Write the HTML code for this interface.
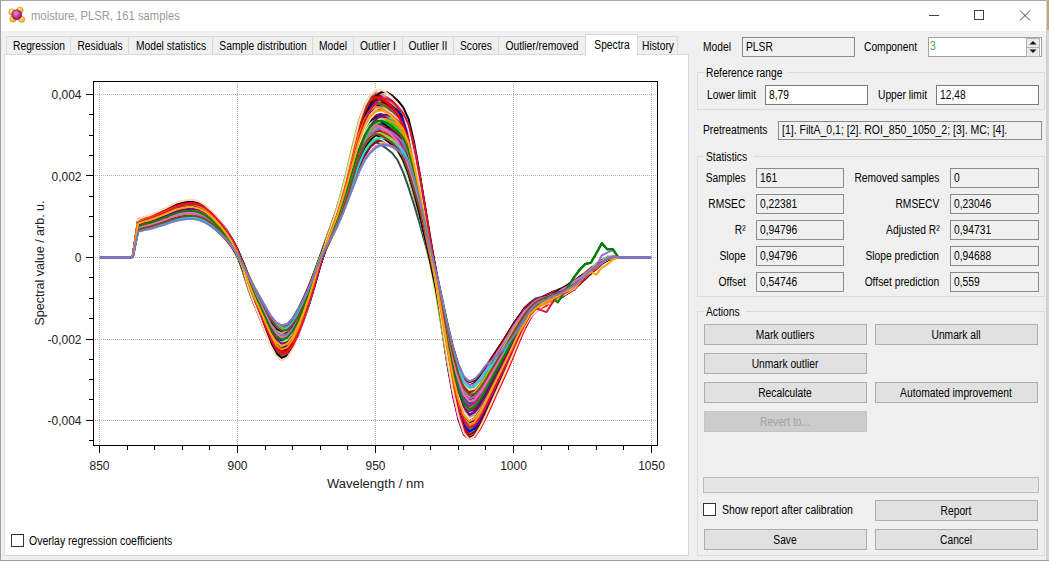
<!DOCTYPE html><html><head><meta charset="utf-8"><style>
html,body{margin:0;padding:0;}
body{width:1049px;height:561px;overflow:hidden;position:relative;background:#f0f0f0;font-family:"Liberation Sans",sans-serif;font-size:12px;}
.b{position:absolute;box-sizing:border-box;}
.t{position:absolute;white-space:nowrap;line-height:14px;}
svg{position:absolute;left:0;top:0;}
</style></head><body>
<div class="b" style="left:0px;top:1px;width:1046px;height:30px;background:#ffffff;"></div>
<div class="b" style="left:0px;top:0px;width:1049px;height:1px;background:#a8a8a8;"></div>
<div class="b" style="left:0px;top:0px;width:1px;height:561px;background:#a0a0a0;"></div>
<div class="b" style="left:1046px;top:0px;width:1px;height:561px;background:#cfcfcf;"></div>
<div class="b" style="left:1047px;top:0px;width:2px;height:561px;background:#d4d4d4;"></div>
<div class="b" style="left:1047px;top:0px;width:2px;height:30px;background:#c8a878;"></div>
<div class="b" style="left:0px;top:560px;width:1049px;height:1px;background:#9c9c9c;"></div>
<svg width="40" height="32" style="left:0;top:0">
<defs><radialGradient id="gy" cx="40%" cy="35%" r="65%"><stop offset="0" stop-color="#ffe88a"/><stop offset="1" stop-color="#e2a420"/></radialGradient>
<radialGradient id="gm" cx="40%" cy="35%" r="65%"><stop offset="0" stop-color="#e890d0"/><stop offset="1" stop-color="#b00070"/></radialGradient></defs>
<circle cx="12" cy="12" r="3.3" fill="url(#gy)" stroke="#c89020" stroke-width="0.4"/><circle cx="20" cy="10.2" r="3.3" fill="url(#gy)" stroke="#c89020" stroke-width="0.4"/>
<circle cx="13" cy="19" r="3.3" fill="url(#gy)" stroke="#c89020" stroke-width="0.4"/><circle cx="21.5" cy="19.3" r="3.3" fill="url(#gy)" stroke="#c89020" stroke-width="0.4"/>
<circle cx="16.7" cy="14.8" r="4.9" fill="url(#gm)" stroke="#7a1030" stroke-width="0.7"/>
</svg>
<div class="t" style="left:30.5px;top:8.5px;color:#999999;font-size:12.5px;transform:scaleX(0.9);transform-origin:0 0;">moisture, PLSR, 161 samples</div>
<svg width="140" height="31" style="left:909px;top:0">
<line x1="20" y1="15.5" x2="30" y2="15.5" stroke="#404040" stroke-width="1"/>
<rect x="65.5" y="10.5" width="9" height="9" fill="none" stroke="#404040" stroke-width="1"/>
<line x1="111" y1="10.5" x2="121" y2="20.5" stroke="#404040" stroke-width="1"/>
<line x1="121" y1="10.5" x2="111" y2="20.5" stroke="#404040" stroke-width="1"/>
</svg>
<div class="b" style="left:4px;top:54px;width:685px;height:502px;background:#ffffff;border:1px solid #d9d9d9;"></div>
<div class="b" style="left:6px;top:36px;width:65px;height:19px;background:#f0f0f0;border:1px solid #d9d9d9;"></div>
<div class="t" style="left:-111.5px;width:300px;text-align:center;top:39.0px;color:#000;font-size:12px;transform:scaleX(0.855);transform-origin:50% 0;">Regression</div>
<div class="b" style="left:70px;top:36px;width:59px;height:19px;background:#f0f0f0;border:1px solid #d9d9d9;"></div>
<div class="t" style="left:-50.5px;width:300px;text-align:center;top:39.0px;color:#000;font-size:12px;transform:scaleX(0.855);transform-origin:50% 0;">Residuals</div>
<div class="b" style="left:128px;top:36px;width:85px;height:19px;background:#f0f0f0;border:1px solid #d9d9d9;"></div>
<div class="t" style="left:20.5px;width:300px;text-align:center;top:39.0px;color:#000;font-size:12px;transform:scaleX(0.855);transform-origin:50% 0;">Model statistics</div>
<div class="b" style="left:212px;top:36px;width:101px;height:19px;background:#f0f0f0;border:1px solid #d9d9d9;"></div>
<div class="t" style="left:112.5px;width:300px;text-align:center;top:39.0px;color:#000;font-size:12px;transform:scaleX(0.855);transform-origin:50% 0;">Sample distribution</div>
<div class="b" style="left:312px;top:36px;width:42px;height:19px;background:#f0f0f0;border:1px solid #d9d9d9;"></div>
<div class="t" style="left:183.0px;width:300px;text-align:center;top:39.0px;color:#000;font-size:12px;transform:scaleX(0.855);transform-origin:50% 0;">Model</div>
<div class="b" style="left:353px;top:36px;width:50px;height:19px;background:#f0f0f0;border:1px solid #d9d9d9;"></div>
<div class="t" style="left:228.0px;width:300px;text-align:center;top:39.0px;color:#000;font-size:12px;transform:scaleX(0.855);transform-origin:50% 0;">Outlier I</div>
<div class="b" style="left:402px;top:36px;width:52px;height:19px;background:#f0f0f0;border:1px solid #d9d9d9;"></div>
<div class="t" style="left:278.0px;width:300px;text-align:center;top:39.0px;color:#000;font-size:12px;transform:scaleX(0.855);transform-origin:50% 0;">Outlier II</div>
<div class="b" style="left:453px;top:36px;width:46px;height:19px;background:#f0f0f0;border:1px solid #d9d9d9;"></div>
<div class="t" style="left:326.0px;width:300px;text-align:center;top:39.0px;color:#000;font-size:12px;transform:scaleX(0.855);transform-origin:50% 0;">Scores</div>
<div class="b" style="left:498px;top:36px;width:88px;height:19px;background:#f0f0f0;border:1px solid #d9d9d9;"></div>
<div class="t" style="left:392.0px;width:300px;text-align:center;top:39.0px;color:#000;font-size:12px;transform:scaleX(0.855);transform-origin:50% 0;">Outlier/removed</div>
<div class="b" style="left:637px;top:36px;width:41px;height:19px;background:#f0f0f0;border:1px solid #d9d9d9;"></div>
<div class="t" style="left:507.5px;width:300px;text-align:center;top:39.0px;color:#000;font-size:12px;transform:scaleX(0.855);transform-origin:50% 0;">History</div>
<div class="b" style="left:585px;top:34px;width:53px;height:22px;background:#ffffff;border:1px solid #d9d9d9;border-bottom:none;"></div>
<div class="t" style="left:461.5px;width:300px;text-align:center;top:37.5px;color:#000;font-size:12px;transform:scaleX(0.855);transform-origin:50% 0;">Spectra</div>
<svg width="1049" height="561" viewBox="0 0 1049 561" style="left:0;top:0"><path d="M99.5 83V445 M237.5 83V445 M375.5 83V445 M513.5 83V445 M651.5 83V445 M95 94.5H657 M95 175.5H657 M95 257.5H657 M95 339.5H657 M95 420.5H657" stroke="#b0b0b0" stroke-width="1" stroke-dasharray="1 1" fill="none" shape-rendering="crispEdges"/><path d="M132.6 257.5 L138.1 230.0 L143.7 228.8 L149.2 227.5 L154.7 225.9 L160.2 224.2 L165.7 222.4 L171.3 220.4 L176.8 218.9 L182.3 217.9 L187.8 217.4 L193.3 217.7 L198.9 219.1 L204.4 221.6 L209.9 225.2 L215.4 229.5 L220.9 234.4 L226.5 240.4 L232.0 247.5 L237.5 256.3 L243.0 267.9 L248.5 280.5 L254.1 290.9 L259.6 300.4 L265.1 310.5 L270.6 319.5 L276.1 325.5 L281.7 327.5 L287.2 324.5 L292.7 318.1 L298.2 308.7 L303.7 297.4 L309.3 284.7 L314.8 270.5 L320.3 256.3 L325.8 244.5 L331.3 233.7 L336.9 221.7 L342.4 207.4 L347.9 191.3 L353.4 173.9 L358.9 158.4 L364.5 148.5 L370.0 143.0 L375.5 142.2 L381.0 144.7 L386.5 148.4 L392.1 153.0 L397.6 160.2 L403.1 172.2 L408.6 187.7 L414.1 205.0 L419.7 223.8 L425.2 243.7 L430.7 264.2 L436.2 285.7 L441.7 310.0 L447.3 334.6 L452.8 355.8 L458.3 372.4 L463.8 383.0 L469.3 386.2 L474.9 382.5 L480.4 375.7 L485.9 367.6 L491.4 358.9 L496.9 350.4 L502.5 341.8 L508.0 332.9 L513.5 323.8 L519.0 315.8 L524.5 308.1 L530.1 302.6 L535.6 298.5 L541.1 297.2 L546.6 295.1 L552.1 292.6 L557.7 289.7 L563.2 287.8 L568.7 285.9 L574.2 281.2 L579.7 277.9 L585.3 273.7 L590.8 267.7 L596.3 264.8 L601.8 260.7 L607.3 257.4 L612.9 256.9 L618.4 257.5" stroke="#2f4f4f" stroke-width="2" fill="none" stroke-linejoin="round"/><path d="M132.6 257.5 L138.1 229.2 L143.7 226.5 L149.2 225.4 L154.7 223.7 L160.2 221.9 L165.7 219.9 L171.3 217.8 L176.8 215.7 L182.3 214.3 L187.8 213.4 L193.3 213.2 L198.9 214.0 L204.4 216.0 L209.9 219.4 L215.4 223.7 L220.9 228.7 L226.5 234.7 L232.0 241.8 L237.5 250.4 L243.0 261.6 L248.5 275.7 L254.1 288.8 L259.6 299.7 L265.1 310.6 L270.6 321.7 L276.1 330.5 L281.7 335.4 L287.2 335.1 L292.7 329.9 L298.2 321.2 L303.7 309.4 L309.3 296.1 L314.8 281.0 L320.3 264.6 L325.8 249.8 L331.3 237.4 L336.9 225.0 L342.4 210.3 L347.9 193.4 L353.4 174.7 L358.9 155.7 L364.5 141.1 L370.0 132.4 L375.5 128.1 L381.0 128.5 L386.5 131.6 L392.1 135.8 L397.6 140.9 L403.1 149.1 L408.6 163.0 L414.1 181.3 L419.7 202.2 L425.2 225.1 L430.7 249.2 L436.2 273.4 L441.7 299.2 L447.3 327.7 L452.8 354.0 L458.3 375.5 L463.8 391.1 L469.3 399.3 L474.9 398.8 L480.4 392.6 L485.9 384.2 L491.4 374.7 L496.9 365.1 L502.5 355.6 L508.0 346.0 L513.5 336.0 L519.0 326.4 L524.5 317.2 L530.1 309.8 L535.6 303.9 L541.1 301.3 L546.6 299.2 L552.1 296.9 L557.7 294.4 L563.2 292.0 L568.7 287.7 L574.2 284.8 L579.7 281.0 L585.3 275.3 L590.8 272.0 L596.3 266.7 L601.8 262.6 L607.3 260.5 L612.9 258.3 L618.4 257.5" stroke="#00bfff" stroke-width="2" fill="none" stroke-linejoin="round"/><path d="M132.6 257.5 L138.1 222.3 L143.7 219.8 L149.2 218.5 L154.7 216.3 L160.2 214.1 L165.7 211.7 L171.3 209.0 L176.8 206.7 L182.3 205.0 L187.8 204.1 L193.3 203.9 L198.9 205.2 L204.4 207.9 L209.9 212.3 L215.4 217.7 L220.9 223.9 L226.5 231.3 L232.0 240.2 L237.5 251.0 L243.0 265.3 L248.5 282.4 L254.1 297.7 L259.6 310.7 L265.1 324.0 L270.6 337.2 L276.1 347.0 L281.7 352.0 L287.2 350.4 L292.7 343.3 L298.2 332.1 L303.7 317.4 L309.3 301.0 L314.8 282.5 L320.3 262.8 L325.8 245.7 L331.3 231.3 L336.9 216.5 L342.4 199.5 L347.9 180.7 L353.4 161.0 L358.9 141.3 L364.5 124.9 L370.0 113.7 L375.5 106.6 L381.0 102.6 L386.5 102.5 L392.1 105.4 L397.6 110.0 L403.1 116.3 L408.6 127.0 L414.1 148.0 L419.7 177.1 L425.2 209.8 L430.7 243.5 L436.2 276.1 L441.7 309.7 L447.3 345.4 L452.8 376.9 L458.3 401.9 L463.8 419.4 L469.3 427.4 L474.9 425.2 L480.4 417.2 L485.9 406.8 L491.4 393.1 L496.9 379.7 L502.5 366.8 L508.0 354.1 L513.5 341.3 L519.0 329.2 L524.5 318.9 L530.1 312.8 L535.6 306.8 L541.1 302.2 L546.6 299.6 L552.1 296.5 L557.7 294.5 L563.2 293.0 L568.7 289.3 L574.2 286.0 L579.7 279.7 L585.3 277.2 L590.8 270.7 L596.3 267.0 L601.8 262.5 L607.3 259.7 L612.9 256.1 L618.4 257.5" stroke="#7b7bc4" stroke-width="2" fill="none" stroke-linejoin="round"/><path d="M132.6 257.5 L138.1 223.2 L143.7 221.1 L149.2 219.8 L154.7 217.7 L160.2 215.6 L165.7 213.3 L171.3 210.7 L176.8 208.5 L182.3 207.1 L187.8 206.2 L193.3 206.2 L198.9 207.5 L204.4 210.3 L209.9 214.7 L215.4 219.9 L220.9 226.0 L226.5 233.2 L232.0 242.0 L237.5 252.7 L243.0 266.8 L248.5 283.4 L254.1 297.8 L259.6 310.2 L265.1 323.2 L270.6 335.8 L276.1 344.9 L281.7 349.2 L287.2 347.0 L292.7 339.7 L298.2 328.4 L303.7 314.0 L309.3 297.9 L314.8 279.6 L320.3 260.5 L325.8 244.2 L331.3 230.0 L336.9 215.0 L342.4 197.3 L347.9 177.4 L353.4 156.1 L358.9 135.2 L364.5 119.6 L370.0 110.0 L375.5 104.9 L381.0 104.5 L386.5 107.5 L392.1 111.9 L397.6 117.6 L403.1 126.4 L408.6 142.6 L414.1 165.9 L419.7 193.2 L425.2 222.7 L430.7 253.0 L436.2 283.1 L441.7 315.5 L447.3 349.8 L452.8 379.7 L458.3 403.4 L463.8 419.6 L469.3 426.2 L474.9 423.1 L480.4 414.7 L485.9 404.2 L491.4 392.8 L496.9 381.4 L502.5 370.1 L508.0 358.5 L513.5 346.6 L519.0 334.4 L524.5 323.9 L530.1 315.6 L535.6 309.0 L541.1 304.8 L546.6 301.9 L552.1 299.3 L557.7 296.8 L563.2 293.6 L568.7 290.8 L574.2 287.1 L579.7 280.8 L585.3 276.3 L590.8 271.3 L596.3 267.8 L601.8 262.5 L607.3 258.4 L612.9 257.8 L618.4 257.5" stroke="#c71585" stroke-width="2" fill="none" stroke-linejoin="round"/><path d="M132.6 257.5 L138.1 231.0 L143.7 229.2 L149.2 228.3 L154.7 226.7 L160.2 225.1 L165.7 223.4 L171.3 221.5 L176.8 219.8 L182.3 218.6 L187.8 217.9 L193.3 217.9 L198.9 218.8 L204.4 220.8 L209.9 224.0 L215.4 228.0 L220.9 232.5 L226.5 238.0 L232.0 244.5 L237.5 252.4 L243.0 262.8 L248.5 275.5 L254.1 286.9 L259.6 296.5 L265.1 306.4 L270.6 316.3 L276.1 323.8 L281.7 327.8 L287.2 326.9 L292.7 321.8 L298.2 313.7 L303.7 302.9 L309.3 290.7 L314.8 276.9 L320.3 262.0 L325.8 249.0 L331.3 238.0 L336.9 226.8 L342.4 213.8 L347.9 199.5 L353.4 184.4 L358.9 169.2 L364.5 156.2 L370.0 147.0 L375.5 140.9 L381.0 137.1 L386.5 136.1 L392.1 137.7 L397.6 140.9 L403.1 145.4 L408.6 152.9 L414.1 168.6 L419.7 191.5 L425.2 217.6 L430.7 244.7 L436.2 271.0 L441.7 297.9 L447.3 326.7 L452.8 352.2 L458.3 372.6 L463.8 386.9 L469.3 393.8 L474.9 392.3 L480.4 386.0 L485.9 377.8 L491.4 368.6 L496.9 359.4 L502.5 350.3 L508.0 341.0 L513.5 331.3 L519.0 322.4 L524.5 313.6 L530.1 306.9 L535.6 302.9 L541.1 299.5 L546.6 297.1 L552.1 295.6 L557.7 293.4 L563.2 289.9 L568.7 287.4 L574.2 283.8 L579.7 280.3 L585.3 274.1 L590.8 270.1 L596.3 266.5 L601.8 261.4 L607.3 260.4 L612.9 258.0 L618.4 257.5" stroke="#000000" stroke-width="2" fill="none" stroke-linejoin="round"/><path d="M132.6 257.5 L138.1 229.0 L143.7 227.5 L149.2 226.3 L154.7 224.5 L160.2 222.7 L165.7 220.7 L171.3 218.6 L176.8 216.8 L182.3 215.7 L187.8 215.0 L193.3 215.1 L198.9 216.4 L204.4 218.9 L209.9 222.6 L215.4 227.0 L220.9 232.2 L226.5 238.3 L232.0 245.7 L237.5 254.9 L243.0 267.0 L248.5 280.6 L254.1 292.1 L259.6 302.2 L265.1 312.9 L270.6 322.8 L276.1 329.7 L281.7 332.4 L287.2 329.8 L292.7 323.3 L298.2 313.6 L303.7 301.6 L309.3 288.3 L314.8 273.3 L320.3 258.0 L325.8 245.2 L331.3 233.9 L336.9 221.8 L342.4 207.6 L347.9 191.8 L353.4 175.1 L358.9 159.2 L364.5 147.7 L370.0 140.7 L375.5 137.1 L381.0 137.2 L386.5 139.7 L392.1 143.4 L397.6 148.0 L403.1 155.1 L408.6 168.4 L414.1 187.2 L419.7 209.1 L425.2 232.6 L430.7 256.5 L436.2 280.2 L441.7 305.9 L447.3 332.3 L452.8 354.9 L458.3 372.6 L463.8 384.2 L469.3 388.3 L474.9 385.1 L480.4 378.3 L485.9 370.1 L491.4 361.3 L496.9 352.6 L502.5 343.9 L508.0 334.9 L513.5 325.7 L519.0 317.5 L524.5 310.1 L530.1 304.3 L535.6 300.4 L541.1 297.2 L546.6 295.8 L552.1 297.8 L557.7 302.3 L563.2 294.2 L568.7 285.6 L574.2 277.1 L579.7 269.7 L585.3 264.0 L590.8 262.8 L596.3 253.4 L601.8 243.2 L607.3 249.3 L612.9 249.3 L618.4 257.5" stroke="#008000" stroke-width="2" fill="none" stroke-linejoin="round"/><path d="M132.6 257.5 L138.1 221.5 L143.7 218.7 L149.2 217.4 L154.7 215.2 L160.2 212.9 L165.7 210.5 L171.3 207.8 L176.8 205.3 L182.3 203.6 L187.8 202.6 L193.3 202.4 L198.9 203.6 L204.4 206.2 L209.9 210.6 L215.4 216.1 L220.9 222.4 L226.5 229.9 L232.0 238.9 L237.5 249.8 L243.0 264.1 L248.5 281.6 L254.1 297.6 L259.6 310.9 L265.1 324.5 L270.6 338.2 L276.1 348.7 L281.7 354.3 L287.2 353.3 L292.7 346.4 L298.2 335.2 L303.7 320.4 L309.3 303.7 L314.8 284.9 L320.3 264.6 L325.8 246.7 L331.3 231.5 L336.9 216.2 L342.4 198.4 L347.9 178.3 L353.4 156.7 L358.9 134.8 L364.5 117.1 L370.0 105.7 L375.5 98.9 L381.0 96.6 L386.5 98.5 L392.1 102.5 L397.6 107.9 L403.1 115.3 L408.6 129.0 L414.1 151.9 L419.7 180.4 L425.2 211.9 L430.7 244.7 L436.2 276.9 L441.7 310.6 L447.3 347.0 L452.8 379.9 L458.3 406.3 L463.8 425.2 L469.3 434.5 L474.9 433.1 L480.4 425.0 L485.9 414.4 L491.4 402.6 L496.9 390.6 L502.5 378.8 L508.0 366.8 L513.5 354.3 L519.0 341.0 L524.5 329.6 L530.1 318.7 L535.6 311.1 L541.1 306.8 L546.6 305.6 L552.1 300.8 L557.7 298.4 L563.2 296.0 L568.7 292.9 L574.2 288.6 L579.7 284.8 L585.3 278.0 L590.8 272.6 L596.3 268.6 L601.8 263.7 L607.3 259.2 L612.9 258.2 L618.4 257.5" stroke="#ffa07a" stroke-width="2" fill="none" stroke-linejoin="round"/><path d="M132.6 257.5 L138.1 228.9 L143.7 226.6 L149.2 225.5 L154.7 223.9 L160.2 222.1 L165.7 220.2 L171.3 218.1 L176.8 216.2 L182.3 214.9 L187.8 214.1 L193.3 213.9 L198.9 214.9 L204.4 217.0 L209.9 220.4 L215.4 224.8 L220.9 229.7 L226.5 235.6 L232.0 242.6 L237.5 251.0 L243.0 262.0 L248.5 275.6 L254.1 288.1 L259.6 298.5 L265.1 309.0 L270.6 319.6 L276.1 327.7 L281.7 332.2 L287.2 331.6 L292.7 326.4 L298.2 317.9 L303.7 306.5 L309.3 293.7 L314.8 279.3 L320.3 263.6 L325.8 249.6 L331.3 237.9 L336.9 225.9 L342.4 211.7 L347.9 195.1 L353.4 176.8 L358.9 158.4 L364.5 144.9 L370.0 137.1 L375.5 133.9 L381.0 135.3 L386.5 138.7 L392.1 142.9 L397.6 148.6 L403.1 158.1 L408.6 172.4 L414.1 189.6 L419.7 209.0 L425.2 230.0 L430.7 252.2 L436.2 274.9 L441.7 299.7 L447.3 327.1 L452.8 352.4 L458.3 373.1 L463.8 388.2 L469.3 396.0 L474.9 395.5 L480.4 389.5 L485.9 381.4 L491.4 372.3 L496.9 363.0 L502.5 353.9 L508.0 344.5 L513.5 334.7 L519.0 325.4 L524.5 317.5 L530.1 309.0 L535.6 303.7 L541.1 301.0 L546.6 298.8 L552.1 296.5 L557.7 292.9 L563.2 290.2 L568.7 287.6 L574.2 284.3 L579.7 280.2 L585.3 276.0 L590.8 271.0 L596.3 267.7 L601.8 263.1 L607.3 259.9 L612.9 256.8 L618.4 257.5" stroke="#ffdab9" stroke-width="2" fill="none" stroke-linejoin="round"/><path d="M132.6 257.5 L138.1 227.1 L143.7 224.4 L149.2 223.2 L154.7 221.4 L160.2 219.4 L165.7 217.3 L171.3 215.0 L176.8 212.8 L182.3 211.3 L187.8 210.4 L193.3 210.1 L198.9 211.0 L204.4 213.1 L209.9 216.8 L215.4 221.5 L220.9 226.8 L226.5 233.2 L232.0 240.8 L237.5 250.0 L243.0 262.1 L248.5 277.1 L254.1 291.1 L259.6 302.7 L265.1 314.4 L270.6 326.3 L276.1 335.6 L281.7 340.9 L287.2 340.5 L292.7 334.9 L298.2 325.5 L303.7 312.9 L309.3 298.6 L314.8 282.5 L320.3 264.9 L325.8 249.2 L331.3 235.9 L336.9 222.6 L342.4 207.0 L347.9 188.9 L353.4 169.0 L358.9 148.8 L364.5 133.2 L370.0 123.9 L375.5 119.3 L381.0 119.6 L386.5 122.8 L392.1 127.2 L397.6 132.6 L403.1 141.2 L408.6 155.9 L414.1 175.5 L419.7 198.1 L425.2 222.7 L430.7 248.6 L436.2 274.6 L441.7 302.3 L447.3 332.8 L452.8 360.9 L458.3 383.8 L463.8 400.4 L469.3 409.0 L474.9 408.4 L480.4 401.7 L485.9 392.7 L491.4 382.6 L496.9 372.3 L502.5 362.2 L508.0 351.9 L513.5 341.2 L519.0 330.6 L524.5 321.2 L530.1 313.0 L535.6 307.7 L541.1 303.0 L546.6 301.0 L552.1 298.5 L557.7 295.0 L563.2 291.5 L568.7 289.1 L574.2 287.3 L579.7 281.9 L585.3 276.4 L590.8 271.7 L596.3 267.8 L601.8 262.0 L607.3 259.6 L612.9 257.0 L618.4 257.5" stroke="#ff0000" stroke-width="2" fill="none" stroke-linejoin="round"/><path d="M132.6 257.5 L138.1 226.2 L143.7 224.2 L149.2 223.0 L154.7 221.1 L160.2 219.2 L165.7 217.1 L171.3 214.8 L176.8 212.8 L182.3 211.5 L187.8 210.8 L193.3 210.8 L198.9 212.0 L204.4 214.5 L209.9 218.5 L215.4 223.3 L220.9 228.8 L226.5 235.3 L232.0 243.2 L237.5 252.8 L243.0 265.5 L248.5 280.3 L254.1 293.3 L259.6 304.4 L265.1 315.9 L270.6 327.1 L276.1 335.3 L281.7 339.1 L287.2 337.2 L292.7 330.8 L298.2 320.8 L303.7 308.0 L309.3 293.7 L314.8 277.6 L320.3 260.6 L325.8 246.1 L331.3 233.5 L336.9 220.1 L342.4 204.2 L347.9 186.0 L353.4 166.2 L358.9 147.0 L364.5 133.6 L370.0 125.9 L375.5 123.0 L381.0 124.8 L386.5 128.6 L392.1 133.4 L397.6 139.8 L403.1 150.8 L408.6 167.2 L414.1 186.9 L419.7 208.7 L425.2 232.3 L430.7 256.7 L436.2 281.6 L441.7 309.2 L447.3 338.7 L452.8 364.9 L458.3 386.0 L463.8 400.6 L469.3 406.9 L474.9 404.5 L480.4 397.3 L485.9 388.2 L491.4 378.3 L496.9 368.3 L502.5 358.4 L508.0 348.2 L513.5 337.6 L519.0 327.4 L524.5 317.5 L530.1 310.0 L535.6 305.7 L541.1 301.8 L546.6 299.6 L552.1 297.8 L557.7 302.3 L563.2 294.2 L568.7 285.6 L574.2 277.1 L579.7 269.7 L585.3 264.0 L590.8 262.8 L596.3 253.4 L601.8 243.2 L607.3 249.3 L612.9 249.3 L618.4 257.5" stroke="#008000" stroke-width="2" fill="none" stroke-linejoin="round"/><path d="M132.6 257.5 L138.1 222.0 L143.7 220.2 L149.2 218.7 L154.7 216.5 L160.2 214.3 L165.7 211.9 L171.3 209.4 L176.8 207.2 L182.3 205.8 L187.8 205.1 L193.3 205.3 L198.9 206.8 L204.4 210.0 L209.9 214.6 L215.4 220.1 L220.9 226.4 L226.5 234.0 L232.0 243.2 L237.5 254.4 L243.0 269.4 L248.5 286.1 L254.1 300.2 L259.6 312.7 L265.1 326.0 L270.6 338.2 L276.1 346.8 L281.7 350.1 L287.2 346.8 L292.7 338.8 L298.2 326.8 L303.7 312.0 L309.3 295.5 L314.8 276.8 L320.3 257.8 L325.8 241.9 L331.3 227.7 L336.9 212.0 L342.4 193.4 L347.9 172.3 L353.4 149.4 L358.9 128.4 L364.5 114.5 L370.0 106.9 L375.5 105.3 L381.0 108.4 L386.5 113.2 L392.1 119.2 L397.6 128.2 L403.1 143.2 L408.6 163.1 L414.1 185.5 L419.7 210.0 L425.2 236.1 L430.7 263.0 L436.2 290.9 L441.7 322.3 L447.3 354.8 L452.8 383.0 L458.3 405.3 L463.8 420.1 L469.3 425.2 L474.9 421.0 L480.4 412.4 L485.9 401.8 L491.4 390.5 L496.9 379.3 L502.5 368.2 L508.0 356.6 L513.5 344.8 L519.0 332.7 L524.5 321.7 L530.1 312.8 L535.6 306.7 L541.1 305.2 L546.6 301.2 L552.1 298.7 L557.7 296.3 L563.2 294.2 L568.7 290.3 L574.2 286.4 L579.7 280.9 L585.3 275.8 L590.8 270.2 L596.3 266.0 L601.8 262.7 L607.3 258.5 L612.9 256.7 L618.4 257.5" stroke="#7cfc00" stroke-width="2" fill="none" stroke-linejoin="round"/><path d="M132.6 257.5 L138.1 226.6 L143.7 225.2 L149.2 223.8 L154.7 222.0 L160.2 220.2 L165.7 218.1 L171.3 216.0 L176.8 214.3 L182.3 213.3 L187.8 212.8 L193.3 213.1 L198.9 214.7 L204.4 217.6 L209.9 221.7 L215.4 226.5 L220.9 232.1 L226.5 238.7 L232.0 246.7 L237.5 256.6 L243.0 269.7 L248.5 283.6 L254.1 295.2 L259.6 305.7 L265.1 316.9 L270.6 326.8 L276.1 333.4 L281.7 335.3 L287.2 331.9 L292.7 324.6 L298.2 314.0 L303.7 301.3 L309.3 287.2 L314.8 271.3 L320.3 255.7 L325.8 242.7 L331.3 231.0 L336.9 218.1 L342.4 203.3 L347.9 187.3 L353.4 170.9 L358.9 155.5 L364.5 143.7 L370.0 135.8 L375.5 130.7 L381.0 128.1 L386.5 128.4 L392.1 130.9 L397.6 134.7 L403.1 140.3 L408.6 150.7 L414.1 170.9 L419.7 197.1 L425.2 226.1 L430.7 255.2 L436.2 283.4 L441.7 313.5 L447.3 343.5 L452.8 368.4 L458.3 387.5 L463.8 399.5 L469.3 402.8 L474.9 398.4 L480.4 390.7 L485.9 381.5 L491.4 371.8 L496.9 362.1 L502.5 352.4 L508.0 342.4 L513.5 332.1 L519.0 322.4 L524.5 313.4 L530.1 307.1 L535.6 303.2 L541.1 298.8 L546.6 297.3 L552.1 296.5 L557.7 292.6 L563.2 290.5 L568.7 286.4 L574.2 283.8 L579.7 278.6 L585.3 273.8 L590.8 269.3 L596.3 265.2 L601.8 262.1 L607.3 257.8 L612.9 256.3 L618.4 257.5" stroke="#ff8c00" stroke-width="2" fill="none" stroke-linejoin="round"/><path d="M132.6 257.5 L138.1 222.1 L143.7 220.5 L149.2 219.0 L154.7 216.9 L160.2 214.7 L165.7 212.4 L171.3 209.9 L176.8 207.9 L182.3 206.6 L187.8 206.0 L193.3 206.3 L198.9 208.0 L204.4 211.2 L209.9 215.9 L215.4 221.3 L220.9 227.7 L226.5 235.3 L232.0 244.4 L237.5 255.7 L243.0 270.6 L248.5 286.9 L254.1 300.4 L259.6 312.7 L265.1 325.7 L270.6 337.5 L276.1 345.5 L281.7 348.2 L287.2 344.5 L292.7 336.4 L298.2 324.3 L303.7 309.6 L309.3 293.2 L314.8 274.8 L320.3 256.3 L325.8 240.9 L331.3 226.9 L336.9 211.4 L342.4 192.9 L347.9 172.4 L353.4 150.2 L358.9 130.0 L364.5 116.4 L370.0 108.6 L375.5 106.0 L381.0 108.3 L386.5 112.4 L392.1 117.7 L397.6 125.2 L403.1 138.4 L408.6 158.1 L414.1 181.6 L419.7 207.5 L425.2 235.2 L430.7 263.4 L436.2 292.4 L441.7 324.8 L447.3 357.8 L452.8 385.9 L458.3 408.0 L463.8 422.1 L469.3 426.4 L474.9 421.7 L480.4 412.7 L485.9 402.0 L491.4 390.7 L496.9 379.4 L502.5 368.1 L508.0 356.4 L513.5 344.5 L519.0 332.3 L524.5 321.2 L530.1 312.9 L535.6 306.7 L541.1 304.2 L546.6 301.4 L552.1 300.0 L557.7 295.7 L563.2 293.9 L568.7 290.6 L574.2 285.2 L579.7 282.4 L585.3 275.5 L590.8 270.4 L596.3 266.2 L601.8 260.7 L607.3 258.8 L612.9 256.7 L618.4 257.5" stroke="#4169e1" stroke-width="2" fill="none" stroke-linejoin="round"/><path d="M132.6 257.5 L138.1 222.6 L143.7 221.0 L149.2 219.4 L154.7 217.3 L160.2 215.2 L165.7 212.8 L171.3 210.4 L176.8 208.4 L182.3 207.2 L187.8 206.5 L193.3 206.9 L198.9 208.7 L204.4 211.9 L209.9 216.6 L215.4 222.0 L220.9 228.4 L226.5 236.0 L232.0 245.1 L237.5 256.5 L243.0 271.6 L248.5 287.6 L254.1 300.9 L259.6 313.2 L265.1 326.1 L270.6 337.6 L276.1 345.3 L281.7 347.5 L287.2 343.6 L292.7 335.2 L298.2 323.0 L303.7 308.3 L309.3 291.9 L314.8 273.4 L320.3 255.3 L325.8 240.3 L331.3 226.6 L336.9 211.6 L342.4 194.3 L347.9 175.6 L353.4 156.2 L358.9 138.0 L364.5 124.4 L370.0 115.6 L375.5 110.1 L381.0 107.9 L386.5 109.1 L392.1 112.5 L397.6 117.3 L403.1 124.2 L408.6 137.6 L414.1 161.5 L419.7 191.3 L425.2 223.7 L430.7 256.4 L436.2 288.1 L441.7 322.2 L447.3 356.0 L452.8 384.2 L458.3 405.7 L463.8 419.1 L469.3 422.6 L474.9 417.6 L480.4 408.6 L485.9 398.0 L491.4 385.5 L496.9 373.3 L502.5 361.3 L508.0 349.2 L513.5 337.1 L519.0 325.7 L524.5 317.4 L530.1 309.7 L535.6 305.6 L541.1 301.5 L546.6 299.7 L552.1 296.7 L557.7 294.2 L563.2 291.5 L568.7 287.3 L574.2 283.3 L579.7 279.1 L585.3 274.8 L590.8 270.2 L596.3 264.9 L601.8 259.6 L607.3 258.3 L612.9 257.4 L618.4 257.5" stroke="#40e0d0" stroke-width="2" fill="none" stroke-linejoin="round"/><path d="M132.6 257.5 L138.1 222.2 L143.7 220.5 L149.2 218.9 L154.7 216.8 L160.2 214.6 L165.7 212.2 L171.3 209.7 L176.8 207.6 L182.3 206.3 L187.8 205.5 L193.3 205.8 L198.9 207.4 L204.4 210.6 L209.9 215.2 L215.4 220.7 L220.9 227.0 L226.5 234.6 L232.0 243.8 L237.5 255.2 L243.0 270.3 L248.5 286.8 L254.1 300.8 L259.6 313.4 L265.1 326.7 L270.6 338.8 L276.1 347.2 L281.7 350.2 L287.2 346.8 L292.7 338.6 L298.2 326.4 L303.7 311.4 L309.3 294.8 L314.8 275.9 L320.3 256.9 L325.8 241.1 L331.3 226.8 L336.9 211.3 L342.4 193.0 L347.9 172.8 L353.4 151.4 L358.9 131.3 L364.5 116.7 L370.0 107.8 L375.5 103.0 L381.0 102.8 L386.5 105.8 L392.1 110.2 L397.6 116.0 L403.1 125.1 L408.6 142.3 L414.1 167.0 L419.7 195.7 L425.2 226.6 L430.7 257.9 L436.2 289.0 L441.7 322.8 L447.3 357.2 L452.8 386.5 L458.3 409.2 L463.8 423.8 L469.3 428.4 L474.9 423.7 L480.4 414.6 L485.9 403.8 L491.4 392.2 L496.9 380.7 L502.5 369.3 L508.0 357.4 L513.5 345.3 L519.0 333.0 L524.5 324.1 L530.1 312.2 L535.6 308.8 L541.1 305.2 L546.6 301.7 L552.1 300.9 L557.7 295.5 L563.2 293.3 L568.7 290.1 L574.2 286.3 L579.7 281.0 L585.3 275.5 L590.8 270.5 L596.3 265.4 L601.8 261.3 L607.3 258.1 L612.9 256.3 L618.4 257.5" stroke="#adff2f" stroke-width="2" fill="none" stroke-linejoin="round"/><path d="M132.6 257.5 L138.1 228.9 L143.7 227.2 L149.2 226.1 L154.7 224.3 L160.2 222.5 L165.7 220.6 L171.3 218.5 L176.8 216.7 L182.3 215.4 L187.8 214.7 L193.3 214.7 L198.9 215.8 L204.4 218.2 L209.9 221.8 L215.4 226.2 L220.9 231.2 L226.5 237.3 L232.0 244.6 L237.5 253.5 L243.0 265.3 L248.5 279.1 L254.1 291.0 L259.6 301.4 L265.1 312.1 L270.6 322.5 L276.1 330.1 L281.7 333.5 L287.2 331.6 L292.7 325.6 L298.2 316.2 L303.7 304.2 L309.3 290.8 L314.8 275.7 L320.3 260.0 L325.8 246.5 L331.3 234.8 L336.9 222.5 L342.4 208.2 L347.9 192.1 L353.4 175.0 L358.9 158.3 L364.5 145.5 L370.0 137.4 L375.5 132.8 L381.0 131.8 L386.5 133.8 L392.1 137.1 L397.6 141.5 L403.1 147.9 L408.6 160.1 L414.1 179.2 L419.7 202.0 L425.2 226.9 L430.7 252.5 L436.2 277.6 L441.7 304.5 L447.3 332.7 L452.8 357.3 L458.3 376.8 L463.8 390.0 L469.3 395.5 L474.9 392.9 L480.4 386.0 L485.9 377.5 L491.4 368.2 L496.9 358.9 L502.5 349.7 L508.0 340.3 L513.5 330.5 L519.0 321.5 L524.5 313.6 L530.1 305.7 L535.6 302.2 L541.1 299.3 L546.6 297.2 L552.1 295.6 L557.7 292.9 L563.2 288.3 L568.7 286.4 L574.2 283.0 L579.7 278.5 L585.3 274.1 L590.8 269.4 L596.3 266.0 L601.8 262.0 L607.3 258.1 L612.9 257.3 L618.4 257.5" stroke="#d2691e" stroke-width="2" fill="none" stroke-linejoin="round"/><path d="M132.6 257.5 L138.1 222.7 L143.7 220.7 L149.2 219.3 L154.7 217.2 L160.2 215.0 L165.7 212.6 L171.3 210.0 L176.8 207.9 L182.3 206.4 L187.8 205.6 L193.3 205.7 L198.9 207.1 L204.4 210.0 L209.9 214.5 L215.4 219.8 L220.9 226.0 L226.5 233.4 L232.0 242.4 L237.5 253.3 L243.0 267.9 L248.5 284.5 L254.1 298.9 L259.6 311.4 L265.1 324.5 L270.6 337.0 L276.1 345.9 L281.7 349.9 L287.2 347.2 L292.7 339.6 L298.2 328.0 L303.7 313.4 L309.3 297.1 L314.8 278.6 L320.3 259.5 L325.8 243.3 L331.3 229.1 L336.9 213.9 L342.4 195.9 L347.9 175.8 L353.4 154.1 L358.9 133.3 L364.5 118.2 L370.0 109.1 L375.5 104.7 L381.0 105.3 L386.5 108.7 L392.1 113.5 L397.6 119.5 L403.1 129.4 L408.6 146.9 L414.1 170.3 L419.7 197.2 L425.2 226.1 L430.7 255.7 L436.2 285.3 L441.7 317.6 L447.3 351.4 L452.8 380.7 L458.3 403.9 L463.8 419.5 L469.3 425.6 L474.9 422.0 L480.4 413.5 L485.9 403.0 L491.4 391.7 L496.9 380.4 L502.5 369.2 L508.0 357.6 L513.5 345.8 L519.0 333.7 L524.5 322.9 L530.1 313.3 L535.6 308.8 L541.1 304.7 L546.6 301.9 L552.1 299.8 L557.7 296.0 L563.2 293.6 L568.7 290.0 L574.2 286.2 L579.7 281.5 L585.3 276.9 L590.8 270.5 L596.3 267.2 L601.8 260.5 L607.3 258.1 L612.9 256.7 L618.4 257.5" stroke="#cd5c5c" stroke-width="2" fill="none" stroke-linejoin="round"/><path d="M132.6 257.5 L138.1 229.6 L143.7 228.1 L149.2 227.0 L154.7 225.4 L160.2 223.7 L165.7 221.9 L171.3 219.9 L176.8 218.3 L182.3 217.2 L187.8 216.6 L193.3 216.8 L198.9 218.0 L204.4 220.3 L209.9 223.8 L215.4 228.1 L220.9 232.9 L226.5 238.8 L232.0 245.7 L237.5 254.2 L243.0 265.5 L248.5 278.5 L254.1 289.6 L259.6 299.3 L265.1 309.5 L270.6 319.2 L276.1 326.1 L281.7 329.2 L287.2 327.2 L292.7 321.3 L298.2 312.3 L303.7 301.0 L309.3 288.3 L314.8 274.0 L320.3 259.1 L325.8 246.4 L331.3 235.3 L336.9 223.4 L342.4 209.4 L347.9 193.8 L353.4 177.0 L358.9 160.6 L364.5 148.4 L370.0 140.8 L375.5 136.6 L381.0 136.1 L386.5 138.2 L392.1 141.5 L397.6 145.8 L403.1 152.6 L408.6 165.5 L414.1 184.2 L419.7 206.3 L425.2 230.2 L430.7 254.9 L436.2 279.3 L441.7 305.9 L447.3 333.7 L452.8 357.9 L458.3 377.1 L463.8 390.1 L469.3 395.2 L474.9 392.5 L480.4 385.7 L485.9 377.2 L491.4 368.0 L496.9 358.7 L502.5 349.6 L508.0 340.1 L513.5 330.4 L519.0 321.3 L524.5 313.1 L530.1 306.0 L535.6 302.2 L541.1 300.8 L546.6 297.2 L552.1 294.8 L557.7 292.9 L563.2 288.5 L568.7 286.8 L574.2 283.4 L579.7 279.0 L585.3 274.7 L590.8 270.2 L596.3 265.5 L601.8 261.5 L607.3 258.9 L612.9 257.1 L618.4 257.5" stroke="#556b2f" stroke-width="2" fill="none" stroke-linejoin="round"/><path d="M132.6 257.5 L138.1 231.4 L143.7 229.4 L149.2 228.4 L154.7 226.9 L160.2 225.2 L165.7 223.4 L171.3 221.5 L176.8 219.7 L182.3 218.4 L187.8 217.7 L193.3 217.5 L198.9 218.3 L204.4 220.2 L209.9 223.4 L215.4 227.4 L220.9 231.9 L226.5 237.4 L232.0 243.9 L237.5 251.8 L243.0 262.2 L248.5 274.9 L254.1 286.5 L259.6 296.3 L265.1 306.1 L270.6 316.1 L276.1 323.7 L281.7 327.9 L287.2 327.1 L292.7 322.2 L298.2 314.1 L303.7 303.3 L309.3 291.2 L314.8 277.5 L320.3 262.8 L325.8 249.7 L331.3 238.7 L336.9 227.6 L342.4 214.6 L347.9 199.8 L353.4 183.8 L358.9 167.6 L364.5 154.8 L370.0 146.7 L375.5 142.1 L381.0 141.1 L386.5 143.0 L392.1 146.1 L397.6 150.2 L403.1 156.0 L408.6 166.9 L414.1 183.6 L419.7 203.8 L425.2 226.0 L430.7 249.1 L436.2 271.9 L441.7 296.0 L447.3 322.0 L452.8 345.7 L458.3 364.7 L463.8 378.4 L469.3 385.1 L474.9 384.1 L480.4 378.3 L485.9 370.7 L491.4 362.2 L496.9 353.5 L502.5 345.0 L508.0 336.3 L513.5 327.3 L519.0 319.3 L524.5 311.7 L530.1 304.5 L535.6 301.9 L541.1 297.7 L546.6 298.0 L552.1 294.1 L557.7 290.5 L563.2 289.3 L568.7 286.3 L574.2 282.8 L579.7 278.3 L585.3 275.4 L590.8 270.8 L596.3 266.7 L601.8 262.6 L607.3 258.3 L612.9 258.0 L618.4 257.5" stroke="#9acd32" stroke-width="2" fill="none" stroke-linejoin="round"/><path d="M132.6 257.5 L138.1 226.3 L143.7 223.3 L149.2 222.1 L154.7 220.2 L160.2 218.2 L165.7 216.0 L171.3 213.6 L176.8 211.3 L182.3 209.7 L187.8 208.7 L193.3 208.4 L198.9 209.3 L204.4 211.5 L209.9 215.2 L215.4 220.0 L220.9 225.5 L226.5 232.1 L232.0 240.1 L237.5 249.6 L243.0 262.1 L248.5 277.7 L254.1 292.4 L259.6 304.6 L265.1 316.8 L270.6 329.3 L276.1 339.1 L281.7 344.8 L287.2 344.4 L292.7 338.7 L298.2 328.9 L303.7 315.8 L309.3 300.8 L314.8 283.9 L320.3 265.5 L325.8 248.9 L331.3 234.9 L336.9 220.9 L342.4 204.5 L347.9 185.4 L353.4 164.5 L358.9 143.1 L364.5 126.7 L370.0 116.8 L375.5 112.0 L381.0 112.4 L386.5 115.9 L392.1 120.5 L397.6 126.3 L403.1 135.5 L408.6 151.0 L414.1 171.6 L419.7 195.2 L425.2 221.0 L430.7 248.0 L436.2 275.2 L441.7 304.2 L447.3 336.1 L452.8 365.5 L458.3 389.4 L463.8 406.8 L469.3 415.7 L474.9 415.1 L480.4 408.1 L485.9 398.6 L491.4 388.0 L496.9 377.2 L502.5 366.6 L508.0 355.8 L513.5 344.6 L519.0 333.3 L524.5 323.0 L530.1 314.0 L535.6 306.1 L541.1 302.7 L546.6 301.6 L552.1 298.3 L557.7 295.9 L563.2 293.3 L568.7 289.6 L574.2 286.9 L579.7 282.4 L585.3 277.5 L590.8 272.5 L596.3 267.0 L601.8 262.9 L607.3 260.5 L612.9 257.6 L618.4 257.5" stroke="#000000" stroke-width="2" fill="none" stroke-linejoin="round"/><path d="M132.6 257.5 L138.1 228.4 L143.7 226.8 L149.2 225.6 L154.7 223.8 L160.2 221.9 L165.7 219.9 L171.3 217.8 L176.8 215.9 L182.3 214.7 L187.8 214.0 L193.3 214.1 L198.9 215.3 L204.4 217.7 L209.9 221.5 L215.4 226.0 L220.9 231.2 L226.5 237.4 L232.0 244.9 L237.5 254.2 L243.0 266.4 L248.5 280.4 L254.1 292.3 L259.6 302.8 L265.1 313.8 L270.6 324.2 L276.1 331.6 L281.7 334.8 L287.2 332.5 L292.7 326.1 L298.2 316.3 L303.7 304.0 L309.3 290.3 L314.8 274.9 L320.3 258.9 L325.8 245.4 L331.3 233.6 L336.9 220.8 L342.4 205.7 L347.9 188.6 L353.4 170.2 L358.9 152.7 L364.5 140.5 L370.0 133.5 L375.5 130.7 L381.0 132.2 L386.5 135.7 L392.1 140.1 L397.6 145.9 L403.1 155.7 L408.6 171.3 L414.1 190.5 L419.7 211.8 L425.2 234.6 L430.7 258.1 L436.2 281.8 L441.7 308.0 L447.3 335.4 L452.8 359.2 L458.3 378.0 L463.8 390.7 L469.3 395.5 L474.9 392.4 L480.4 385.4 L485.9 376.8 L491.4 367.5 L496.9 358.2 L502.5 349.0 L508.0 339.5 L513.5 329.8 L519.0 320.9 L524.5 313.2 L530.1 305.4 L535.6 301.8 L541.1 299.4 L546.6 296.0 L552.1 293.8 L557.7 292.9 L563.2 290.3 L568.7 286.5 L574.2 282.5 L579.7 278.8 L585.3 273.0 L590.8 270.4 L596.3 264.9 L601.8 261.1 L607.3 258.6 L612.9 258.0 L618.4 257.5" stroke="#000000" stroke-width="2" fill="none" stroke-linejoin="round"/><path d="M132.6 257.5 L138.1 224.7 L143.7 222.7 L149.2 221.5 L154.7 219.6 L160.2 217.6 L165.7 215.5 L171.3 213.1 L176.8 211.1 L182.3 209.8 L187.8 209.0 L193.3 209.0 L198.9 210.3 L204.4 213.0 L209.9 217.0 L215.4 222.0 L220.9 227.7 L226.5 234.5 L232.0 242.6 L237.5 252.6 L243.0 265.7 L248.5 281.1 L254.1 294.6 L259.6 306.2 L265.1 318.2 L270.6 329.9 L276.1 338.5 L281.7 342.7 L287.2 340.8 L292.7 334.2 L298.2 323.9 L303.7 310.5 L309.3 295.6 L314.8 278.7 L320.3 260.9 L325.8 245.6 L331.3 232.3 L336.9 218.3 L342.4 201.8 L347.9 183.1 L353.4 162.8 L358.9 142.9 L364.5 128.0 L370.0 118.8 L375.5 114.0 L381.0 113.8 L386.5 116.6 L392.1 120.8 L397.6 126.1 L403.1 134.6 L408.6 150.2 L414.1 171.9 L419.7 197.2 L425.2 224.6 L430.7 253.0 L436.2 281.4 L441.7 312.1 L447.3 344.9 L452.8 373.8 L458.3 397.0 L463.8 413.1 L469.3 420.1 L474.9 417.5 L480.4 409.7 L485.9 399.8 L491.4 389.0 L496.9 378.0 L502.5 367.2 L508.0 356.1 L513.5 344.6 L519.0 332.9 L524.5 322.5 L530.1 312.7 L535.6 307.2 L541.1 303.8 L546.6 301.2 L552.1 299.5 L557.7 296.4 L563.2 293.5 L568.7 290.6 L574.2 286.2 L579.7 281.7 L585.3 276.2 L590.8 270.6 L596.3 266.4 L601.8 262.2 L607.3 259.1 L612.9 258.0 L618.4 257.5" stroke="#ff4500" stroke-width="2" fill="none" stroke-linejoin="round"/><path d="M132.6 257.5 L138.1 220.3 L143.7 218.5 L149.2 216.9 L154.7 214.7 L160.2 212.3 L165.7 209.8 L171.3 207.1 L176.8 204.9 L182.3 203.4 L187.8 202.6 L193.3 202.8 L198.9 204.5 L204.4 207.8 L209.9 212.6 L215.4 218.4 L220.9 225.0 L226.5 233.1 L232.0 242.8 L237.5 254.7 L243.0 270.7 L248.5 288.3 L254.1 303.2 L259.6 316.5 L265.1 330.6 L270.6 343.6 L276.1 352.6 L281.7 356.1 L287.2 352.5 L292.7 344.0 L298.2 331.1 L303.7 315.2 L309.3 297.6 L314.8 277.5 L320.3 257.3 L325.8 240.3 L331.3 225.1 L336.9 208.4 L342.4 188.7 L347.9 166.8 L353.4 143.3 L358.9 121.3 L364.5 106.0 L370.0 96.8 L375.5 92.6 L381.0 93.7 L386.5 97.7 L392.1 102.9 L397.6 109.8 L403.1 121.5 L408.6 141.4 L414.1 167.3 L419.7 196.6 L425.2 227.9 L430.7 259.7 L436.2 291.7 L441.7 327.0 L447.3 363.0 L452.8 393.8 L458.3 417.8 L463.8 433.4 L469.3 438.4 L474.9 433.6 L480.4 423.9 L485.9 412.4 L491.4 400.1 L496.9 387.9 L502.5 375.8 L508.0 363.3 L513.5 350.5 L519.0 337.1 L524.5 325.4 L530.1 317.0 L535.6 309.6 L541.1 305.5 L546.6 304.6 L552.1 301.2 L557.7 296.5 L563.2 295.2 L568.7 292.2 L574.2 286.5 L579.7 281.9 L585.3 275.9 L590.8 272.4 L596.3 265.5 L601.8 261.5 L607.3 258.7 L612.9 257.3 L618.4 257.5" stroke="#8b0000" stroke-width="2" fill="none" stroke-linejoin="round"/><path d="M132.6 257.5 L138.1 231.1 L143.7 229.3 L149.2 228.3 L154.7 226.6 L160.2 224.9 L165.7 223.1 L171.3 221.1 L176.8 219.4 L182.3 218.2 L187.8 217.4 L193.3 217.4 L198.9 218.3 L204.4 220.4 L209.9 223.7 L215.4 227.8 L220.9 232.5 L226.5 238.1 L232.0 244.9 L237.5 253.2 L243.0 264.1 L248.5 277.1 L254.1 288.5 L259.6 298.3 L265.1 308.4 L270.6 318.3 L276.1 325.6 L281.7 329.2 L287.2 327.7 L292.7 322.2 L298.2 313.5 L303.7 302.3 L309.3 289.7 L314.8 275.6 L320.3 260.7 L325.8 247.8 L331.3 236.7 L336.9 225.2 L342.4 211.5 L347.9 196.2 L353.4 179.6 L358.9 163.3 L364.5 151.2 L370.0 143.8 L375.5 139.9 L381.0 139.9 L386.5 142.4 L392.1 146.0 L397.6 150.5 L403.1 157.5 L408.6 170.1 L414.1 187.7 L419.7 208.2 L425.2 230.4 L430.7 253.3 L436.2 275.9 L441.7 300.3 L447.3 326.3 L452.8 349.2 L458.3 367.4 L463.8 380.0 L469.3 385.4 L474.9 383.3 L480.4 377.1 L485.9 369.1 L491.4 360.5 L496.9 351.9 L502.5 343.3 L508.0 334.6 L513.5 325.5 L519.0 317.6 L524.5 309.7 L530.1 303.9 L535.6 299.4 L541.1 297.4 L546.6 296.1 L552.1 292.8 L557.7 291.5 L563.2 288.0 L568.7 284.8 L574.2 282.1 L579.7 278.7 L585.3 273.2 L590.8 269.6 L596.3 266.4 L601.8 262.1 L607.3 258.0 L612.9 257.3 L618.4 257.5" stroke="#8b4513" stroke-width="2" fill="none" stroke-linejoin="round"/><path d="M132.6 257.5 L138.1 226.6 L143.7 225.2 L149.2 223.7 L154.7 221.8 L160.2 219.9 L165.7 217.8 L171.3 215.5 L176.8 213.7 L182.3 212.6 L187.8 211.9 L193.3 212.2 L198.9 213.7 L204.4 216.6 L209.9 220.7 L215.4 225.6 L220.9 231.2 L226.5 238.0 L232.0 246.1 L237.5 256.2 L243.0 269.6 L248.5 283.9 L254.1 295.9 L259.6 306.7 L265.1 318.2 L270.6 328.4 L276.1 335.3 L281.7 337.5 L287.2 334.0 L292.7 326.6 L298.2 315.8 L303.7 302.8 L309.3 288.4 L314.8 272.1 L320.3 256.1 L325.8 242.8 L331.3 230.8 L336.9 217.6 L342.4 202.1 L347.9 185.3 L353.4 167.4 L358.9 150.9 L364.5 139.3 L370.0 132.3 L375.5 128.7 L381.0 128.9 L386.5 131.7 L392.1 135.6 L397.6 140.6 L403.1 148.5 L408.6 163.2 L414.1 183.9 L419.7 207.8 L425.2 233.4 L430.7 259.3 L436.2 284.9 L441.7 312.9 L447.3 341.1 L452.8 364.7 L458.3 383.0 L463.8 394.6 L469.3 397.9 L474.9 393.7 L480.4 386.2 L485.9 377.3 L491.4 367.8 L496.9 358.5 L502.5 349.2 L508.0 339.5 L513.5 329.6 L519.0 320.4 L524.5 312.2 L530.1 306.3 L535.6 301.1 L541.1 298.9 L546.6 296.9 L552.1 294.9 L557.7 292.5 L563.2 289.9 L568.7 286.6 L574.2 283.7 L579.7 278.3 L585.3 273.2 L590.8 269.1 L596.3 265.6 L601.8 261.0 L607.3 258.7 L612.9 257.8 L618.4 257.5" stroke="#dda0dd" stroke-width="2" fill="none" stroke-linejoin="round"/><path d="M132.6 257.5 L138.1 229.1 L143.7 227.3 L149.2 226.2 L154.7 224.5 L160.2 222.7 L165.7 220.8 L171.3 218.7 L176.8 216.9 L182.3 215.7 L187.8 214.9 L193.3 214.9 L198.9 215.9 L204.4 218.2 L209.9 221.7 L215.4 226.0 L220.9 231.0 L226.5 236.9 L232.0 244.1 L237.5 252.8 L243.0 264.3 L248.5 277.9 L254.1 290.0 L259.6 300.3 L265.1 311.0 L270.6 321.5 L276.1 329.3 L281.7 333.1 L287.2 331.7 L292.7 325.9 L298.2 316.9 L303.7 305.1 L309.3 291.9 L314.8 276.9 L320.3 261.1 L325.8 247.4 L331.3 235.7 L336.9 223.4 L342.4 209.1 L347.9 193.0 L353.4 175.7 L358.9 158.5 L364.5 145.1 L370.0 136.6 L375.5 131.7 L381.0 130.5 L386.5 132.3 L392.1 135.6 L397.6 140.0 L403.1 146.3 L408.6 158.3 L414.1 177.2 L419.7 200.0 L425.2 225.0 L430.7 250.8 L436.2 276.3 L441.7 303.3 L447.3 332.1 L452.8 357.6 L458.3 377.9 L463.8 392.0 L469.3 398.2 L474.9 396.1 L480.4 389.4 L485.9 380.7 L491.4 371.3 L496.9 361.8 L502.5 352.4 L508.0 342.8 L513.5 332.8 L519.0 323.5 L524.5 313.4 L530.1 308.0 L535.6 304.0 L541.1 299.5 L546.6 297.9 L552.1 294.9 L557.7 293.6 L563.2 289.6 L568.7 288.2 L574.2 283.2 L579.7 280.7 L585.3 274.1 L590.8 270.7 L596.3 267.1 L601.8 262.3 L607.3 258.7 L612.9 257.7 L618.4 257.5" stroke="#ff8c00" stroke-width="2" fill="none" stroke-linejoin="round"/><path d="M132.6 257.5 L138.1 224.5 L143.7 222.7 L149.2 221.3 L154.7 219.3 L160.2 217.2 L165.7 215.0 L171.3 212.6 L176.8 210.5 L182.3 209.2 L187.8 208.4 L193.3 208.5 L198.9 209.9 L204.4 212.7 L209.9 216.9 L215.4 222.0 L220.9 227.9 L226.5 234.9 L232.0 243.4 L237.5 253.9 L243.0 267.8 L248.5 283.5 L254.1 297.1 L259.6 308.9 L265.1 321.4 L270.6 333.2 L276.1 341.6 L281.7 345.2 L287.2 342.5 L292.7 335.2 L298.2 324.1 L303.7 310.2 L309.3 294.6 L314.8 277.0 L320.3 259.0 L325.8 243.7 L331.3 230.3 L336.9 216.0 L342.4 199.4 L347.9 181.1 L353.4 161.9 L358.9 143.2 L364.5 128.8 L370.0 119.5 L375.5 113.8 L381.0 111.7 L386.5 113.2 L392.1 116.7 L397.6 121.5 L403.1 128.2 L408.6 141.1 L414.1 163.3 L419.7 190.9 L425.2 221.1 L430.7 251.9 L436.2 281.9 L441.7 313.8 L447.3 346.8 L452.8 375.1 L458.3 397.2 L463.8 411.9 L469.3 417.4 L474.9 413.8 L480.4 405.6 L485.9 395.5 L491.4 384.7 L496.9 373.9 L502.5 363.3 L508.0 352.3 L513.5 341.0 L519.0 329.8 L524.5 319.0 L530.1 311.8 L535.6 306.2 L541.1 302.5 L546.6 300.8 L552.1 297.6 L557.7 294.9 L563.2 292.4 L568.7 289.3 L574.2 285.0 L579.7 281.2 L585.3 276.4 L590.8 270.6 L596.3 265.9 L601.8 262.7 L607.3 258.4 L612.9 256.8 L618.4 257.5" stroke="#ffdab9" stroke-width="2" fill="none" stroke-linejoin="round"/><path d="M132.6 257.5 L138.1 230.6 L143.7 228.9 L149.2 227.8 L154.7 226.1 L160.2 224.4 L165.7 222.6 L171.3 220.5 L176.8 218.7 L182.3 217.5 L187.8 216.8 L193.3 216.7 L198.9 217.6 L204.4 219.7 L209.9 223.1 L215.4 227.2 L220.9 232.0 L226.5 237.7 L232.0 244.7 L237.5 253.2 L243.0 264.5 L248.5 277.8 L254.1 289.6 L259.6 299.8 L265.1 310.4 L270.6 320.7 L276.1 328.4 L281.7 332.2 L287.2 330.7 L292.7 325.0 L298.2 316.0 L303.7 304.4 L309.3 291.2 L314.8 276.4 L320.3 260.6 L325.8 247.0 L331.3 235.2 L336.9 222.8 L342.4 208.0 L347.9 191.2 L353.4 172.8 L358.9 154.9 L364.5 142.0 L370.0 134.4 L375.5 131.0 L381.0 131.9 L386.5 135.1 L392.1 139.3 L397.6 144.7 L403.1 153.7 L408.6 168.6 L414.1 187.4 L419.7 208.7 L425.2 231.5 L430.7 255.1 L436.2 278.9 L441.7 304.8 L447.3 332.3 L452.8 356.7 L458.3 376.0 L463.8 389.3 L469.3 394.9 L474.9 392.4 L480.4 385.5 L485.9 376.8 L491.4 367.5 L496.9 358.1 L502.5 348.8 L508.0 339.4 L513.5 329.6 L519.0 320.8 L524.5 312.6 L530.1 305.9 L535.6 300.6 L541.1 299.2 L546.6 296.6 L552.1 293.9 L557.7 291.2 L563.2 288.7 L568.7 285.4 L574.2 283.2 L579.7 278.0 L585.3 273.9 L590.8 270.5 L596.3 265.8 L601.8 260.7 L607.3 258.3 L612.9 257.4 L618.4 257.5" stroke="#adff2f" stroke-width="2" fill="none" stroke-linejoin="round"/><path d="M132.6 257.5 L138.1 225.6 L143.7 223.1 L149.2 221.9 L154.7 220.0 L160.2 217.9 L165.7 215.8 L171.3 213.3 L176.8 211.1 L182.3 209.6 L187.8 208.6 L193.3 208.4 L198.9 209.4 L204.4 211.7 L209.9 215.6 L215.4 220.5 L220.9 226.1 L226.5 232.8 L232.0 240.8 L237.5 250.5 L243.0 263.2 L248.5 278.9 L254.1 293.2 L259.6 305.2 L265.1 317.4 L270.6 329.7 L276.1 339.1 L281.7 344.3 L287.2 343.4 L292.7 337.3 L298.2 327.3 L303.7 314.1 L309.3 299.1 L314.8 282.3 L320.3 264.0 L325.8 247.9 L331.3 234.3 L336.9 220.6 L342.4 204.6 L347.9 186.3 L353.4 166.7 L358.9 146.8 L364.5 131.0 L370.0 120.9 L375.5 115.2 L381.0 113.7 L386.5 115.9 L392.1 119.8 L397.6 124.8 L403.1 131.8 L408.6 144.9 L414.1 165.6 L419.7 190.6 L425.2 218.1 L430.7 246.7 L436.2 275.0 L441.7 304.7 L447.3 336.8 L452.8 366.0 L458.3 389.4 L463.8 406.1 L469.3 414.4 L474.9 413.1 L480.4 406.0 L485.9 396.5 L491.4 386.0 L496.9 375.4 L502.5 364.9 L508.0 354.2 L513.5 343.1 L519.0 332.0 L524.5 321.6 L530.1 313.0 L535.6 306.3 L541.1 303.8 L546.6 301.3 L552.1 297.8 L557.7 296.2 L563.2 293.0 L568.7 289.1 L574.2 286.4 L579.7 281.9 L585.3 276.8 L590.8 272.6 L596.3 267.3 L601.8 262.8 L607.3 260.4 L612.9 257.5 L618.4 257.5" stroke="#dda0dd" stroke-width="2" fill="none" stroke-linejoin="round"/><path d="M132.6 257.5 L138.1 224.4 L143.7 222.6 L149.2 221.2 L154.7 219.1 L160.2 217.0 L165.7 214.6 L171.3 212.1 L176.8 210.0 L182.3 208.6 L187.8 207.8 L193.3 207.9 L198.9 209.2 L204.4 212.1 L209.9 216.4 L215.4 221.5 L220.9 227.5 L226.5 234.8 L232.0 243.5 L237.5 254.2 L243.0 268.6 L248.5 284.8 L254.1 298.5 L259.6 310.8 L265.1 323.7 L270.6 335.7 L276.1 344.2 L281.7 347.7 L287.2 344.8 L292.7 337.2 L298.2 325.6 L303.7 311.2 L309.3 295.1 L314.8 276.9 L320.3 258.3 L325.8 242.6 L331.3 228.7 L336.9 213.7 L342.4 195.8 L347.9 175.8 L353.4 154.3 L358.9 134.0 L364.5 120.0 L370.0 111.9 L375.5 108.6 L381.0 110.3 L386.5 114.3 L392.1 119.4 L397.6 126.1 L403.1 137.5 L408.6 155.9 L414.1 178.7 L419.7 204.1 L425.2 231.3 L430.7 259.0 L436.2 287.0 L441.7 317.8 L447.3 349.6 L452.8 376.9 L458.3 398.4 L463.8 412.5 L469.3 417.3 L474.9 413.3 L480.4 404.8 L485.9 394.6 L491.4 383.7 L496.9 372.8 L502.5 362.1 L508.0 351.1 L513.5 339.8 L519.0 328.7 L524.5 318.9 L530.1 310.5 L535.6 306.4 L541.1 303.7 L546.6 301.4 L552.1 297.5 L557.7 294.0 L563.2 291.3 L568.7 287.9 L574.2 283.7 L579.7 280.2 L585.3 274.6 L590.8 271.4 L596.3 265.5 L601.8 261.5 L607.3 258.5 L612.9 257.2 L618.4 257.5" stroke="#32cd32" stroke-width="2" fill="none" stroke-linejoin="round"/><path d="M132.6 257.5 L138.1 221.8 L143.7 220.0 L149.2 218.4 L154.7 216.3 L160.2 214.0 L165.7 211.6 L171.3 209.0 L176.8 206.8 L182.3 205.4 L187.8 204.6 L193.3 204.8 L198.9 206.4 L204.4 209.6 L209.9 214.2 L215.4 219.8 L220.9 226.2 L226.5 233.9 L232.0 243.1 L237.5 254.6 L243.0 269.7 L248.5 286.6 L254.1 300.9 L259.6 313.6 L265.1 327.1 L270.6 339.5 L276.1 348.1 L281.7 351.4 L287.2 348.1 L292.7 339.9 L298.2 327.7 L303.7 312.7 L309.3 295.9 L314.8 277.0 L320.3 257.8 L325.8 241.7 L331.3 227.5 L336.9 212.3 L342.4 194.8 L347.9 175.8 L353.4 156.1 L358.9 137.1 L364.5 122.3 L370.0 112.4 L375.5 106.0 L381.0 102.7 L386.5 103.0 L392.1 106.0 L397.6 110.7 L403.1 117.3 L408.6 129.2 L414.1 152.3 L419.7 182.8 L425.2 216.6 L430.7 251.0 L436.2 284.0 L441.7 318.8 L447.3 354.3 L452.8 384.3 L458.3 407.5 L463.8 422.6 L469.3 427.6 L474.9 423.3 L480.4 414.4 L485.9 403.6 L491.4 392.1 L496.9 380.7 L502.5 369.4 L508.0 357.6 L513.5 345.6 L519.0 333.4 L524.5 323.5 L530.1 314.7 L535.6 308.8 L541.1 303.6 L546.6 303.1 L552.1 298.6 L557.7 295.6 L563.2 293.0 L568.7 290.1 L574.2 285.4 L579.7 281.5 L585.3 276.0 L590.8 270.7 L596.3 266.6 L601.8 261.9 L607.3 258.2 L612.9 257.2 L618.4 257.5" stroke="#00ced1" stroke-width="2" fill="none" stroke-linejoin="round"/><path d="M132.6 257.5 L138.1 229.3 L143.7 227.5 L149.2 226.4 L154.7 224.7 L160.2 223.0 L165.7 221.1 L171.3 219.1 L176.8 217.3 L182.3 216.1 L187.8 215.4 L193.3 215.4 L198.9 216.4 L204.4 218.7 L209.9 222.2 L215.4 226.5 L220.9 231.4 L226.5 237.3 L232.0 244.3 L237.5 252.9 L243.0 264.2 L248.5 277.6 L254.1 289.4 L259.6 299.5 L265.1 309.9 L270.6 320.1 L276.1 327.6 L281.7 331.4 L287.2 329.9 L292.7 324.2 L298.2 315.3 L303.7 303.8 L309.3 290.9 L314.8 276.3 L320.3 261.0 L325.8 247.7 L331.3 236.3 L336.9 224.5 L342.4 210.8 L347.9 195.5 L353.4 179.2 L358.9 163.0 L364.5 150.1 L370.0 141.6 L375.5 136.4 L381.0 134.3 L386.5 135.4 L392.1 138.2 L397.6 142.1 L403.1 147.5 L408.6 157.8 L414.1 175.7 L419.7 198.4 L425.2 223.6 L430.7 249.5 L436.2 274.9 L441.7 301.6 L447.3 329.9 L452.8 355.0 L458.3 374.9 L463.8 388.7 L469.3 394.9 L474.9 392.9 L480.4 386.4 L485.9 378.0 L491.4 368.9 L496.9 359.7 L502.5 350.6 L508.0 341.2 L513.5 331.5 L519.0 322.4 L524.5 313.3 L530.1 306.7 L535.6 302.2 L541.1 301.2 L546.6 296.9 L552.1 294.6 L557.7 293.3 L563.2 289.4 L568.7 287.1 L574.2 283.8 L579.7 279.9 L585.3 275.4 L590.8 270.6 L596.3 264.2 L601.8 262.0 L607.3 258.8 L612.9 257.5 L618.4 257.5" stroke="#7cfc00" stroke-width="2" fill="none" stroke-linejoin="round"/><path d="M132.6 257.5 L138.1 229.6 L143.7 227.2 L149.2 226.2 L154.7 224.5 L160.2 222.8 L165.7 220.9 L171.3 218.8 L176.8 216.8 L182.3 215.5 L187.8 214.7 L193.3 214.5 L198.9 215.3 L204.4 217.3 L209.9 220.7 L215.4 224.9 L220.9 229.8 L226.5 235.6 L232.0 242.5 L237.5 250.9 L243.0 261.9 L248.5 275.4 L254.1 288.0 L259.6 298.5 L265.1 309.0 L270.6 319.8 L276.1 328.1 L281.7 332.8 L287.2 332.3 L292.7 327.1 L298.2 318.6 L303.7 307.2 L309.3 294.3 L314.8 279.8 L320.3 263.9 L325.8 249.8 L331.3 237.9 L336.9 226.0 L342.4 212.1 L347.9 196.1 L353.4 178.7 L358.9 161.0 L364.5 146.9 L370.0 138.1 L375.5 133.3 L381.0 132.5 L386.5 134.7 L392.1 138.2 L397.6 142.7 L403.1 149.2 L408.6 161.2 L414.1 179.0 L419.7 200.2 L425.2 223.6 L430.7 248.0 L436.2 272.3 L441.7 297.9 L447.3 326.0 L452.8 351.7 L458.3 372.5 L463.8 387.6 L469.3 395.4 L474.9 394.7 L480.4 388.7 L485.9 380.5 L491.4 371.4 L496.9 362.0 L502.5 352.8 L508.0 343.5 L513.5 333.7 L519.0 324.6 L524.5 316.3 L530.1 308.7 L535.6 303.9 L541.1 299.8 L546.6 298.1 L552.1 296.0 L557.7 292.9 L563.2 289.7 L568.7 288.6 L574.2 283.2 L579.7 281.3 L585.3 276.2 L590.8 271.8 L596.3 266.0 L601.8 262.6 L607.3 259.3 L612.9 256.5 L618.4 257.5" stroke="#d2691e" stroke-width="2" fill="none" stroke-linejoin="round"/><path d="M132.6 257.5 L138.1 224.7 L143.7 223.2 L149.2 221.7 L154.7 219.7 L160.2 217.7 L165.7 215.4 L171.3 213.1 L176.8 211.2 L182.3 210.0 L187.8 209.4 L193.3 209.8 L198.9 211.4 L204.4 214.4 L209.9 218.8 L215.4 223.9 L220.9 229.8 L226.5 236.9 L232.0 245.5 L237.5 256.1 L243.0 270.1 L248.5 285.2 L254.1 297.8 L259.6 309.2 L265.1 321.2 L270.6 332.0 L276.1 339.3 L281.7 341.6 L287.2 338.0 L292.7 330.3 L298.2 319.0 L303.7 305.3 L309.3 290.1 L314.8 273.0 L320.3 256.0 L325.8 242.0 L331.3 229.2 L336.9 215.1 L342.4 198.6 L347.9 180.3 L353.4 160.8 L358.9 142.9 L364.5 130.6 L370.0 123.3 L375.5 120.0 L381.0 121.0 L386.5 124.4 L392.1 128.7 L397.6 134.5 L403.1 144.2 L408.6 161.1 L414.1 183.0 L419.7 207.8 L425.2 234.2 L430.7 261.0 L436.2 288.0 L441.7 317.8 L447.3 347.8 L452.8 373.2 L458.3 393.0 L463.8 405.6 L469.3 409.2 L474.9 404.8 L480.4 396.7 L485.9 387.1 L491.4 376.9 L496.9 366.8 L502.5 356.8 L508.0 346.3 L513.5 335.6 L519.0 325.2 L524.5 315.5 L530.1 308.7 L535.6 305.2 L541.1 301.0 L546.6 298.7 L552.1 296.4 L557.7 293.7 L563.2 291.3 L568.7 287.8 L574.2 283.4 L579.7 279.6 L585.3 275.3 L590.8 269.8 L596.3 265.1 L601.8 262.3 L607.3 258.5 L612.9 256.6 L618.4 257.5" stroke="#90ee90" stroke-width="2" fill="none" stroke-linejoin="round"/><path d="M132.6 257.5 L138.1 229.3 L143.7 228.0 L149.2 226.7 L154.7 225.1 L160.2 223.3 L165.7 221.4 L171.3 219.4 L176.8 217.8 L182.3 216.8 L187.8 216.3 L193.3 216.6 L198.9 217.9 L204.4 220.6 L209.9 224.3 L215.4 228.7 L220.9 233.8 L226.5 239.9 L232.0 247.3 L237.5 256.5 L243.0 268.7 L248.5 281.7 L254.1 292.6 L259.6 302.5 L265.1 313.1 L270.6 322.5 L276.1 328.8 L281.7 330.7 L287.2 327.6 L292.7 320.9 L298.2 311.0 L303.7 299.0 L309.3 285.7 L314.8 270.7 L320.3 255.9 L325.8 243.6 L331.3 232.3 L336.9 219.8 L342.4 205.1 L347.9 188.9 L353.4 171.5 L358.9 155.7 L364.5 144.8 L370.0 138.3 L375.5 135.5 L381.0 136.4 L386.5 139.3 L392.1 143.1 L397.6 148.2 L403.1 157.0 L408.6 172.2 L414.1 191.7 L419.7 213.8 L425.2 237.4 L430.7 261.2 L436.2 285.3 L441.7 311.8 L447.3 338.4 L452.8 360.9 L458.3 378.2 L463.8 389.2 L469.3 392.1 L474.9 388.0 L480.4 380.7 L485.9 372.1 L491.4 363.0 L496.9 353.9 L502.5 344.9 L508.0 335.6 L513.5 326.1 L519.0 317.5 L524.5 310.4 L530.1 305.8 L535.6 300.2 L541.1 298.9 L546.6 295.9 L552.1 293.5 L557.7 291.3 L563.2 288.0 L568.7 285.6 L574.2 282.0 L579.7 277.9 L585.3 272.4 L590.8 268.3 L596.3 265.6 L601.8 261.1 L607.3 258.3 L612.9 256.8 L618.4 257.5" stroke="#ff0000" stroke-width="2" fill="none" stroke-linejoin="round"/><path d="M132.6 257.5 L138.1 228.7 L143.7 226.8 L149.2 225.7 L154.7 223.9 L160.2 222.1 L165.7 220.2 L171.3 218.0 L176.8 216.1 L182.3 214.8 L187.8 214.0 L193.3 213.9 L198.9 214.9 L204.4 217.2 L209.9 220.7 L215.4 225.1 L220.9 230.2 L226.5 236.2 L232.0 243.5 L237.5 252.2 L243.0 263.9 L248.5 277.8 L254.1 290.2 L259.6 300.8 L265.1 311.6 L270.6 322.4 L276.1 330.4 L281.7 334.5 L287.2 333.2 L292.7 327.4 L298.2 318.3 L303.7 306.4 L309.3 293.0 L314.8 277.9 L320.3 261.8 L325.8 247.8 L331.3 235.8 L336.9 223.5 L342.4 209.1 L347.9 192.8 L353.4 175.4 L358.9 157.9 L364.5 144.3 L370.0 135.7 L375.5 130.8 L381.0 129.7 L386.5 131.8 L392.1 135.2 L397.6 139.7 L403.1 146.1 L408.6 158.3 L414.1 177.1 L419.7 199.8 L425.2 224.5 L430.7 250.2 L436.2 275.5 L441.7 302.3 L447.3 331.1 L452.8 356.7 L458.3 377.2 L463.8 391.5 L469.3 398.1 L474.9 396.3 L480.4 389.7 L485.9 381.1 L491.4 371.7 L496.9 362.2 L502.5 352.8 L508.0 343.2 L513.5 333.3 L519.0 324.0 L524.5 316.5 L530.1 307.5 L535.6 302.6 L541.1 299.5 L546.6 297.8 L552.1 295.7 L557.7 294.2 L563.2 290.0 L568.7 286.2 L574.2 284.4 L579.7 280.2 L585.3 274.8 L590.8 270.5 L596.3 267.2 L601.8 262.8 L607.3 259.7 L612.9 255.9 L618.4 257.5" stroke="#8b4513" stroke-width="2" fill="none" stroke-linejoin="round"/><path d="M132.6 257.5 L138.1 227.2 L143.7 224.8 L149.2 223.7 L154.7 221.8 L160.2 219.8 L165.7 217.8 L171.3 215.4 L176.8 213.3 L182.3 211.8 L187.8 210.9 L193.3 210.6 L198.9 211.5 L204.4 213.7 L209.9 217.4 L215.4 222.0 L220.9 227.3 L226.5 233.7 L232.0 241.3 L237.5 250.6 L243.0 262.7 L248.5 277.6 L254.1 291.4 L259.6 302.9 L265.1 314.5 L270.6 326.3 L276.1 335.4 L281.7 340.4 L287.2 339.7 L292.7 333.9 L298.2 324.5 L303.7 311.8 L309.3 297.6 L314.8 281.5 L320.3 264.1 L325.8 248.6 L331.3 235.5 L336.9 222.2 L342.4 206.6 L347.9 188.4 L353.4 168.5 L358.9 148.5 L364.5 133.6 L370.0 124.8 L375.5 120.9 L381.0 122.1 L386.5 125.7 L392.1 130.3 L397.6 136.2 L403.1 145.8 L408.6 161.2 L414.1 180.5 L419.7 202.4 L425.2 226.1 L430.7 250.9 L436.2 276.0 L441.7 303.1 L447.3 332.7 L452.8 359.8 L458.3 381.8 L463.8 397.7 L469.3 405.6 L474.9 404.6 L480.4 397.9 L485.9 388.9 L491.4 379.0 L496.9 369.0 L502.5 359.1 L508.0 349.0 L513.5 338.6 L519.0 328.4 L524.5 318.5 L530.1 311.0 L535.6 304.8 L541.1 302.4 L546.6 300.0 L552.1 297.3 L557.7 294.6 L563.2 290.5 L568.7 287.8 L574.2 285.5 L579.7 281.4 L585.3 276.6 L590.8 271.5 L596.3 267.7 L601.8 262.6 L607.3 259.7 L612.9 258.3 L618.4 257.5" stroke="#8b4513" stroke-width="2" fill="none" stroke-linejoin="round"/><path d="M132.6 257.5 L138.1 226.8 L143.7 225.3 L149.2 223.9 L154.7 222.0 L160.2 220.1 L165.7 217.9 L171.3 215.7 L176.8 213.8 L182.3 212.6 L187.8 212.0 L193.3 212.2 L198.9 213.6 L204.4 216.4 L209.9 220.5 L215.4 225.2 L220.9 230.8 L226.5 237.5 L232.0 245.5 L237.5 255.5 L243.0 268.7 L248.5 283.1 L254.1 295.2 L259.6 306.1 L265.1 317.6 L270.6 328.0 L276.1 335.1 L281.7 337.6 L287.2 334.5 L292.7 327.3 L298.2 316.7 L303.7 303.7 L309.3 289.3 L314.8 273.2 L320.3 256.9 L325.8 243.4 L331.3 231.3 L336.9 217.8 L342.4 201.9 L347.9 184.0 L353.4 164.7 L358.9 147.3 L364.5 135.9 L370.0 129.7 L375.5 128.3 L381.0 131.0 L386.5 135.2 L392.1 140.3 L397.6 147.6 L403.1 160.1 L408.6 177.1 L414.1 196.5 L419.7 217.6 L425.2 240.0 L430.7 262.9 L436.2 286.6 L441.7 313.2 L447.3 340.3 L452.8 363.7 L458.3 382.0 L463.8 393.9 L469.3 397.6 L474.9 393.8 L480.4 386.4 L485.9 377.5 L491.4 368.1 L496.9 358.8 L502.5 349.5 L508.0 339.8 L513.5 330.0 L519.0 320.8 L524.5 313.1 L530.1 305.9 L535.6 302.0 L541.1 298.0 L546.6 297.2 L552.1 295.1 L557.7 292.8 L563.2 290.2 L568.7 287.6 L574.2 283.6 L579.7 278.0 L585.3 273.8 L590.8 269.5 L596.3 264.9 L601.8 260.6 L607.3 257.9 L612.9 256.5 L618.4 257.5" stroke="#2f4f4f" stroke-width="2" fill="none" stroke-linejoin="round"/><path d="M132.6 257.5 L138.1 219.7 L143.7 217.9 L149.2 216.2 L154.7 214.0 L160.2 211.6 L165.7 209.0 L171.3 206.3 L176.8 204.1 L182.3 202.7 L187.8 202.0 L193.3 202.3 L198.9 204.1 L204.4 207.5 L209.9 212.5 L215.4 218.4 L220.9 225.2 L226.5 233.4 L232.0 243.2 L237.5 255.4 L243.0 271.6 L248.5 289.2 L254.1 304.0 L259.6 317.3 L265.1 331.4 L270.6 344.1 L276.1 352.8 L281.7 355.7 L287.2 351.8 L292.7 342.9 L298.2 329.8 L303.7 313.9 L309.3 296.2 L314.8 276.3 L320.3 256.3 L325.8 239.8 L331.3 224.8 L336.9 208.4 L342.4 189.2 L347.9 168.0 L353.4 145.6 L358.9 124.7 L364.5 109.8 L370.0 100.7 L375.5 96.1 L381.0 96.2 L386.5 99.5 L392.1 104.3 L397.6 110.5 L403.1 120.3 L408.6 138.8 L414.1 164.7 L419.7 194.5 L425.2 226.6 L430.7 259.1 L436.2 291.4 L441.7 326.7 L447.3 362.4 L452.8 392.6 L458.3 416.0 L463.8 430.9 L469.3 435.4 L474.9 430.4 L480.4 420.9 L485.9 409.6 L491.4 397.6 L496.9 385.7 L502.5 373.8 L508.0 361.5 L513.5 349.0 L519.0 335.9 L524.5 324.5 L530.1 315.0 L535.6 310.3 L541.1 305.1 L546.6 302.3 L552.1 300.2 L557.7 296.6 L563.2 293.3 L568.7 291.6 L574.2 287.1 L579.7 282.2 L585.3 275.7 L590.8 271.4 L596.3 267.1 L601.8 261.7 L607.3 259.0 L612.9 255.7 L618.4 257.5" stroke="#cd5c5c" stroke-width="2" fill="none" stroke-linejoin="round"/><path d="M132.6 257.5 L138.1 225.7 L143.7 223.3 L149.2 222.2 L154.7 220.3 L160.2 218.3 L165.7 216.3 L171.3 213.9 L176.8 211.8 L182.3 210.4 L187.8 209.5 L193.3 209.4 L198.9 210.4 L204.4 212.8 L209.9 216.7 L215.4 221.5 L220.9 227.0 L226.5 233.5 L232.0 241.3 L237.5 250.8 L243.0 263.2 L248.5 278.4 L254.1 292.2 L259.6 303.8 L265.1 315.6 L270.6 327.5 L276.1 336.6 L281.7 341.5 L287.2 340.7 L292.7 334.7 L298.2 325.1 L303.7 312.3 L309.3 297.7 L314.8 281.4 L320.3 263.7 L325.8 248.0 L331.3 234.8 L336.9 221.3 L342.4 205.5 L347.9 187.5 L353.4 168.0 L358.9 148.2 L364.5 132.5 L370.0 122.5 L375.5 116.9 L381.0 115.6 L386.5 117.8 L392.1 121.5 L397.6 126.4 L403.1 133.5 L408.6 146.9 L414.1 167.4 L419.7 192.1 L425.2 219.2 L430.7 247.6 L436.2 275.7 L441.7 305.5 L447.3 337.9 L452.8 367.3 L458.3 391.1 L463.8 408.2 L469.3 416.6 L474.9 415.5 L480.4 408.4 L485.9 398.9 L491.4 388.3 L496.9 377.6 L502.5 367.0 L508.0 356.1 L513.5 344.9 L519.0 333.4 L524.5 322.8 L530.1 315.3 L535.6 308.5 L541.1 304.8 L546.6 301.4 L552.1 300.0 L557.7 295.6 L563.2 293.5 L568.7 290.1 L574.2 286.8 L579.7 283.4 L585.3 277.2 L590.8 273.0 L596.3 267.5 L601.8 263.6 L607.3 259.6 L612.9 257.3 L618.4 257.5" stroke="#b22222" stroke-width="2" fill="none" stroke-linejoin="round"/><path d="M132.6 257.5 L138.1 229.6 L143.7 228.2 L149.2 226.9 L154.7 225.1 L160.2 223.3 L165.7 221.3 L171.3 219.2 L176.8 217.5 L182.3 216.3 L187.8 215.7 L193.3 215.8 L198.9 217.0 L204.4 219.5 L209.9 223.2 L215.4 227.6 L220.9 232.7 L226.5 238.8 L232.0 246.2 L237.5 255.4 L243.0 267.6 L248.5 281.0 L254.1 292.4 L259.6 302.6 L265.1 313.3 L270.6 323.1 L276.1 329.9 L281.7 332.4 L287.2 329.6 L292.7 323.0 L298.2 313.2 L303.7 301.1 L309.3 287.7 L314.8 272.6 L320.3 257.3 L325.8 244.6 L331.3 233.3 L336.9 221.0 L342.4 206.7 L347.9 190.8 L353.4 174.0 L358.9 158.3 L364.5 147.1 L370.0 140.3 L375.5 136.9 L381.0 137.2 L386.5 139.9 L392.1 143.6 L397.6 148.4 L403.1 155.9 L408.6 169.4 L414.1 188.5 L419.7 210.4 L425.2 233.9 L430.7 257.6 L436.2 281.1 L441.7 306.7 L447.3 332.7 L452.8 354.7 L458.3 371.9 L463.8 382.9 L469.3 386.4 L474.9 382.9 L480.4 376.0 L485.9 367.7 L491.4 359.0 L496.9 350.3 L502.5 341.7 L508.0 332.8 L513.5 323.8 L519.0 315.9 L524.5 308.7 L530.1 303.0 L535.6 299.7 L541.1 297.9 L546.6 295.0 L552.1 292.3 L557.7 290.8 L563.2 287.7 L568.7 284.0 L574.2 281.1 L579.7 276.6 L585.3 273.2 L590.8 268.4 L596.3 265.3 L601.8 261.0 L607.3 258.7 L612.9 257.0 L618.4 257.5" stroke="#000000" stroke-width="2" fill="none" stroke-linejoin="round"/><path d="M132.6 257.5 L138.1 227.3 L143.7 225.9 L149.2 224.5 L154.7 222.6 L160.2 220.7 L165.7 218.6 L171.3 216.5 L176.8 214.7 L182.3 213.6 L187.8 213.1 L193.3 213.4 L198.9 214.9 L204.4 217.8 L209.9 221.9 L215.4 226.6 L220.9 232.1 L226.5 238.8 L232.0 246.7 L237.5 256.6 L243.0 269.7 L248.5 283.5 L254.1 295.0 L259.6 305.5 L265.1 316.6 L270.6 326.4 L276.1 332.8 L281.7 334.7 L287.2 331.1 L292.7 323.9 L298.2 313.3 L303.7 300.7 L309.3 286.7 L314.8 271.0 L320.3 255.7 L325.8 243.0 L331.3 231.5 L336.9 219.0 L342.4 204.4 L347.9 188.7 L353.4 172.4 L358.9 157.3 L364.5 146.2 L370.0 139.2 L375.5 135.1 L381.0 134.0 L386.5 135.7 L392.1 138.8 L397.6 143.1 L403.1 149.3 L408.6 161.3 L414.1 181.1 L419.7 205.2 L425.2 231.3 L430.7 257.4 L436.2 283.0 L441.7 310.5 L447.3 338.0 L452.8 360.9 L458.3 378.4 L463.8 389.4 L469.3 392.3 L474.9 388.2 L480.4 381.0 L485.9 372.5 L491.4 363.4 L496.9 354.5 L502.5 345.6 L508.0 336.2 L513.5 326.8 L519.0 318.2 L524.5 311.2 L530.1 304.2 L535.6 300.4 L541.1 298.5 L546.6 296.3 L552.1 294.0 L557.7 291.1 L563.2 289.1 L568.7 285.8 L574.2 281.4 L579.7 278.5 L585.3 273.7 L590.8 268.5 L596.3 264.8 L601.8 261.0 L607.3 256.7 L612.9 256.7 L618.4 257.5" stroke="#a52a2a" stroke-width="2" fill="none" stroke-linejoin="round"/><path d="M132.6 257.5 L138.1 226.0 L143.7 224.3 L149.2 222.9 L154.7 221.0 L160.2 219.0 L165.7 216.8 L171.3 214.5 L176.8 212.6 L182.3 211.3 L187.8 210.6 L193.3 210.8 L198.9 212.2 L204.4 214.9 L209.9 219.1 L215.4 224.0 L220.9 229.7 L226.5 236.5 L232.0 244.7 L237.5 254.9 L243.0 268.4 L248.5 283.4 L254.1 296.1 L259.6 307.3 L265.1 319.3 L270.6 330.2 L276.1 337.9 L281.7 340.8 L287.2 337.8 L292.7 330.5 L298.2 319.7 L303.7 306.3 L309.3 291.4 L314.8 274.7 L320.3 257.7 L325.8 243.6 L331.3 231.1 L336.9 217.7 L342.4 202.2 L347.9 185.5 L353.4 168.2 L358.9 151.6 L364.5 138.6 L370.0 130.1 L375.5 124.7 L381.0 122.0 L386.5 122.5 L392.1 125.3 L397.6 129.6 L403.1 135.5 L408.6 146.1 L414.1 166.4 L419.7 193.0 L425.2 222.3 L430.7 252.1 L436.2 280.7 L441.7 310.9 L447.3 341.6 L452.8 367.6 L458.3 387.6 L463.8 400.7 L469.3 405.0 L474.9 401.3 L480.4 393.5 L485.9 384.2 L491.4 374.2 L496.9 364.3 L502.5 354.5 L508.0 344.3 L513.5 333.9 L519.0 324.1 L524.5 314.4 L530.1 308.3 L535.6 303.5 L541.1 300.2 L546.6 297.1 L552.1 296.5 L557.7 292.9 L563.2 289.5 L568.7 288.0 L574.2 283.3 L579.7 278.7 L585.3 273.4 L590.8 269.5 L596.3 265.5 L601.8 261.8 L607.3 258.7 L612.9 256.8 L618.4 257.5" stroke="#a0522d" stroke-width="2" fill="none" stroke-linejoin="round"/><path d="M132.6 257.5 L138.1 228.0 L143.7 226.4 L149.2 225.2 L154.7 223.5 L160.2 221.7 L165.7 219.7 L171.3 217.6 L176.8 215.9 L182.3 214.7 L187.8 214.1 L193.3 214.3 L198.9 215.6 L204.4 218.1 L209.9 221.9 L215.4 226.4 L220.9 231.6 L226.5 237.9 L232.0 245.3 L237.5 254.4 L243.0 266.4 L248.5 280.0 L254.1 291.6 L259.6 301.7 L265.1 312.3 L270.6 322.3 L276.1 329.3 L281.7 332.1 L287.2 329.7 L292.7 323.4 L298.2 313.8 L303.7 302.0 L309.3 288.8 L314.8 273.9 L320.3 258.6 L325.8 245.8 L331.3 234.5 L336.9 222.3 L342.4 208.0 L347.9 191.9 L353.4 174.5 L358.9 158.0 L364.5 146.3 L370.0 139.3 L375.5 136.2 L381.0 137.0 L386.5 139.9 L392.1 143.8 L397.6 148.8 L403.1 157.2 L408.6 171.6 L414.1 190.2 L419.7 211.3 L425.2 234.0 L430.7 257.4 L436.2 280.9 L441.7 306.7 L447.3 333.7 L452.8 357.2 L458.3 375.9 L463.8 388.5 L469.3 393.3 L474.9 390.5 L480.4 383.8 L485.9 375.5 L491.4 366.5 L496.9 357.5 L502.5 348.6 L508.0 339.3 L513.5 329.7 L519.0 320.9 L524.5 312.8 L530.1 305.3 L535.6 302.8 L541.1 299.5 L546.6 297.4 L552.1 295.3 L557.7 293.7 L563.2 290.0 L568.7 286.8 L574.2 283.2 L579.7 278.4 L585.3 274.4 L590.8 270.2 L596.3 265.4 L601.8 261.2 L607.3 259.1 L612.9 257.9 L618.4 257.5" stroke="#8b0000" stroke-width="2" fill="none" stroke-linejoin="round"/><path d="M132.6 257.5 L138.1 219.6 L143.7 217.8 L149.2 216.1 L154.7 213.8 L160.2 211.4 L165.7 208.9 L171.3 206.1 L176.8 204.0 L182.3 202.6 L187.8 201.8 L193.3 202.2 L198.9 204.0 L204.4 207.5 L209.9 212.5 L215.4 218.4 L220.9 225.3 L226.5 233.5 L232.0 243.4 L237.5 255.7 L243.0 272.0 L248.5 289.6 L254.1 304.2 L259.6 317.5 L265.1 331.6 L270.6 344.3 L276.1 352.8 L281.7 355.6 L287.2 351.5 L292.7 342.6 L298.2 329.4 L303.7 313.5 L309.3 295.8 L314.8 275.8 L320.3 256.0 L325.8 239.6 L331.3 224.8 L336.9 208.7 L342.4 190.1 L347.9 170.0 L353.4 149.2 L358.9 129.5 L364.5 114.6 L370.0 104.9 L375.5 98.9 L381.0 96.3 L386.5 97.5 L392.1 101.2 L397.6 106.4 L403.1 113.7 L408.6 127.6 L414.1 152.9 L419.7 184.7 L425.2 219.6 L430.7 254.7 L436.2 288.7 L441.7 325.1 L447.3 361.6 L452.8 392.1 L458.3 415.6 L463.8 430.4 L469.3 434.7 L474.9 429.6 L480.4 420.1 L485.9 408.9 L491.4 396.9 L496.9 385.1 L502.5 373.3 L508.0 361.0 L513.5 348.5 L519.0 335.5 L524.5 324.5 L530.1 315.8 L535.6 310.2 L541.1 304.4 L546.6 303.3 L552.1 300.8 L557.7 297.7 L563.2 294.6 L568.7 290.3 L574.2 286.7 L579.7 282.2 L585.3 276.2 L590.8 270.1 L596.3 265.8 L601.8 261.7 L607.3 257.8 L612.9 256.8 L618.4 257.5" stroke="#ff6347" stroke-width="2" fill="none" stroke-linejoin="round"/><path d="M132.6 257.5 L138.1 222.4 L143.7 219.3 L149.2 218.0 L154.7 215.9 L160.2 213.7 L165.7 211.3 L171.3 208.7 L176.8 206.2 L182.3 204.5 L187.8 203.5 L193.3 203.2 L198.9 204.2 L204.4 206.8 L209.9 211.0 L215.4 216.3 L220.9 222.5 L226.5 229.7 L232.0 238.5 L237.5 249.0 L243.0 262.7 L248.5 279.7 L254.1 295.6 L259.6 308.8 L265.1 322.0 L270.6 335.5 L276.1 346.0 L281.7 351.9 L287.2 351.4 L292.7 345.0 L298.2 334.4 L303.7 320.1 L309.3 303.9 L314.8 285.7 L320.3 265.9 L325.8 248.1 L331.3 233.2 L336.9 218.2 L342.4 200.6 L347.9 180.3 L353.4 158.1 L358.9 135.4 L364.5 117.8 L370.0 107.1 L375.5 101.6 L381.0 101.6 L386.5 105.0 L392.1 109.7 L397.6 115.7 L403.1 124.9 L408.6 141.0 L414.1 163.3 L419.7 189.0 L425.2 217.2 L430.7 246.8 L436.2 276.5 L441.7 308.2 L447.3 342.9 L452.8 375.0 L458.3 401.2 L463.8 420.3 L469.3 430.2 L474.9 429.6 L480.4 422.2 L485.9 412.0 L491.4 400.6 L496.9 388.9 L502.5 377.4 L508.0 365.7 L513.5 353.5 L519.0 340.5 L524.5 328.7 L530.1 318.7 L535.6 310.8 L541.1 306.4 L546.6 302.8 L552.1 301.2 L557.7 298.6 L563.2 296.7 L568.7 292.3 L574.2 289.8 L579.7 283.1 L585.3 279.1 L590.8 273.5 L596.3 269.3 L601.8 264.1 L607.3 260.4 L612.9 256.6 L618.4 257.5" stroke="#800080" stroke-width="2" fill="none" stroke-linejoin="round"/><path d="M132.6 257.5 L138.1 223.5 L143.7 221.5 L149.2 220.2 L154.7 218.2 L160.2 216.1 L165.7 213.8 L171.3 211.4 L176.8 209.2 L182.3 207.8 L187.8 207.0 L193.3 207.0 L198.9 208.3 L204.4 211.1 L209.9 215.3 L215.4 220.5 L220.9 226.5 L226.5 233.6 L232.0 242.2 L237.5 252.7 L243.0 266.6 L248.5 282.8 L254.1 297.0 L259.6 309.2 L265.1 322.0 L270.6 334.4 L276.1 343.4 L281.7 347.6 L287.2 345.5 L292.7 338.4 L298.2 327.3 L303.7 313.2 L309.3 297.3 L314.8 279.4 L320.3 260.6 L325.8 244.4 L331.3 230.5 L336.9 215.7 L342.4 198.3 L347.9 178.8 L353.4 157.9 L358.9 137.4 L364.5 121.8 L370.0 112.0 L375.5 106.5 L381.0 105.6 L386.5 108.1 L392.1 112.2 L397.6 117.5 L403.1 125.6 L408.6 140.9 L414.1 164.0 L419.7 191.4 L425.2 221.3 L430.7 252.0 L436.2 282.4 L441.7 315.0 L447.3 349.3 L452.8 379.4 L458.3 403.3 L463.8 419.6 L469.3 426.4 L474.9 423.3 L480.4 414.9 L485.9 404.5 L491.4 393.1 L496.9 381.7 L502.5 370.4 L508.0 358.8 L513.5 346.9 L519.0 334.6 L524.5 322.9 L530.1 315.5 L535.6 310.2 L541.1 304.9 L546.6 301.5 L552.1 298.5 L557.7 296.2 L563.2 293.0 L568.7 290.4 L574.2 285.9 L579.7 281.6 L585.3 277.6 L590.8 271.5 L596.3 267.3 L601.8 262.9 L607.3 258.9 L612.9 257.6 L618.4 257.5" stroke="#228b22" stroke-width="2" fill="none" stroke-linejoin="round"/><path d="M132.6 257.5 L138.1 224.8 L143.7 222.1 L149.2 220.8 L154.7 218.8 L160.2 216.7 L165.7 214.4 L171.3 211.9 L176.8 209.6 L182.3 208.0 L187.8 207.0 L193.3 206.8 L198.9 207.8 L204.4 210.2 L209.9 214.1 L215.4 219.2 L220.9 224.9 L226.5 231.8 L232.0 240.0 L237.5 249.9 L243.0 262.9 L248.5 278.8 L254.1 293.5 L259.6 305.8 L265.1 318.0 L270.6 330.4 L276.1 340.0 L281.7 345.3 L287.2 344.4 L292.7 338.2 L298.2 328.2 L303.7 314.8 L309.3 299.8 L314.8 282.9 L320.3 264.7 L325.8 248.5 L331.3 235.0 L336.9 221.6 L342.4 206.2 L347.9 188.9 L353.4 170.5 L358.9 151.9 L364.5 136.3 L370.0 125.9 L375.5 119.6 L381.0 116.6 L386.5 117.3 L392.1 120.5 L397.6 125.0 L403.1 130.9 L408.6 141.2 L414.1 160.3 L419.7 185.6 L425.2 213.8 L430.7 243.2 L436.2 271.9 L441.7 301.4 L447.3 333.3 L452.8 362.3 L458.3 385.6 L463.8 402.3 L469.3 410.9 L474.9 410.1 L480.4 403.4 L485.9 394.3 L491.4 384.2 L496.9 373.8 L502.5 363.7 L508.0 353.3 L513.5 342.5 L519.0 331.7 L524.5 321.9 L530.1 314.3 L535.6 307.8 L541.1 303.3 L546.6 300.5 L552.1 297.7 L557.7 295.8 L563.2 293.8 L568.7 289.9 L574.2 286.7 L579.7 281.1 L585.3 276.0 L590.8 271.8 L596.3 268.4 L601.8 263.6 L607.3 259.5 L612.9 257.7 L618.4 257.5" stroke="#800080" stroke-width="2" fill="none" stroke-linejoin="round"/><path d="M132.6 257.5 L138.1 222.3 L143.7 219.8 L149.2 218.4 L154.7 216.2 L160.2 213.9 L165.7 211.4 L171.3 208.7 L176.8 206.3 L182.3 204.6 L187.8 203.5 L193.3 203.3 L198.9 204.5 L204.4 207.2 L209.9 211.5 L215.4 217.0 L220.9 223.2 L226.5 230.8 L232.0 239.9 L237.5 250.9 L243.0 265.5 L248.5 283.2 L254.1 298.9 L259.6 312.3 L265.1 326.2 L270.6 339.9 L276.1 350.1 L281.7 355.4 L287.2 353.8 L292.7 346.5 L298.2 334.9 L303.7 319.8 L309.3 302.7 L314.8 283.4 L320.3 262.8 L325.8 244.9 L331.3 229.6 L336.9 213.5 L342.4 194.4 L347.9 172.4 L353.4 148.2 L358.9 124.6 L364.5 107.9 L370.0 98.5 L375.5 95.1 L381.0 97.6 L386.5 102.4 L392.1 108.4 L397.6 116.5 L403.1 130.0 L408.6 149.7 L414.1 172.9 L419.7 198.5 L425.2 226.0 L430.7 254.8 L436.2 283.9 L441.7 316.0 L447.3 350.6 L452.8 381.6 L458.3 406.5 L463.8 423.9 L469.3 431.8 L474.9 429.2 L480.4 420.7 L485.9 409.9 L491.4 398.1 L496.9 386.2 L502.5 374.5 L508.0 362.6 L513.5 350.3 L519.0 337.5 L524.5 326.1 L530.1 315.7 L535.6 310.5 L541.1 305.8 L546.6 303.1 L552.1 300.4 L557.7 297.3 L563.2 294.9 L568.7 291.4 L574.2 287.1 L579.7 283.1 L585.3 278.5 L590.8 272.3 L596.3 267.7 L601.8 263.5 L607.3 258.9 L612.9 256.7 L618.4 257.5" stroke="#b22222" stroke-width="2" fill="none" stroke-linejoin="round"/><path d="M132.6 257.5 L138.1 230.5 L143.7 228.7 L149.2 227.6 L154.7 225.9 L160.2 224.1 L165.7 222.2 L171.3 220.1 L176.8 218.2 L182.3 216.9 L187.8 216.2 L193.3 216.0 L198.9 217.0 L204.4 219.1 L209.9 222.5 L215.4 226.7 L220.9 231.6 L226.5 237.4 L232.0 244.4 L237.5 252.9 L243.0 264.1 L248.5 277.5 L254.1 289.3 L259.6 299.3 L265.1 309.7 L270.6 319.9 L276.1 327.3 L281.7 331.0 L287.2 329.4 L292.7 323.7 L298.2 314.8 L303.7 303.3 L309.3 290.5 L314.8 276.1 L320.3 261.0 L325.8 247.9 L331.3 236.9 L336.9 225.5 L342.4 212.3 L347.9 197.7 L353.4 182.4 L358.9 167.3 L364.5 155.1 L370.0 147.2 L375.5 142.5 L381.0 140.4 L386.5 141.4 L392.1 144.2 L397.6 148.2 L403.1 153.4 L408.6 162.7 L414.1 179.4 L419.7 201.0 L425.2 224.8 L430.7 249.3 L436.2 272.9 L441.7 297.6 L447.3 323.6 L452.8 346.4 L458.3 364.4 L463.8 376.8 L469.3 382.3 L474.9 380.3 L480.4 374.2 L485.9 366.5 L491.4 358.1 L496.9 349.7 L502.5 341.5 L508.0 333.0 L513.5 324.2 L519.0 316.6 L524.5 307.8 L530.1 303.3 L535.6 299.8 L541.1 298.3 L546.6 294.8 L552.1 292.5 L557.7 290.6 L563.2 288.0 L568.7 285.8 L574.2 282.8 L579.7 278.1 L585.3 274.2 L590.8 269.7 L596.3 263.7 L601.8 261.5 L607.3 258.8 L612.9 258.1 L618.4 257.5" stroke="#8b0000" stroke-width="2" fill="none" stroke-linejoin="round"/><path d="M132.6 257.5 L138.1 230.5 L143.7 229.0 L149.2 227.8 L154.7 226.2 L160.2 224.4 L165.7 222.6 L171.3 220.5 L176.8 218.8 L182.3 217.7 L187.8 217.0 L193.3 217.1 L198.9 218.2 L204.4 220.5 L209.9 224.0 L215.4 228.2 L220.9 233.1 L226.5 239.0 L232.0 246.1 L237.5 254.8 L243.0 266.5 L248.5 279.7 L254.1 290.9 L259.6 300.9 L265.1 311.4 L270.6 321.3 L276.1 328.2 L281.7 331.1 L287.2 328.8 L292.7 322.6 L298.2 313.1 L303.7 301.4 L309.3 288.2 L314.8 273.4 L320.3 258.2 L325.8 245.4 L331.3 234.1 L336.9 221.9 L342.4 207.6 L347.9 191.7 L353.4 174.9 L358.9 158.7 L364.5 146.9 L370.0 139.5 L375.5 135.5 L381.0 135.1 L386.5 137.3 L392.1 140.8 L397.6 145.3 L403.1 152.2 L408.6 165.1 L414.1 184.2 L419.7 206.7 L425.2 231.0 L430.7 255.7 L436.2 280.0 L441.7 306.2 L447.3 333.2 L452.8 356.3 L458.3 374.2 L463.8 386.0 L469.3 390.1 L474.9 386.7 L480.4 379.7 L485.9 371.2 L491.4 362.1 L496.9 353.1 L502.5 344.3 L508.0 335.1 L513.5 325.7 L519.0 317.4 L524.5 309.8 L530.1 303.3 L535.6 299.6 L541.1 297.9 L546.6 296.3 L552.1 291.7 L557.7 290.9 L563.2 288.4 L568.7 286.2 L574.2 281.4 L579.7 277.2 L585.3 273.1 L590.8 269.5 L596.3 266.2 L601.8 262.4 L607.3 259.1 L612.9 257.6 L618.4 257.5" stroke="#b22222" stroke-width="2" fill="none" stroke-linejoin="round"/><path d="M132.6 257.5 L138.1 219.3 L143.7 217.6 L149.2 215.9 L154.7 213.7 L160.2 211.4 L165.7 208.9 L171.3 206.2 L176.8 204.1 L182.3 202.8 L187.8 202.1 L193.3 202.5 L198.9 204.4 L204.4 208.0 L209.9 213.0 L215.4 218.9 L220.9 225.7 L226.5 233.9 L232.0 243.7 L237.5 255.9 L243.0 272.0 L248.5 289.3 L254.1 303.8 L259.6 316.9 L265.1 330.8 L270.6 343.3 L276.1 351.7 L281.7 354.4 L287.2 350.3 L292.7 341.5 L298.2 328.5 L303.7 312.7 L309.3 295.2 L314.8 275.4 L320.3 255.8 L325.8 239.5 L331.3 224.8 L336.9 208.6 L342.4 189.9 L347.9 169.4 L353.4 148.1 L358.9 127.9 L364.5 112.9 L370.0 103.3 L375.5 97.4 L381.0 95.4 L386.5 97.2 L392.1 101.0 L397.6 106.3 L403.1 114.0 L408.6 129.4 L414.1 155.3 L419.7 187.0 L425.2 221.6 L430.7 256.4 L436.2 290.5 L441.7 327.4 L447.3 364.4 L452.8 395.4 L458.3 419.4 L463.8 434.6 L469.3 439.0 L474.9 433.8 L480.4 424.2 L485.9 412.7 L491.4 400.5 L496.9 388.4 L502.5 376.3 L508.0 363.8 L513.5 350.9 L519.0 337.5 L524.5 325.5 L530.1 316.6 L535.6 310.2 L541.1 306.3 L546.6 303.1 L552.1 300.9 L557.7 297.8 L563.2 294.9 L568.7 290.8 L574.2 287.2 L579.7 281.1 L585.3 275.3 L590.8 271.1 L596.3 265.8 L601.8 261.9 L607.3 258.4 L612.9 256.7 L618.4 257.5" stroke="#800080" stroke-width="2" fill="none" stroke-linejoin="round"/><path d="M132.6 257.5 L138.1 226.2 L143.7 224.8 L149.2 223.4 L154.7 221.5 L160.2 219.6 L165.7 217.5 L171.3 215.3 L176.8 213.6 L182.3 212.5 L187.8 211.9 L193.3 212.3 L198.9 213.8 L204.4 216.8 L209.9 220.9 L215.4 225.8 L220.9 231.4 L226.5 238.2 L232.0 246.3 L237.5 256.4 L243.0 269.8 L248.5 284.0 L254.1 295.9 L259.6 306.7 L265.1 318.2 L270.6 328.5 L276.1 335.3 L281.7 337.5 L287.2 334.0 L292.7 326.7 L298.2 315.9 L303.7 302.8 L309.3 288.3 L314.8 272.0 L320.3 255.8 L325.8 242.3 L331.3 230.0 L336.9 216.4 L342.4 200.2 L347.9 182.2 L353.4 163.0 L358.9 145.6 L364.5 133.8 L370.0 127.0 L375.5 124.5 L381.0 126.1 L386.5 129.6 L392.1 134.1 L397.6 140.3 L403.1 151.3 L408.6 168.5 L414.1 189.5 L419.7 212.8 L425.2 237.7 L430.7 263.0 L436.2 288.8 L441.7 317.5 L447.3 346.5 L452.8 371.0 L458.3 390.1 L463.8 402.2 L469.3 405.6 L474.9 401.2 L480.4 393.3 L485.9 383.9 L491.4 373.9 L496.9 364.0 L502.5 354.1 L508.0 343.9 L513.5 333.4 L519.0 323.4 L524.5 314.2 L530.1 307.9 L535.6 303.6 L541.1 300.0 L546.6 297.3 L552.1 296.2 L557.7 293.3 L563.2 289.9 L568.7 286.5 L574.2 282.2 L579.7 279.4 L585.3 273.1 L590.8 269.6 L596.3 266.3 L601.8 260.5 L607.3 258.0 L612.9 257.1 L618.4 257.5" stroke="#6a5acd" stroke-width="2" fill="none" stroke-linejoin="round"/><path d="M132.6 257.5 L138.1 223.1 L143.7 220.7 L149.2 219.5 L154.7 217.5 L160.2 215.3 L165.7 213.1 L171.3 210.6 L176.8 208.4 L182.3 206.9 L187.8 206.1 L193.3 206.0 L198.9 207.3 L204.4 210.0 L209.9 214.2 L215.4 219.5 L220.9 225.4 L226.5 232.5 L232.0 241.1 L237.5 251.4 L243.0 264.9 L248.5 281.2 L254.1 295.6 L259.6 307.9 L265.1 320.4 L270.6 332.8 L276.1 342.1 L281.7 346.8 L287.2 345.2 L292.7 338.5 L298.2 327.9 L303.7 314.1 L309.3 298.5 L314.8 281.1 L320.3 262.5 L325.8 246.3 L331.3 232.6 L336.9 218.5 L342.4 202.2 L347.9 184.0 L353.4 164.8 L358.9 145.5 L364.5 129.7 L370.0 119.1 L375.5 112.4 L381.0 109.0 L386.5 109.5 L392.1 112.5 L397.6 117.0 L403.1 123.1 L408.6 134.2 L414.1 155.1 L419.7 182.6 L425.2 213.5 L430.7 245.4 L436.2 276.5 L441.7 309.0 L447.3 343.6 L452.8 374.4 L458.3 399.0 L463.8 416.3 L469.3 424.3 L474.9 422.4 L480.4 414.7 L485.9 404.7 L491.4 392.0 L496.9 379.5 L502.5 367.4 L508.0 355.2 L513.5 342.9 L519.0 330.8 L524.5 320.5 L530.1 312.7 L535.6 306.9 L541.1 303.5 L546.6 300.3 L552.1 297.8 L557.7 295.4 L563.2 292.9 L568.7 289.8 L574.2 286.3 L579.7 280.9 L585.3 276.8 L590.8 271.7 L596.3 267.1 L601.8 263.2 L607.3 259.3 L612.9 258.0 L618.4 257.5" stroke="#7b7bc4" stroke-width="2" fill="none" stroke-linejoin="round"/><path d="M132.6 257.5 L138.1 221.2 L143.7 219.2 L149.2 217.7 L154.7 215.4 L160.2 213.1 L165.7 210.6 L171.3 207.9 L176.8 205.6 L182.3 204.1 L187.8 203.2 L193.3 203.3 L198.9 204.8 L204.4 207.9 L209.9 212.6 L215.4 218.2 L220.9 224.7 L226.5 232.6 L232.0 242.0 L237.5 253.7 L243.0 269.3 L248.5 286.9 L254.1 302.0 L259.6 315.4 L265.1 329.4 L270.6 342.7 L276.1 352.1 L281.7 356.1 L287.2 353.1 L292.7 344.9 L298.2 332.3 L303.7 316.6 L309.3 299.1 L314.8 279.2 L320.3 258.7 L325.8 241.4 L331.3 226.1 L336.9 209.5 L342.4 189.9 L347.9 167.8 L353.4 144.0 L358.9 121.4 L364.5 105.6 L370.0 96.2 L375.5 92.2 L381.0 93.7 L386.5 97.9 L392.1 103.3 L397.6 110.5 L403.1 122.6 L408.6 142.7 L414.1 168.1 L419.7 196.6 L425.2 227.1 L430.7 258.3 L436.2 289.7 L441.7 324.3 L447.3 360.1 L452.8 391.1 L458.3 415.4 L463.8 431.4 L469.3 437.2 L474.9 432.8 L480.4 423.4 L485.9 411.9 L491.4 399.6 L496.9 387.5 L502.5 375.4 L508.0 363.0 L513.5 350.3 L519.0 337.1 L524.5 325.4 L530.1 316.9 L535.6 311.0 L541.1 305.1 L546.6 303.0 L552.1 299.9 L557.7 297.8 L563.2 294.1 L568.7 291.0 L574.2 286.9 L579.7 282.4 L585.3 277.1 L590.8 270.9 L596.3 268.1 L601.8 262.4 L607.3 257.7 L612.9 256.6 L618.4 257.5" stroke="#e9967a" stroke-width="2" fill="none" stroke-linejoin="round"/><path d="M132.6 257.5 L138.1 225.0 L143.7 222.4 L149.2 221.2 L154.7 219.2 L160.2 217.1 L165.7 214.9 L171.3 212.4 L176.8 210.1 L182.3 208.5 L187.8 207.5 L193.3 207.3 L198.9 208.2 L204.4 210.6 L209.9 214.5 L215.4 219.5 L220.9 225.2 L226.5 232.0 L232.0 240.2 L237.5 250.1 L243.0 263.1 L248.5 279.2 L254.1 294.0 L259.6 306.4 L265.1 319.0 L270.6 331.8 L276.1 341.7 L281.7 347.2 L287.2 346.5 L292.7 340.3 L298.2 330.2 L303.7 316.5 L309.3 301.1 L314.8 283.7 L320.3 264.8 L325.8 248.0 L331.3 233.9 L336.9 219.9 L342.4 203.9 L347.9 186.0 L353.4 167.4 L358.9 148.5 L364.5 132.2 L370.0 120.5 L375.5 112.8 L381.0 108.1 L386.5 106.8 L392.1 108.9 L397.6 112.9 L403.1 118.6 L408.6 127.7 L414.1 146.5 L419.7 174.3 L425.2 206.2 L430.7 239.4 L436.2 271.5 L441.7 304.0 L447.3 338.8 L452.8 370.2 L458.3 395.2 L463.8 413.0 L469.3 421.8 L474.9 420.6 L480.4 413.1 L485.9 403.1 L491.4 392.1 L496.9 380.9 L502.5 369.8 L508.0 358.6 L513.5 347.0 L519.0 335.1 L524.5 324.3 L530.1 314.7 L535.6 309.1 L541.1 304.7 L546.6 302.0 L552.1 299.8 L557.7 296.3 L563.2 293.2 L568.7 290.5 L574.2 287.3 L579.7 281.8 L585.3 277.4 L590.8 272.1 L596.3 268.3 L601.8 262.9 L607.3 259.1 L612.9 256.4 L618.4 257.5" stroke="#ff8c00" stroke-width="2" fill="none" stroke-linejoin="round"/><path d="M132.6 257.5 L138.1 223.4 L143.7 220.6 L149.2 219.4 L154.7 217.3 L160.2 215.1 L165.7 212.9 L171.3 210.3 L176.8 207.9 L182.3 206.2 L187.8 205.2 L193.3 204.9 L198.9 205.9 L204.4 208.3 L209.9 212.4 L215.4 217.5 L220.9 223.5 L226.5 230.6 L232.0 239.1 L237.5 249.4 L243.0 262.9 L248.5 279.7 L254.1 295.3 L259.6 308.4 L265.1 321.5 L270.6 334.9 L276.1 345.4 L281.7 351.3 L287.2 350.8 L292.7 344.5 L298.2 333.9 L303.7 319.7 L309.3 303.6 L314.8 285.4 L320.3 265.5 L325.8 247.7 L331.3 232.8 L336.9 217.6 L342.4 199.9 L347.9 179.6 L353.4 157.4 L358.9 134.8 L364.5 116.9 L370.0 105.8 L375.5 99.8 L381.0 99.0 L386.5 101.9 L392.1 106.4 L397.6 112.2 L403.1 120.7 L408.6 136.3 L414.1 159.1 L419.7 185.9 L425.2 215.3 L430.7 246.0 L436.2 276.7 L441.7 309.1 L447.3 344.5 L452.8 376.9 L458.3 403.1 L463.8 422.0 L469.3 431.7 L474.9 430.6 L480.4 422.8 L485.9 412.3 L491.4 400.7 L496.9 388.8 L502.5 377.1 L508.0 365.2 L513.5 352.8 L519.0 339.9 L524.5 328.1 L530.1 317.8 L535.6 311.9 L541.1 306.9 L546.6 304.4 L552.1 301.2 L557.7 297.5 L563.2 295.1 L568.7 292.2 L574.2 288.0 L579.7 283.7 L585.3 278.1 L590.8 273.9 L596.3 268.2 L601.8 264.1 L607.3 259.6 L612.9 257.2 L618.4 257.5" stroke="#1e90ff" stroke-width="2" fill="none" stroke-linejoin="round"/><path d="M132.6 257.5 L138.1 221.9 L143.7 219.7 L149.2 218.3 L154.7 216.1 L160.2 213.9 L165.7 211.5 L171.3 208.9 L176.8 206.7 L182.3 205.1 L187.8 204.3 L193.3 204.2 L198.9 205.6 L204.4 208.5 L209.9 212.9 L215.4 218.4 L220.9 224.6 L226.5 232.1 L232.0 241.1 L237.5 252.1 L243.0 266.6 L248.5 283.6 L254.1 298.5 L259.6 311.3 L265.1 324.6 L270.6 337.6 L276.1 347.0 L281.7 351.6 L287.2 349.5 L292.7 342.1 L298.2 330.6 L303.7 315.9 L309.3 299.4 L314.8 280.8 L320.3 261.3 L325.8 244.4 L331.3 229.9 L336.9 214.8 L342.4 197.0 L347.9 177.1 L353.4 155.9 L358.9 134.9 L364.5 118.7 L370.0 108.4 L375.5 102.4 L381.0 100.9 L386.5 103.2 L392.1 107.2 L397.6 112.6 L403.1 120.3 L408.6 135.1 L414.1 158.6 L419.7 187.0 L425.2 218.1 L430.7 250.1 L436.2 281.6 L441.7 315.1 L447.3 350.6 L452.8 381.8 L458.3 406.6 L463.8 423.6 L469.3 431.0 L474.9 428.2 L480.4 419.7 L485.9 409.1 L491.4 397.5 L496.9 385.8 L502.5 374.3 L508.0 362.4 L513.5 350.1 L519.0 337.3 L524.5 325.5 L530.1 316.6 L535.6 309.2 L541.1 305.6 L546.6 302.5 L552.1 301.6 L557.7 298.7 L563.2 295.3 L568.7 290.8 L574.2 286.5 L579.7 282.9 L585.3 277.8 L590.8 272.7 L596.3 267.8 L601.8 262.4 L607.3 259.2 L612.9 255.9 L618.4 257.5" stroke="#000000" stroke-width="2" fill="none" stroke-linejoin="round"/><path d="M132.6 257.5 L138.1 223.4 L143.7 221.6 L149.2 220.3 L154.7 218.3 L160.2 216.2 L165.7 214.0 L171.3 211.6 L176.8 209.6 L182.3 208.3 L187.8 207.6 L193.3 207.8 L198.9 209.2 L204.4 212.1 L209.9 216.5 L215.4 221.7 L220.9 227.6 L226.5 234.8 L232.0 243.3 L237.5 253.8 L243.0 267.7 L248.5 283.5 L254.1 297.0 L259.6 308.8 L265.1 321.2 L270.6 332.9 L276.1 341.2 L281.7 344.7 L287.2 342.0 L292.7 334.8 L298.2 323.7 L303.7 309.9 L309.3 294.5 L314.8 277.0 L320.3 259.0 L325.8 243.9 L331.3 230.6 L336.9 216.5 L342.4 200.2 L347.9 182.4 L353.4 163.8 L358.9 145.6 L364.5 131.1 L370.0 121.3 L375.5 115.0 L381.0 111.6 L386.5 111.7 L392.1 114.4 L397.6 118.6 L403.1 124.6 L408.6 135.6 L414.1 156.9 L419.7 185.4 L425.2 217.1 L430.7 249.5 L436.2 280.9 L441.7 314.0 L447.3 348.2 L452.8 377.7 L458.3 400.7 L463.8 416.1 L469.3 422.1 L474.9 418.6 L480.4 410.4 L485.9 400.3 L491.4 389.3 L496.9 378.3 L502.5 367.4 L508.0 356.1 L513.5 344.4 L519.0 332.6 L524.5 321.5 L530.1 313.5 L535.6 308.4 L541.1 304.2 L546.6 302.6 L552.1 297.7 L557.7 296.0 L563.2 293.0 L568.7 289.9 L574.2 285.1 L579.7 281.2 L585.3 276.0 L590.8 271.7 L596.3 266.6 L601.8 262.0 L607.3 257.9 L612.9 257.4 L618.4 257.5" stroke="#000000" stroke-width="2" fill="none" stroke-linejoin="round"/><path d="M132.6 257.5 L138.1 224.0 L143.7 222.5 L149.2 220.9 L154.7 218.9 L160.2 216.8 L165.7 214.6 L171.3 212.2 L176.8 210.3 L182.3 209.0 L187.8 208.4 L193.3 208.7 L198.9 210.3 L204.4 213.4 L209.9 217.8 L215.4 223.0 L220.9 229.1 L226.5 236.4 L232.0 245.1 L237.5 256.0 L243.0 270.5 L248.5 286.1 L254.1 299.1 L259.6 310.9 L265.1 323.5 L270.6 334.8 L276.1 342.5 L281.7 345.0 L287.2 341.4 L292.7 333.4 L298.2 321.7 L303.7 307.5 L309.3 291.7 L314.8 273.8 L320.3 256.0 L325.8 241.3 L331.3 228.0 L336.9 213.4 L342.4 196.5 L347.9 178.1 L353.4 159.0 L358.9 141.0 L364.5 127.5 L370.0 118.8 L375.5 113.4 L381.0 111.4 L386.5 112.7 L392.1 116.2 L397.6 120.9 L403.1 127.7 L408.6 141.1 L414.1 164.3 L419.7 193.0 L425.2 224.3 L430.7 255.8 L436.2 286.5 L441.7 319.5 L447.3 352.5 L452.8 380.1 L458.3 401.2 L463.8 414.6 L469.3 418.4 L474.9 413.6 L480.4 404.9 L485.9 394.6 L491.4 383.7 L496.9 372.9 L502.5 362.1 L508.0 351.0 L513.5 339.6 L519.0 328.4 L524.5 319.0 L530.1 310.4 L535.6 306.0 L541.1 303.3 L546.6 299.0 L552.1 297.9 L557.7 293.9 L563.2 292.2 L568.7 289.5 L574.2 283.5 L579.7 280.0 L585.3 274.3 L590.8 269.2 L596.3 266.2 L601.8 261.2 L607.3 258.5 L612.9 256.6 L618.4 257.5" stroke="#ffdab9" stroke-width="2" fill="none" stroke-linejoin="round"/><path d="M132.6 257.5 L138.1 229.7 L143.7 228.3 L149.2 227.1 L154.7 225.5 L160.2 223.8 L165.7 221.9 L171.3 219.9 L176.8 218.3 L182.3 217.2 L187.8 216.6 L193.3 216.8 L198.9 218.0 L204.4 220.5 L209.9 224.1 L215.4 228.3 L220.9 233.3 L226.5 239.2 L232.0 246.4 L237.5 255.2 L243.0 266.9 L248.5 280.0 L254.1 291.1 L259.6 300.9 L265.1 311.4 L270.6 321.1 L276.1 327.9 L281.7 330.5 L287.2 328.0 L292.7 321.8 L298.2 312.4 L303.7 300.6 L309.3 287.6 L314.8 272.8 L320.3 257.7 L325.8 245.0 L331.3 233.6 L336.9 221.2 L342.4 206.5 L347.9 189.9 L353.4 172.0 L358.9 155.2 L364.5 143.6 L370.0 136.8 L375.5 134.2 L381.0 135.5 L386.5 138.7 L392.1 142.8 L397.6 148.3 L403.1 158.1 L408.6 173.6 L414.1 192.6 L419.7 213.8 L425.2 236.6 L430.7 259.8 L436.2 283.5 L441.7 309.7 L447.3 336.8 L452.8 360.1 L458.3 378.4 L463.8 390.4 L469.3 394.5 L474.9 391.0 L480.4 383.9 L485.9 375.2 L491.4 365.9 L496.9 356.7 L502.5 347.5 L508.0 338.1 L513.5 328.4 L519.0 319.5 L524.5 311.5 L530.1 304.8 L535.6 300.9 L541.1 298.0 L546.6 296.2 L552.1 293.9 L557.7 291.3 L563.2 288.8 L568.7 286.1 L574.2 282.7 L579.7 279.1 L585.3 273.2 L590.8 269.6 L596.3 265.0 L601.8 260.5 L607.3 259.2 L612.9 256.6 L618.4 257.5" stroke="#ff00ff" stroke-width="2" fill="none" stroke-linejoin="round"/><path d="M132.6 257.5 L138.1 223.0 L143.7 221.1 L149.2 219.7 L154.7 217.6 L160.2 215.4 L165.7 213.1 L171.3 210.5 L176.8 208.4 L182.3 207.0 L187.8 206.2 L193.3 206.2 L198.9 207.7 L204.4 210.6 L209.9 215.0 L215.4 220.3 L220.9 226.5 L226.5 233.9 L232.0 242.7 L237.5 253.6 L243.0 268.0 L248.5 284.5 L254.1 298.6 L259.6 311.0 L265.1 324.0 L270.6 336.3 L276.1 345.0 L281.7 348.8 L287.2 346.1 L292.7 338.5 L298.2 326.9 L303.7 312.4 L309.3 296.3 L314.8 278.0 L320.3 259.1 L325.8 243.2 L331.3 229.2 L336.9 214.2 L342.4 196.4 L347.9 176.6 L353.4 155.3 L358.9 134.9 L364.5 120.1 L370.0 111.2 L375.5 106.8 L381.0 107.2 L386.5 110.6 L392.1 115.2 L397.6 121.1 L403.1 130.7 L408.6 147.8 L414.1 171.1 L419.7 197.8 L425.2 226.5 L430.7 256.0 L436.2 285.3 L441.7 317.3 L447.3 350.6 L452.8 379.4 L458.3 402.2 L463.8 417.4 L469.3 423.2 L474.9 419.6 L480.4 411.1 L485.9 400.8 L491.4 389.6 L496.9 378.4 L502.5 367.4 L508.0 356.0 L513.5 344.3 L519.0 332.5 L524.5 321.6 L530.1 313.6 L535.6 308.3 L541.1 304.2 L546.6 301.9 L552.1 299.4 L557.7 295.2 L563.2 292.6 L568.7 291.0 L574.2 286.6 L579.7 281.4 L585.3 276.3 L590.8 272.0 L596.3 265.9 L601.8 263.1 L607.3 258.2 L612.9 256.5 L618.4 257.5" stroke="#4169e1" stroke-width="2" fill="none" stroke-linejoin="round"/><path d="M132.6 257.5 L138.1 223.1 L143.7 221.2 L149.2 219.8 L154.7 217.7 L160.2 215.5 L165.7 213.3 L171.3 210.7 L176.8 208.6 L182.3 207.2 L187.8 206.4 L193.3 206.5 L198.9 207.9 L204.4 210.7 L209.9 215.1 L215.4 220.4 L220.9 226.5 L226.5 233.7 L232.0 242.5 L237.5 253.1 L243.0 267.3 L248.5 283.5 L254.1 297.6 L259.6 309.8 L265.1 322.5 L270.6 334.7 L276.1 343.4 L281.7 347.3 L287.2 344.8 L292.7 337.5 L298.2 326.2 L303.7 312.0 L309.3 296.2 L314.8 278.4 L320.3 259.8 L325.8 244.0 L331.3 230.2 L336.9 215.5 L342.4 197.9 L347.9 178.1 L353.4 156.5 L358.9 135.9 L364.5 121.5 L370.0 113.1 L375.5 109.8 L381.0 111.4 L386.5 115.4 L392.1 120.5 L397.6 127.2 L403.1 138.6 L408.6 156.7 L414.1 178.8 L419.7 203.5 L425.2 230.0 L430.7 257.4 L436.2 285.2 L441.7 315.9 L447.3 348.2 L452.8 376.6 L458.3 399.2 L463.8 414.6 L469.3 420.8 L474.9 417.6 L480.4 409.5 L485.9 399.5 L491.4 388.5 L496.9 377.6 L502.5 366.8 L508.0 355.6 L513.5 344.1 L519.0 332.4 L524.5 320.9 L530.1 313.4 L535.6 306.3 L541.1 304.6 L546.6 300.8 L552.1 298.2 L557.7 296.9 L563.2 292.9 L568.7 291.2 L574.2 285.3 L579.7 281.2 L585.3 276.3 L590.8 271.4 L596.3 266.9 L601.8 261.8 L607.3 258.6 L612.9 257.2 L618.4 257.5" stroke="#3cb371" stroke-width="2" fill="none" stroke-linejoin="round"/><path d="M132.6 257.5 L138.1 221.8 L143.7 220.1 L149.2 218.4 L154.7 216.2 L160.2 213.9 L165.7 211.4 L171.3 208.7 L176.8 206.5 L182.3 205.1 L187.8 204.3 L193.3 204.6 L198.9 206.3 L204.4 209.5 L209.9 214.3 L215.4 219.9 L220.9 226.4 L226.5 234.4 L232.0 243.9 L237.5 255.8 L243.0 271.7 L248.5 288.8 L254.1 303.2 L259.6 316.2 L265.1 330.1 L270.6 342.6 L276.1 351.0 L281.7 353.9 L287.2 349.9 L292.7 341.2 L298.2 328.3 L303.7 312.6 L309.3 295.1 L314.8 275.4 L320.3 255.8 L325.8 239.5 L331.3 224.6 L336.9 208.0 L342.4 188.2 L347.9 166.0 L353.4 142.0 L358.9 120.8 L364.5 107.2 L370.0 99.9 L375.5 98.9 L381.0 102.5 L386.5 107.8 L392.1 114.4 L397.6 124.4 L403.1 141.0 L408.6 162.3 L414.1 186.0 L419.7 211.7 L425.2 238.8 L430.7 266.5 L436.2 295.3 L441.7 327.8 L447.3 360.6 L452.8 388.6 L458.3 410.3 L463.8 424.1 L469.3 427.8 L474.9 422.5 L480.4 413.1 L485.9 402.1 L491.4 390.4 L496.9 378.9 L502.5 367.5 L508.0 355.6 L513.5 343.6 L519.0 331.5 L524.5 322.8 L530.1 313.6 L535.6 307.7 L541.1 304.3 L546.6 300.9 L552.1 298.3 L557.7 297.0 L563.2 293.0 L568.7 289.0 L574.2 286.1 L579.7 281.1 L585.3 274.6 L590.8 270.4 L596.3 265.9 L601.8 262.1 L607.3 258.1 L612.9 257.2 L618.4 257.5" stroke="#adff2f" stroke-width="2" fill="none" stroke-linejoin="round"/><path d="M132.6 257.5 L138.1 225.8 L143.7 224.2 L149.2 222.8 L154.7 220.9 L160.2 218.9 L165.7 216.8 L171.3 214.5 L176.8 212.6 L182.3 211.3 L187.8 210.6 L193.3 210.7 L198.9 212.1 L204.4 214.8 L209.9 218.9 L215.4 223.7 L220.9 229.4 L226.5 236.2 L232.0 244.4 L237.5 254.4 L243.0 267.9 L248.5 283.1 L254.1 296.0 L259.6 307.4 L265.1 319.6 L270.6 330.9 L276.1 338.9 L281.7 342.2 L287.2 339.6 L292.7 332.5 L298.2 321.6 L303.7 308.1 L309.3 293.0 L314.8 275.9 L320.3 258.3 L325.8 243.6 L331.3 230.5 L336.9 216.6 L342.4 200.5 L347.9 183.0 L353.4 164.7 L358.9 147.0 L364.5 133.0 L370.0 123.6 L375.5 117.5 L381.0 114.2 L386.5 114.4 L392.1 117.2 L397.6 121.4 L403.1 127.4 L408.6 138.3 L414.1 159.5 L419.7 187.7 L425.2 218.9 L430.7 250.6 L436.2 281.2 L441.7 313.4 L447.3 346.4 L452.8 374.5 L458.3 396.2 L463.8 410.4 L469.3 415.5 L474.9 411.6 L480.4 403.3 L485.9 393.2 L491.4 382.5 L496.9 371.8 L502.5 361.2 L508.0 350.3 L513.5 339.1 L519.0 328.2 L524.5 318.3 L530.1 310.0 L535.6 305.1 L541.1 301.8 L546.6 298.8 L552.1 297.0 L557.7 293.9 L563.2 291.0 L568.7 288.6 L574.2 284.2 L579.7 280.5 L585.3 274.9 L590.8 270.3 L596.3 265.6 L601.8 260.5 L607.3 258.0 L612.9 257.1 L618.4 257.5" stroke="#191970" stroke-width="2" fill="none" stroke-linejoin="round"/><path d="M132.6 257.5 L138.1 225.1 L143.7 223.5 L149.2 222.0 L154.7 220.0 L160.2 217.9 L165.7 215.6 L171.3 213.2 L176.8 211.2 L182.3 209.9 L187.8 209.2 L193.3 209.3 L198.9 210.8 L204.4 213.6 L209.9 217.9 L215.4 223.0 L220.9 228.8 L226.5 235.9 L232.0 244.4 L237.5 254.9 L243.0 268.9 L248.5 284.4 L254.1 297.4 L259.6 309.1 L265.1 321.4 L270.6 332.7 L276.1 340.5 L281.7 343.4 L287.2 340.3 L292.7 332.7 L298.2 321.5 L303.7 307.6 L309.3 292.3 L314.8 275.0 L320.3 257.6 L325.8 243.0 L331.3 230.2 L336.9 216.5 L342.4 200.7 L347.9 183.7 L353.4 166.1 L358.9 149.3 L364.5 136.2 L370.0 127.5 L375.5 121.9 L381.0 118.9 L386.5 119.1 L392.1 121.9 L397.6 126.2 L403.1 132.1 L408.6 142.6 L414.1 163.1 L419.7 190.5 L425.2 220.8 L430.7 251.5 L436.2 280.9 L441.7 311.9 L447.3 343.3 L452.8 369.7 L458.3 390.0 L463.8 403.1 L469.3 407.4 L474.9 403.4 L480.4 395.5 L485.9 386.0 L491.4 375.9 L496.9 365.8 L502.5 355.8 L508.0 345.5 L513.5 335.0 L519.0 324.9 L524.5 315.5 L530.1 308.4 L535.6 302.9 L541.1 301.7 L546.6 298.6 L552.1 296.0 L557.7 294.2 L563.2 290.2 L568.7 287.6 L574.2 284.5 L579.7 280.1 L585.3 274.8 L590.8 268.5 L596.3 264.2 L601.8 263.0 L607.3 259.4 L612.9 256.5 L618.4 257.5" stroke="#ff8c00" stroke-width="2" fill="none" stroke-linejoin="round"/><path d="M132.6 257.5 L138.1 229.7 L143.7 227.7 L149.2 226.7 L154.7 225.0 L160.2 223.2 L165.7 221.4 L171.3 219.3 L176.8 217.4 L182.3 216.2 L187.8 215.4 L193.3 215.3 L198.9 216.2 L204.4 218.4 L209.9 221.8 L215.4 226.0 L220.9 230.9 L226.5 236.7 L232.0 243.6 L237.5 252.0 L243.0 263.0 L248.5 276.4 L254.1 288.4 L259.6 298.5 L265.1 308.9 L270.6 319.1 L276.1 326.9 L281.7 330.9 L287.2 329.9 L292.7 324.4 L298.2 315.8 L303.7 304.5 L309.3 291.8 L314.8 277.5 L320.3 262.2 L325.8 248.7 L331.3 237.3 L336.9 225.5 L342.4 211.4 L347.9 195.2 L353.4 177.3 L358.9 159.7 L364.5 147.1 L370.0 139.9 L375.5 137.3 L381.0 139.0 L386.5 142.5 L392.1 146.9 L397.6 152.7 L403.1 162.5 L408.6 176.8 L414.1 193.8 L419.7 212.7 L425.2 233.1 L430.7 254.5 L436.2 276.3 L441.7 300.3 L447.3 326.5 L452.8 350.2 L458.3 369.4 L463.8 383.2 L469.3 389.8 L474.9 388.5 L480.4 382.5 L485.9 374.6 L491.4 365.8 L496.9 356.9 L502.5 348.2 L508.0 339.2 L513.5 329.8 L519.0 321.3 L524.5 313.0 L530.1 306.3 L535.6 301.5 L541.1 298.9 L546.6 296.8 L552.1 295.1 L557.7 292.3 L563.2 289.8 L568.7 286.6 L574.2 282.2 L579.7 278.8 L585.3 275.0 L590.8 270.2 L596.3 267.4 L601.8 262.5 L607.3 259.8 L612.9 256.8 L618.4 257.5" stroke="#ffe4b5" stroke-width="2" fill="none" stroke-linejoin="round"/><path d="M132.6 257.5 L138.1 220.5 L143.7 218.6 L149.2 216.9 L154.7 214.6 L160.2 212.3 L165.7 209.7 L171.3 207.0 L176.8 204.7 L182.3 203.2 L187.8 202.3 L193.3 202.5 L198.9 204.1 L204.4 207.4 L209.9 212.2 L215.4 218.0 L220.9 224.7 L226.5 232.8 L232.0 242.4 L237.5 254.4 L243.0 270.2 L248.5 287.9 L254.1 302.9 L259.6 316.1 L265.1 330.2 L270.6 343.1 L276.1 352.1 L281.7 355.5 L287.2 352.1 L292.7 343.5 L298.2 330.8 L303.7 315.0 L309.3 297.5 L314.8 277.7 L320.3 257.7 L325.8 240.9 L331.3 225.9 L336.9 209.5 L342.4 190.0 L347.9 168.1 L353.4 144.4 L358.9 122.6 L364.5 108.1 L370.0 100.0 L375.5 97.9 L381.0 100.8 L386.5 105.8 L392.1 111.9 L397.6 120.4 L403.1 135.1 L408.6 155.8 L414.1 179.7 L419.7 205.9 L425.2 233.8 L430.7 262.3 L436.2 291.6 L441.7 324.4 L447.3 358.2 L452.8 387.3 L458.3 410.3 L463.8 425.3 L469.3 430.4 L474.9 426.0 L480.4 416.9 L485.9 405.9 L491.4 394.3 L496.9 382.7 L502.5 371.2 L508.0 359.3 L513.5 347.1 L519.0 334.6 L524.5 324.4 L530.1 314.2 L535.6 309.2 L541.1 305.2 L546.6 302.9 L552.1 299.7 L557.7 297.1 L563.2 294.5 L568.7 290.9 L574.2 287.0 L579.7 281.1 L585.3 276.8 L590.8 272.1 L596.3 266.9 L601.8 261.3 L607.3 258.8 L612.9 256.5 L618.4 257.5" stroke="#228b22" stroke-width="2" fill="none" stroke-linejoin="round"/><path d="M132.6 257.5 L138.1 225.9 L143.7 224.5 L149.2 223.1 L154.7 221.3 L160.2 219.4 L165.7 217.3 L171.3 215.1 L176.8 213.4 L182.3 212.3 L187.8 211.7 L193.3 212.1 L198.9 213.6 L204.4 216.5 L209.9 220.6 L215.4 225.5 L220.9 231.1 L226.5 237.8 L232.0 245.8 L237.5 255.7 L243.0 268.8 L248.5 283.0 L254.1 294.9 L259.6 305.6 L265.1 317.0 L270.6 327.2 L276.1 334.1 L281.7 336.5 L287.2 333.3 L292.7 326.2 L298.2 315.7 L303.7 302.9 L309.3 288.7 L314.8 272.7 L320.3 256.7 L325.8 243.3 L331.3 231.1 L336.9 217.7 L342.4 201.7 L347.9 183.7 L353.4 164.2 L358.9 146.5 L364.5 134.8 L370.0 128.3 L375.5 126.6 L381.0 128.9 L386.5 132.7 L392.1 137.6 L397.6 144.7 L403.1 157.2 L408.6 174.5 L414.1 194.4 L419.7 216.2 L425.2 239.5 L430.7 263.4 L436.2 288.2 L441.7 316.2 L447.3 344.8 L452.8 369.5 L458.3 388.9 L463.8 401.6 L469.3 405.6 L474.9 401.7 L480.4 394.1 L485.9 384.8 L491.4 375.0 L496.9 365.2 L502.5 355.3 L508.0 345.1 L513.5 334.6 L519.0 324.6 L524.5 316.0 L530.1 307.8 L535.6 303.8 L541.1 300.1 L546.6 299.5 L552.1 296.5 L557.7 293.5 L563.2 290.6 L568.7 287.4 L574.2 283.4 L579.7 279.3 L585.3 274.3 L590.8 270.4 L596.3 265.3 L601.8 261.6 L607.3 257.5 L612.9 256.5 L618.4 257.5" stroke="#ffdab9" stroke-width="2" fill="none" stroke-linejoin="round"/><path d="M132.6 257.5 L138.1 227.8 L143.7 226.4 L149.2 225.1 L154.7 223.4 L160.2 221.6 L165.7 219.6 L171.3 217.6 L176.8 215.9 L182.3 214.9 L187.8 214.4 L193.3 214.7 L198.9 216.1 L204.4 218.8 L209.9 222.7 L215.4 227.2 L220.9 232.5 L226.5 238.8 L232.0 246.4 L237.5 255.7 L243.0 268.0 L248.5 281.4 L254.1 292.6 L259.6 302.7 L265.1 313.4 L270.6 323.1 L276.1 329.7 L281.7 332.0 L287.2 329.1 L292.7 322.4 L298.2 312.6 L303.7 300.5 L309.3 287.2 L314.8 272.1 L320.3 257.0 L325.8 244.4 L331.3 233.1 L336.9 220.9 L342.4 206.7 L347.9 191.1 L353.4 174.7 L358.9 159.2 L364.5 147.5 L370.0 140.0 L375.5 135.4 L381.0 133.8 L386.5 135.2 L392.1 138.1 L397.6 142.1 L403.1 147.9 L408.6 159.5 L414.1 179.0 L419.7 202.9 L425.2 229.0 L430.7 255.6 L436.2 281.5 L441.7 309.5 L447.3 338.0 L452.8 362.1 L458.3 380.9 L463.8 393.1 L469.3 397.1 L474.9 393.5 L480.4 386.3 L485.9 377.6 L491.4 368.4 L496.9 359.1 L502.5 349.9 L508.0 340.2 L513.5 330.4 L519.0 321.2 L524.5 312.9 L530.1 305.1 L535.6 301.2 L541.1 301.0 L546.6 296.6 L552.1 294.8 L557.7 291.8 L563.2 289.9 L568.7 287.1 L574.2 283.2 L579.7 277.6 L585.3 273.3 L590.8 269.6 L596.3 264.9 L601.8 260.7 L607.3 257.9 L612.9 257.0 L618.4 257.5" stroke="#000000" stroke-width="2" fill="none" stroke-linejoin="round"/><path d="M132.6 257.5 L138.1 228.1 L143.7 225.7 L149.2 224.6 L154.7 222.9 L160.2 221.0 L165.7 219.1 L171.3 216.9 L176.8 214.8 L182.3 213.4 L187.8 212.6 L193.3 212.4 L198.9 213.3 L204.4 215.4 L209.9 218.9 L215.4 223.4 L220.9 228.5 L226.5 234.6 L232.0 241.9 L237.5 250.7 L243.0 262.2 L248.5 276.5 L254.1 289.7 L259.6 300.7 L265.1 311.8 L270.6 323.0 L276.1 331.8 L281.7 336.6 L287.2 336.1 L292.7 330.6 L298.2 321.7 L303.7 309.7 L309.3 296.1 L314.8 280.8 L320.3 264.1 L325.8 249.3 L331.3 236.8 L336.9 224.4 L342.4 210.0 L347.9 193.7 L353.4 176.3 L358.9 158.5 L364.5 143.7 L370.0 133.9 L375.5 127.9 L381.0 125.2 L386.5 126.1 L392.1 129.1 L397.6 133.2 L403.1 138.8 L408.6 149.0 L414.1 167.2 L419.7 190.8 L425.2 217.2 L430.7 244.6 L436.2 271.6 L441.7 299.5 L447.3 329.7 L452.8 357.3 L458.3 379.5 L463.8 395.5 L469.3 403.6 L474.9 402.8 L480.4 396.4 L485.9 387.7 L491.4 378.0 L496.9 368.1 L502.5 358.3 L508.0 348.4 L513.5 338.0 L519.0 328.0 L524.5 318.3 L530.1 309.9 L535.6 304.4 L541.1 302.5 L546.6 299.6 L552.1 297.3 L557.7 294.6 L563.2 291.8 L568.7 288.3 L574.2 286.2 L579.7 281.9 L585.3 276.0 L590.8 272.2 L596.3 266.9 L601.8 262.9 L607.3 258.7 L612.9 257.9 L618.4 257.5" stroke="#8b008b" stroke-width="2" fill="none" stroke-linejoin="round"/><path d="M132.6 257.5 L138.1 220.1 L143.7 218.1 L149.2 216.5 L154.7 214.3 L160.2 211.9 L165.7 209.4 L171.3 206.6 L176.8 204.4 L182.3 202.9 L187.8 202.1 L193.3 202.2 L198.9 203.9 L204.4 207.1 L209.9 212.0 L215.4 217.8 L220.9 224.5 L226.5 232.5 L232.0 242.1 L237.5 253.8 L243.0 269.4 L248.5 286.9 L254.1 301.8 L259.6 314.8 L265.1 328.6 L270.6 341.3 L276.1 350.2 L281.7 353.8 L287.2 350.5 L292.7 342.2 L298.2 329.8 L303.7 314.4 L309.3 297.3 L314.8 278.1 L320.3 258.5 L325.8 242.1 L331.3 227.6 L336.9 212.1 L342.4 193.8 L347.9 173.6 L353.4 152.0 L358.9 131.4 L364.5 116.6 L370.0 107.6 L375.5 103.2 L381.0 103.5 L386.5 106.9 L392.1 111.6 L397.6 117.6 L403.1 127.1 L408.6 144.4 L414.1 168.4 L419.7 196.1 L425.2 225.9 L430.7 256.3 L436.2 286.6 L441.7 319.5 L447.3 353.7 L452.8 383.1 L458.3 406.3 L463.8 421.7 L469.3 427.4 L474.9 423.6 L480.4 415.0 L485.9 404.5 L491.4 393.2 L496.9 381.9 L502.5 370.7 L508.0 359.0 L513.5 347.1 L519.0 334.7 L524.5 323.9 L530.1 315.7 L535.6 309.7 L541.1 305.0 L546.6 302.8 L552.1 301.9 L557.7 296.9 L563.2 294.4 L568.7 291.5 L574.2 287.0 L579.7 283.7 L585.3 277.6 L590.8 270.8 L596.3 265.3 L601.8 260.8 L607.3 259.0 L612.9 256.9 L618.4 257.5" stroke="#2f4f4f" stroke-width="2" fill="none" stroke-linejoin="round"/><path d="M132.6 257.5 L138.1 229.2 L143.7 227.4 L149.2 226.3 L154.7 224.6 L160.2 222.8 L165.7 220.9 L171.3 218.8 L176.8 216.9 L182.3 215.6 L187.8 214.8 L193.3 214.7 L198.9 215.7 L204.4 217.9 L209.9 221.4 L215.4 225.7 L220.9 230.7 L226.5 236.7 L232.0 243.9 L237.5 252.7 L243.0 264.4 L248.5 278.3 L254.1 290.7 L259.6 301.2 L265.1 312.2 L270.6 323.0 L276.1 331.1 L281.7 335.1 L287.2 333.7 L292.7 327.9 L298.2 318.6 L303.7 306.5 L309.3 293.0 L314.8 277.6 L320.3 261.3 L325.8 247.1 L331.3 235.1 L336.9 222.6 L342.4 208.3 L347.9 192.4 L353.4 175.9 L358.9 159.4 L364.5 145.6 L370.0 136.2 L375.5 130.0 L381.0 126.4 L386.5 125.9 L392.1 128.1 L397.6 131.8 L403.1 137.0 L408.6 145.9 L414.1 163.8 L419.7 188.8 L425.2 217.0 L430.7 246.1 L436.2 274.1 L441.7 302.9 L447.3 333.3 L452.8 359.9 L458.3 380.8 L463.8 395.2 L469.3 401.4 L474.9 399.1 L480.4 392.0 L485.9 383.0 L491.4 373.2 L496.9 363.4 L502.5 353.7 L508.0 343.8 L513.5 333.7 L519.0 324.1 L524.5 314.6 L530.1 309.0 L535.6 305.2 L541.1 300.3 L546.6 296.5 L552.1 294.8 L557.7 292.9 L563.2 290.7 L568.7 287.1 L574.2 284.5 L579.7 280.7 L585.3 275.2 L590.8 270.2 L596.3 265.7 L601.8 262.3 L607.3 259.1 L612.9 258.1 L618.4 257.5" stroke="#228b22" stroke-width="2" fill="none" stroke-linejoin="round"/><path d="M132.6 257.5 L138.1 223.4 L143.7 220.6 L149.2 219.4 L154.7 217.3 L160.2 215.1 L165.7 212.8 L171.3 210.2 L176.8 207.8 L182.3 206.1 L187.8 205.1 L193.3 204.9 L198.9 205.9 L204.4 208.4 L209.9 212.5 L215.4 217.7 L220.9 223.6 L226.5 230.8 L232.0 239.3 L237.5 249.7 L243.0 263.2 L248.5 279.9 L254.1 295.4 L259.6 308.3 L265.1 321.3 L270.6 334.5 L276.1 344.8 L281.7 350.5 L287.2 349.7 L292.7 343.3 L298.2 332.8 L303.7 318.6 L309.3 302.6 L314.8 284.6 L320.3 265.1 L325.8 247.8 L331.3 233.2 L336.9 218.7 L342.4 202.1 L347.9 183.3 L353.4 163.6 L358.9 143.5 L364.5 126.4 L370.0 114.7 L375.5 107.3 L381.0 103.3 L386.5 103.3 L392.1 106.2 L397.6 110.8 L403.1 117.0 L408.6 127.5 L414.1 147.9 L419.7 176.0 L425.2 207.7 L430.7 240.8 L436.2 272.9 L441.7 305.8 L447.3 341.2 L452.8 373.2 L458.3 398.9 L463.8 417.3 L469.3 426.5 L474.9 425.5 L480.4 417.9 L485.9 407.7 L491.4 396.4 L496.9 384.9 L502.5 373.7 L508.0 362.1 L513.5 350.2 L519.0 337.8 L524.5 326.5 L530.1 316.1 L535.6 310.9 L541.1 307.0 L546.6 303.3 L552.1 300.2 L557.7 297.9 L563.2 294.9 L568.7 291.4 L574.2 287.3 L579.7 283.0 L585.3 277.2 L590.8 273.7 L596.3 267.8 L601.8 263.2 L607.3 260.5 L612.9 256.5 L618.4 257.5" stroke="#000000" stroke-width="2" fill="none" stroke-linejoin="round"/><path d="M132.6 257.5 L138.1 228.3 L143.7 226.8 L149.2 225.5 L154.7 223.7 L160.2 221.9 L165.7 219.8 L171.3 217.7 L176.8 215.9 L182.3 214.8 L187.8 214.1 L193.3 214.3 L198.9 215.6 L204.4 218.2 L209.9 222.0 L215.4 226.5 L220.9 231.8 L226.5 238.2 L232.0 245.8 L237.5 255.3 L243.0 267.8 L248.5 281.7 L254.1 293.5 L259.6 304.0 L265.1 315.1 L270.6 325.3 L276.1 332.3 L281.7 335.0 L287.2 332.1 L292.7 325.4 L298.2 315.2 L303.7 302.8 L309.3 288.9 L314.8 273.2 L320.3 257.3 L325.8 244.1 L331.3 232.2 L336.9 219.0 L342.4 203.4 L347.9 185.9 L353.4 166.8 L358.9 149.4 L364.5 138.0 L370.0 131.6 L375.5 130.1 L381.0 132.6 L386.5 136.6 L392.1 141.5 L397.6 148.7 L403.1 160.9 L408.6 177.5 L414.1 196.6 L419.7 217.4 L425.2 239.5 L430.7 262.2 L436.2 285.6 L441.7 311.9 L447.3 338.9 L452.8 362.1 L458.3 380.3 L463.8 392.2 L469.3 396.1 L474.9 392.4 L480.4 385.1 L485.9 376.3 L491.4 366.9 L496.9 357.5 L502.5 348.3 L508.0 338.7 L513.5 329.0 L519.0 320.0 L524.5 311.4 L530.1 305.7 L535.6 302.4 L541.1 299.9 L546.6 296.7 L552.1 294.7 L557.7 292.2 L563.2 289.8 L568.7 285.8 L574.2 282.6 L579.7 278.6 L585.3 272.9 L590.8 269.4 L596.3 264.3 L601.8 261.4 L607.3 258.7 L612.9 256.3 L618.4 257.5" stroke="#90ee90" stroke-width="2" fill="none" stroke-linejoin="round"/><path d="M132.6 257.5 L138.1 227.1 L143.7 225.6 L149.2 224.3 L154.7 222.4 L160.2 220.5 L165.7 218.5 L171.3 216.3 L176.8 214.5 L182.3 213.4 L187.8 212.7 L193.3 213.0 L198.9 214.4 L204.4 217.2 L209.9 221.2 L215.4 225.9 L220.9 231.4 L226.5 238.0 L232.0 245.9 L237.5 255.8 L243.0 268.9 L248.5 283.1 L254.1 295.0 L259.6 305.8 L265.1 317.2 L270.6 327.6 L276.1 334.7 L281.7 337.1 L287.2 334.0 L292.7 326.9 L298.2 316.3 L303.7 303.4 L309.3 289.0 L314.8 272.8 L320.3 256.6 L325.8 243.0 L331.3 230.8 L336.9 217.1 L342.4 201.0 L347.9 182.8 L353.4 163.2 L358.9 145.5 L364.5 133.8 L370.0 127.2 L375.5 125.5 L381.0 127.9 L386.5 131.9 L392.1 136.9 L397.6 144.0 L403.1 156.5 L408.6 173.9 L414.1 194.0 L419.7 216.0 L425.2 239.3 L430.7 263.2 L436.2 287.9 L441.7 315.6 L447.3 343.7 L452.8 367.8 L458.3 386.7 L463.8 398.8 L469.3 402.4 L474.9 398.3 L480.4 390.6 L485.9 381.3 L491.4 371.5 L496.9 361.8 L502.5 352.1 L508.0 342.1 L513.5 331.8 L519.0 322.2 L524.5 312.9 L530.1 306.3 L535.6 303.1 L541.1 300.2 L546.6 297.3 L552.1 294.3 L557.7 292.7 L563.2 290.0 L568.7 287.5 L574.2 283.4 L579.7 278.0 L585.3 273.3 L590.8 268.7 L596.3 266.1 L601.8 260.7 L607.3 258.8 L612.9 256.6 L618.4 257.5" stroke="#a52a2a" stroke-width="2" fill="none" stroke-linejoin="round"/><path d="M132.6 257.5 L138.1 228.0 L143.7 225.7 L149.2 224.6 L154.7 222.8 L160.2 220.9 L165.7 218.9 L171.3 216.7 L176.8 214.6 L182.3 213.2 L187.8 212.3 L193.3 212.1 L198.9 213.0 L204.4 215.1 L209.9 218.7 L215.4 223.2 L220.9 228.3 L226.5 234.5 L232.0 241.9 L237.5 250.9 L243.0 262.6 L248.5 277.0 L254.1 290.3 L259.6 301.5 L265.1 312.7 L270.6 324.1 L276.1 332.9 L281.7 337.7 L287.2 337.0 L292.7 331.5 L298.2 322.3 L303.7 310.1 L309.3 296.3 L314.8 280.7 L320.3 263.8 L325.8 248.8 L331.3 236.2 L336.9 223.4 L342.4 208.4 L347.9 191.3 L353.4 172.6 L358.9 153.7 L364.5 138.9 L370.0 129.8 L375.5 124.9 L381.0 124.4 L386.5 127.1 L392.1 130.9 L397.6 135.8 L403.1 143.2 L408.6 156.5 L414.1 175.7 L419.7 198.2 L425.2 222.9 L430.7 248.6 L436.2 274.3 L441.7 301.4 L447.3 331.0 L452.8 358.0 L458.3 379.8 L463.8 395.5 L469.3 403.3 L474.9 402.3 L480.4 395.7 L485.9 386.9 L491.4 377.2 L496.9 367.3 L502.5 357.6 L508.0 347.6 L513.5 337.3 L519.0 327.4 L524.5 318.1 L530.1 310.7 L535.6 305.4 L541.1 301.7 L546.6 298.6 L552.1 296.9 L557.7 293.5 L563.2 292.2 L568.7 290.0 L574.2 284.8 L579.7 281.7 L585.3 275.5 L590.8 272.0 L596.3 267.5 L601.8 262.3 L607.3 259.2 L612.9 257.4 L618.4 257.5" stroke="#2f4f4f" stroke-width="2" fill="none" stroke-linejoin="round"/><path d="M132.6 257.5 L138.1 223.8 L143.7 221.0 L149.2 219.8 L154.7 217.8 L160.2 215.7 L165.7 213.5 L171.3 211.0 L176.8 208.8 L182.3 207.2 L187.8 206.3 L193.3 206.1 L198.9 207.2 L204.4 209.6 L209.9 213.7 L215.4 218.8 L220.9 224.6 L226.5 231.5 L232.0 239.8 L237.5 249.7 L243.0 262.6 L248.5 278.6 L254.1 293.4 L259.6 305.7 L265.1 318.0 L270.6 330.5 L276.1 340.2 L281.7 345.7 L287.2 345.0 L292.7 338.9 L298.2 328.9 L303.7 315.6 L309.3 300.4 L314.8 283.5 L320.3 265.1 L325.8 248.6 L331.3 234.8 L336.9 221.1 L342.4 205.4 L347.9 187.5 L353.4 168.4 L358.9 149.0 L364.5 132.6 L370.0 121.6 L375.5 114.7 L381.0 111.3 L386.5 111.8 L392.1 114.8 L397.6 119.2 L403.1 125.1 L408.6 135.7 L414.1 155.5 L419.7 181.8 L425.2 211.3 L430.7 242.2 L436.2 272.5 L441.7 303.8 L447.3 337.7 L452.8 368.8 L458.3 394.0 L463.8 412.2 L469.3 421.7 L474.9 421.2 L480.4 414.2 L485.9 404.6 L491.4 393.8 L496.9 382.8 L502.5 371.9 L508.0 360.8 L513.5 349.2 L519.0 337.1 L524.5 325.2 L530.1 316.7 L535.6 310.4 L541.1 305.9 L546.6 302.6 L552.1 299.9 L557.7 297.9 L563.2 295.2 L568.7 291.4 L574.2 287.4 L579.7 284.3 L585.3 278.7 L590.8 273.4 L596.3 267.1 L601.8 262.8 L607.3 259.2 L612.9 256.9 L618.4 257.5" stroke="#8b0000" stroke-width="2" fill="none" stroke-linejoin="round"/><path d="M132.6 257.5 L138.1 221.2 L143.7 219.6 L149.2 217.9 L154.7 215.8 L160.2 213.5 L165.7 211.0 L171.3 208.5 L176.8 206.4 L182.3 205.0 L187.8 204.3 L193.3 204.7 L198.9 206.4 L204.4 209.7 L209.9 214.5 L215.4 220.1 L220.9 226.7 L226.5 234.5 L232.0 244.0 L237.5 255.6 L243.0 271.1 L248.5 287.9 L254.1 301.9 L259.6 314.6 L265.1 328.0 L270.6 340.1 L276.1 348.3 L281.7 351.1 L287.2 347.2 L292.7 338.8 L298.2 326.3 L303.7 311.1 L309.3 294.2 L314.8 275.2 L320.3 256.3 L325.8 240.5 L331.3 226.4 L336.9 210.8 L342.4 192.8 L347.9 173.0 L353.4 152.3 L358.9 132.7 L364.5 118.5 L370.0 109.6 L375.5 104.5 L381.0 103.5 L386.5 105.9 L392.1 110.0 L397.6 115.5 L403.1 123.6 L408.6 139.5 L414.1 164.1 L419.7 193.5 L425.2 225.2 L430.7 257.3 L436.2 288.8 L441.7 323.0 L447.3 357.4 L452.8 386.4 L458.3 408.9 L463.8 423.2 L469.3 427.4 L474.9 422.6 L480.4 413.6 L485.9 402.8 L491.4 391.4 L496.9 380.0 L502.5 368.7 L508.0 356.9 L513.5 345.0 L519.0 332.7 L524.5 322.6 L530.1 312.7 L535.6 308.1 L541.1 304.6 L546.6 302.4 L552.1 299.8 L557.7 296.9 L563.2 293.0 L568.7 290.5 L574.2 285.1 L579.7 282.1 L585.3 276.6 L590.8 268.7 L596.3 266.1 L601.8 262.5 L607.3 257.5 L612.9 257.5 L618.4 257.5" stroke="#a0522d" stroke-width="2" fill="none" stroke-linejoin="round"/><path d="M132.6 257.5 L138.1 226.7 L143.7 225.1 L149.2 223.7 L154.7 221.8 L160.2 219.8 L165.7 217.7 L171.3 215.4 L176.8 213.6 L182.3 212.3 L187.8 211.7 L193.3 211.9 L198.9 213.3 L204.4 216.0 L209.9 220.1 L215.4 224.9 L220.9 230.5 L226.5 237.2 L232.0 245.3 L237.5 255.2 L243.0 268.4 L248.5 282.9 L254.1 295.0 L259.6 305.9 L265.1 317.3 L270.6 327.8 L276.1 334.9 L281.7 337.4 L287.2 334.4 L292.7 327.2 L298.2 316.7 L303.7 303.8 L309.3 289.5 L314.8 273.5 L320.3 257.3 L325.8 243.9 L331.3 232.0 L336.9 219.0 L342.4 203.9 L347.9 187.2 L353.4 169.4 L358.9 152.8 L364.5 141.1 L370.0 134.1 L375.5 130.7 L381.0 131.3 L386.5 134.2 L392.1 138.2 L397.6 143.3 L403.1 151.4 L408.6 166.0 L414.1 186.0 L419.7 208.8 L425.2 233.3 L430.7 258.1 L436.2 282.7 L441.7 309.7 L447.3 337.2 L452.8 360.6 L458.3 379.0 L463.8 390.9 L469.3 394.8 L474.9 391.3 L480.4 384.1 L485.9 375.5 L491.4 366.3 L496.9 357.2 L502.5 348.1 L508.0 338.7 L513.5 329.1 L519.0 320.2 L524.5 312.9 L530.1 306.7 L535.6 301.3 L541.1 298.9 L546.6 295.1 L552.1 294.5 L557.7 291.7 L563.2 289.3 L568.7 286.2 L574.2 283.0 L579.7 278.9 L585.3 273.5 L590.8 268.7 L596.3 265.9 L601.8 262.0 L607.3 258.3 L612.9 255.9 L618.4 257.5" stroke="#b22222" stroke-width="2" fill="none" stroke-linejoin="round"/><path d="M132.6 257.5 L138.1 227.3 L143.7 225.5 L149.2 224.2 L154.7 222.4 L160.2 220.4 L165.7 218.4 L171.3 216.1 L176.8 214.1 L182.3 212.7 L187.8 211.9 L193.3 211.9 L198.9 213.0 L204.4 215.4 L209.9 219.3 L215.4 223.9 L220.9 229.3 L226.5 235.8 L232.0 243.6 L237.5 253.1 L243.0 265.8 L248.5 280.7 L254.1 293.6 L259.6 304.8 L265.1 316.5 L270.6 327.8 L276.1 336.0 L281.7 339.9 L287.2 338.0 L292.7 331.4 L298.2 321.3 L303.7 308.3 L309.3 293.8 L314.8 277.4 L320.3 260.2 L325.8 245.5 L331.3 232.7 L336.9 219.0 L342.4 202.7 L347.9 184.2 L353.4 164.0 L358.9 144.6 L364.5 131.1 L370.0 123.4 L375.5 120.5 L381.0 122.4 L386.5 126.4 L392.1 131.3 L397.6 137.8 L403.1 149.1 L408.6 165.9 L414.1 186.1 L419.7 208.4 L425.2 232.4 L430.7 257.2 L436.2 282.3 L441.7 310.1 L447.3 339.5 L452.8 365.3 L458.3 385.9 L463.8 400.0 L469.3 405.7 L474.9 402.8 L480.4 395.3 L485.9 386.0 L491.4 375.9 L496.9 365.9 L502.5 356.0 L508.0 345.8 L513.5 335.3 L519.0 325.3 L524.5 316.2 L530.1 308.9 L535.6 303.1 L541.1 302.0 L546.6 298.3 L552.1 296.1 L557.7 293.9 L563.2 290.2 L568.7 288.1 L574.2 284.3 L579.7 279.6 L585.3 275.5 L590.8 270.8 L596.3 266.1 L601.8 262.3 L607.3 258.9 L612.9 256.4 L618.4 257.5" stroke="#4169e1" stroke-width="2" fill="none" stroke-linejoin="round"/><path d="M132.6 257.5 L138.1 227.9 L143.7 225.7 L149.2 224.6 L154.7 222.8 L160.2 220.9 L165.7 219.0 L171.3 216.8 L176.8 214.8 L182.3 213.4 L187.8 212.6 L193.3 212.5 L198.9 213.4 L204.4 215.7 L209.9 219.3 L215.4 223.8 L220.9 228.9 L226.5 235.1 L232.0 242.4 L237.5 251.3 L243.0 262.9 L248.5 277.1 L254.1 290.1 L259.6 300.9 L265.1 311.9 L270.6 323.0 L276.1 331.4 L281.7 335.9 L287.2 335.0 L292.7 329.4 L298.2 320.3 L303.7 308.3 L309.3 294.8 L314.8 279.5 L320.3 263.1 L325.8 248.6 L331.3 236.3 L336.9 223.8 L342.4 209.0 L347.9 192.0 L353.4 173.5 L358.9 154.9 L364.5 140.8 L370.0 132.2 L375.5 128.0 L381.0 128.3 L386.5 131.2 L392.1 135.2 L397.6 140.3 L403.1 148.3 L408.6 162.3 L414.1 181.1 L419.7 202.7 L425.2 226.2 L430.7 250.8 L436.2 275.5 L441.7 302.1 L447.3 331.0 L452.8 357.3 L458.3 378.6 L463.8 393.9 L469.3 401.5 L474.9 400.3 L480.4 393.9 L485.9 385.3 L491.4 375.8 L496.9 366.1 L502.5 356.5 L508.0 346.7 L513.5 336.5 L519.0 326.8 L524.5 317.1 L530.1 310.2 L535.6 304.6 L541.1 301.2 L546.6 298.2 L552.1 297.1 L557.7 294.3 L563.2 291.2 L568.7 288.8 L574.2 284.8 L579.7 281.0 L585.3 275.3 L590.8 271.5 L596.3 267.6 L601.8 262.3 L607.3 258.3 L612.9 258.4 L618.4 257.5" stroke="#bc8f8f" stroke-width="2" fill="none" stroke-linejoin="round"/><path d="M132.6 257.5 L138.1 225.5 L143.7 224.1 L149.2 222.7 L154.7 220.7 L160.2 218.8 L165.7 216.6 L171.3 214.3 L176.8 212.5 L182.3 211.3 L187.8 210.7 L193.3 211.0 L198.9 212.6 L204.4 215.5 L209.9 219.7 L215.4 224.7 L220.9 230.5 L226.5 237.4 L232.0 245.7 L237.5 256.1 L243.0 269.9 L248.5 284.7 L254.1 297.1 L259.6 308.3 L265.1 320.3 L270.6 331.0 L276.1 338.2 L281.7 340.6 L287.2 337.1 L292.7 329.6 L298.2 318.4 L303.7 304.9 L309.3 289.9 L314.8 272.9 L320.3 256.0 L325.8 241.9 L331.3 229.1 L336.9 214.8 L342.4 197.8 L347.9 178.9 L353.4 158.5 L358.9 140.1 L364.5 128.0 L370.0 121.1 L375.5 119.2 L381.0 121.6 L386.5 125.7 L392.1 130.7 L397.6 138.0 L403.1 150.9 L408.6 169.2 L414.1 190.5 L419.7 213.9 L425.2 238.7 L430.7 264.1 L436.2 290.2 L441.7 319.5 L447.3 349.1 L452.8 374.3 L458.3 394.0 L463.8 406.4 L469.3 410.0 L474.9 405.4 L480.4 397.2 L485.9 387.5 L491.4 377.1 L496.9 366.9 L502.5 356.7 L508.0 346.2 L513.5 335.4 L519.0 325.0 L524.5 315.4 L530.1 309.8 L535.6 304.3 L541.1 301.5 L546.6 298.9 L552.1 296.3 L557.7 293.3 L563.2 290.5 L568.7 286.8 L574.2 283.9 L579.7 278.9 L585.3 274.3 L590.8 269.8 L596.3 265.0 L601.8 261.2 L607.3 257.8 L612.9 256.5 L618.4 257.5" stroke="#000000" stroke-width="2" fill="none" stroke-linejoin="round"/><path d="M132.6 257.5 L138.1 228.1 L143.7 226.3 L149.2 225.1 L154.7 223.3 L160.2 221.5 L165.7 219.5 L171.3 217.3 L176.8 215.4 L182.3 214.1 L187.8 213.3 L193.3 213.3 L198.9 214.3 L204.4 216.7 L209.9 220.4 L215.4 224.9 L220.9 230.0 L226.5 236.2 L232.0 243.7 L237.5 252.8 L243.0 264.8 L248.5 279.0 L254.1 291.5 L259.6 302.2 L265.1 313.3 L270.6 324.1 L276.1 332.1 L281.7 336.0 L287.2 334.3 L292.7 328.2 L298.2 318.7 L303.7 306.5 L309.3 292.8 L314.8 277.3 L320.3 261.0 L325.8 247.0 L331.3 235.0 L336.9 222.6 L342.4 208.3 L347.9 192.5 L353.4 176.0 L358.9 159.6 L364.5 146.1 L370.0 137.0 L375.5 131.2 L381.0 128.0 L386.5 128.0 L392.1 130.5 L397.6 134.3 L403.1 139.6 L408.6 148.8 L414.1 166.9 L419.7 191.4 L425.2 218.9 L430.7 247.2 L436.2 274.6 L441.7 302.9 L447.3 332.8 L452.8 359.0 L458.3 379.6 L463.8 393.8 L469.3 400.0 L474.9 397.7 L480.4 390.8 L485.9 382.0 L491.4 372.5 L496.9 362.9 L502.5 353.4 L508.0 343.6 L513.5 333.6 L519.0 324.1 L524.5 315.5 L530.1 307.5 L535.6 303.7 L541.1 301.7 L546.6 297.9 L552.1 296.0 L557.7 292.8 L563.2 290.5 L568.7 288.1 L574.2 284.5 L579.7 279.3 L585.3 275.6 L590.8 270.4 L596.3 266.8 L601.8 261.9 L607.3 257.8 L612.9 256.7 L618.4 257.5" stroke="#8b0000" stroke-width="2" fill="none" stroke-linejoin="round"/><path d="M132.6 257.5 L138.1 223.0 L143.7 220.8 L149.2 219.4 L154.7 217.2 L160.2 215.0 L165.7 212.6 L171.3 209.9 L176.8 207.6 L182.3 206.1 L187.8 205.2 L193.3 205.1 L198.9 206.4 L204.4 209.2 L209.9 213.5 L215.4 218.9 L220.9 225.1 L226.5 232.5 L232.0 241.3 L237.5 252.1 L243.0 266.5 L248.5 283.3 L254.1 298.0 L259.6 310.6 L265.1 323.7 L270.6 336.3 L276.1 345.5 L281.7 349.9 L287.2 347.7 L292.7 340.3 L298.2 329.0 L303.7 314.5 L309.3 298.3 L314.8 280.2 L320.3 261.1 L325.8 244.8 L331.3 230.8 L336.9 216.3 L342.4 199.2 L347.9 180.2 L353.4 160.0 L358.9 140.1 L364.5 125.0 L370.0 115.5 L375.5 110.3 L381.0 109.3 L386.5 111.9 L392.1 116.1 L397.6 121.5 L403.1 129.2 L408.6 143.5 L414.1 165.7 L419.7 192.3 L425.2 221.2 L430.7 250.9 L436.2 280.0 L441.7 311.0 L447.3 343.7 L452.8 372.5 L458.3 395.2 L463.8 410.8 L469.3 417.5 L474.9 414.7 L480.4 406.9 L485.9 397.1 L491.4 386.4 L496.9 375.6 L502.5 365.0 L508.0 354.1 L513.5 342.9 L519.0 331.6 L524.5 321.5 L530.1 312.7 L535.6 306.8 L541.1 303.3 L546.6 301.3 L552.1 297.9 L557.7 295.8 L563.2 292.1 L568.7 290.1 L574.2 286.2 L579.7 282.9 L585.3 275.6 L590.8 270.7 L596.3 266.8 L601.8 262.0 L607.3 259.1 L612.9 257.5 L618.4 257.5" stroke="#bc8f8f" stroke-width="2" fill="none" stroke-linejoin="round"/><path d="M132.6 257.5 L138.1 224.8 L143.7 223.1 L149.2 221.7 L154.7 219.7 L160.2 217.6 L165.7 215.4 L171.3 213.0 L176.8 211.1 L182.3 209.8 L187.8 209.1 L193.3 209.3 L198.9 210.8 L204.4 213.7 L209.9 218.0 L215.4 223.1 L220.9 228.9 L226.5 236.0 L232.0 244.5 L237.5 255.0 L243.0 268.8 L248.5 284.2 L254.1 297.2 L259.6 308.7 L265.1 320.9 L270.6 332.0 L276.1 339.8 L281.7 342.6 L287.2 339.5 L292.7 332.0 L298.2 320.9 L303.7 307.2 L309.3 291.9 L314.8 274.8 L320.3 257.5 L325.8 243.0 L331.3 230.2 L336.9 216.2 L342.4 200.0 L347.9 182.1 L353.4 163.1 L358.9 145.2 L364.5 132.1 L370.0 123.9 L375.5 119.5 L381.0 118.9 L386.5 121.4 L392.1 125.3 L397.6 130.4 L403.1 138.0 L408.6 152.6 L414.1 174.5 L419.7 200.3 L425.2 228.1 L430.7 256.4 L436.2 284.2 L441.7 314.3 L447.3 345.2 L452.8 371.4 L458.3 391.8 L463.8 405.2 L469.3 409.6 L474.9 405.7 L480.4 397.8 L485.9 388.2 L491.4 378.0 L496.9 367.9 L502.5 357.8 L508.0 347.3 L513.5 336.6 L519.0 326.2 L524.5 317.1 L530.1 309.9 L535.6 304.1 L541.1 302.7 L546.6 299.3 L552.1 296.5 L557.7 294.1 L563.2 291.4 L568.7 287.8 L574.2 284.2 L579.7 280.3 L585.3 274.4 L590.8 270.6 L596.3 265.8 L601.8 260.7 L607.3 256.8 L612.9 256.0 L618.4 257.5" stroke="#90ee90" stroke-width="2" fill="none" stroke-linejoin="round"/><path d="M132.6 257.5 L138.1 226.0 L143.7 224.5 L149.2 223.2 L154.7 221.3 L160.2 219.4 L165.7 217.3 L171.3 215.1 L176.8 213.3 L182.3 212.2 L187.8 211.6 L193.3 211.8 L198.9 213.3 L204.4 216.1 L209.9 220.2 L215.4 225.1 L220.9 230.6 L226.5 237.3 L232.0 245.3 L237.5 255.1 L243.0 268.2 L248.5 282.6 L254.1 294.7 L259.6 305.5 L265.1 316.9 L270.6 327.4 L276.1 334.6 L281.7 337.3 L287.2 334.3 L292.7 327.3 L298.2 316.9 L303.7 304.1 L309.3 289.8 L314.8 273.7 L320.3 257.4 L325.8 243.8 L331.3 231.6 L336.9 218.2 L342.4 202.5 L347.9 184.8 L353.4 165.9 L358.9 148.2 L364.5 135.8 L370.0 128.4 L375.5 125.2 L381.0 126.2 L386.5 129.4 L392.1 133.6 L397.6 139.2 L403.1 148.8 L408.6 165.0 L414.1 185.7 L419.7 209.0 L425.2 234.0 L430.7 259.6 L436.2 285.4 L441.7 314.1 L447.3 343.5 L452.8 368.8 L458.3 388.8 L463.8 401.9 L469.3 406.4 L474.9 402.7 L480.4 395.1 L485.9 385.8 L491.4 375.9 L496.9 366.0 L502.5 356.1 L508.0 345.9 L513.5 335.3 L519.0 325.2 L524.5 315.5 L530.1 310.0 L535.6 304.4 L541.1 301.4 L546.6 298.8 L552.1 296.6 L557.7 294.3 L563.2 291.6 L568.7 287.2 L574.2 284.5 L579.7 278.0 L585.3 274.4 L590.8 269.9 L596.3 266.3 L601.8 260.5 L607.3 258.3 L612.9 257.8 L618.4 257.5" stroke="#c71585" stroke-width="2" fill="none" stroke-linejoin="round"/><path d="M132.6 257.5 L138.1 230.6 L143.7 228.5 L149.2 227.4 L154.7 225.7 L160.2 223.9 L165.7 222.0 L171.3 219.8 L176.8 217.9 L182.3 216.5 L187.8 215.6 L193.3 215.4 L198.9 216.2 L204.4 218.2 L209.9 221.5 L215.4 225.6 L220.9 230.5 L226.5 236.3 L232.0 243.3 L237.5 251.7 L243.0 262.9 L248.5 276.6 L254.1 289.0 L259.6 299.5 L265.1 310.1 L270.6 320.8 L276.1 328.9 L281.7 333.2 L287.2 332.3 L292.7 326.8 L298.2 318.0 L303.7 306.3 L309.3 293.2 L314.8 278.5 L320.3 262.6 L325.8 248.7 L331.3 236.9 L336.9 224.8 L342.4 210.4 L347.9 193.9 L353.4 175.8 L358.9 157.8 L364.5 145.0 L370.0 137.6 L375.5 134.9 L381.0 136.5 L386.5 140.2 L392.1 144.8 L397.6 150.6 L403.1 160.1 L408.6 174.5 L414.1 191.9 L419.7 211.2 L425.2 231.9 L430.7 253.6 L436.2 275.4 L441.7 299.2 L447.3 324.9 L452.8 348.2 L458.3 366.9 L463.8 380.2 L469.3 386.4 L474.9 384.9 L480.4 378.8 L485.9 370.8 L491.4 362.1 L496.9 353.3 L502.5 344.7 L508.0 335.9 L513.5 326.8 L519.0 318.9 L524.5 310.7 L530.1 304.8 L535.6 301.3 L541.1 298.0 L546.6 296.3 L552.1 294.2 L557.7 291.0 L563.2 288.4 L568.7 285.8 L574.2 283.0 L579.7 279.2 L585.3 273.7 L590.8 269.5 L596.3 266.6 L601.8 263.0 L607.3 258.9 L612.9 257.0 L618.4 257.5" stroke="#000000" stroke-width="2" fill="none" stroke-linejoin="round"/><path d="M132.6 257.5 L138.1 224.6 L143.7 222.6 L149.2 221.3 L154.7 219.3 L160.2 217.3 L165.7 215.1 L171.3 212.7 L176.8 210.6 L182.3 209.2 L187.8 208.4 L193.3 208.4 L198.9 209.6 L204.4 212.3 L209.9 216.4 L215.4 221.4 L220.9 227.1 L226.5 234.0 L232.0 242.3 L237.5 252.4 L243.0 265.7 L248.5 281.5 L254.1 295.3 L259.6 307.1 L265.1 319.4 L270.6 331.4 L276.1 340.2 L281.7 344.5 L287.2 342.6 L292.7 335.9 L298.2 325.3 L303.7 311.7 L309.3 296.5 L314.8 279.3 L320.3 261.1 L325.8 245.5 L331.3 232.0 L336.9 218.0 L342.4 201.5 L347.9 183.0 L353.4 163.2 L358.9 143.7 L364.5 128.5 L370.0 118.9 L375.5 113.3 L381.0 111.8 L386.5 113.9 L392.1 117.6 L397.6 122.6 L403.1 129.8 L408.6 143.6 L414.1 165.4 L419.7 191.8 L425.2 220.6 L430.7 250.4 L436.2 279.7 L441.7 310.9 L447.3 344.0 L452.8 373.1 L458.3 396.3 L463.8 412.2 L469.3 419.2 L474.9 416.6 L480.4 408.7 L485.9 398.8 L491.4 388.0 L496.9 377.1 L502.5 366.3 L508.0 355.2 L513.5 343.8 L519.0 332.3 L524.5 321.3 L530.1 313.5 L535.6 308.2 L541.1 303.4 L546.6 300.9 L552.1 298.8 L557.7 295.4 L563.2 293.6 L568.7 289.3 L574.2 286.0 L579.7 282.1 L585.3 275.7 L590.8 270.8 L596.3 267.1 L601.8 262.7 L607.3 259.5 L612.9 257.0 L618.4 257.5" stroke="#fff0f5" stroke-width="2" fill="none" stroke-linejoin="round"/><path d="M132.6 257.5 L138.1 222.2 L143.7 220.4 L149.2 218.9 L154.7 216.7 L160.2 214.5 L165.7 212.1 L171.3 209.6 L176.8 207.5 L182.3 206.1 L187.8 205.3 L193.3 205.5 L198.9 207.1 L204.4 210.2 L209.9 214.8 L215.4 220.2 L220.9 226.5 L226.5 234.1 L232.0 243.2 L237.5 254.3 L243.0 269.1 L248.5 285.6 L254.1 299.6 L259.6 312.0 L265.1 325.0 L270.6 337.1 L276.1 345.5 L281.7 348.8 L287.2 345.7 L292.7 337.8 L298.2 325.9 L303.7 311.3 L309.3 295.1 L314.8 276.7 L320.3 258.1 L325.8 242.5 L331.3 228.7 L336.9 213.8 L342.4 196.5 L347.9 177.3 L353.4 157.0 L358.9 137.6 L364.5 123.3 L370.0 114.3 L375.5 109.4 L381.0 108.7 L386.5 111.2 L392.1 115.4 L397.6 120.7 L403.1 128.7 L408.6 144.1 L414.1 167.4 L419.7 195.0 L425.2 224.8 L430.7 255.3 L436.2 285.2 L441.7 317.6 L447.3 350.9 L452.8 379.5 L458.3 401.8 L463.8 416.6 L469.3 421.8 L474.9 417.9 L480.4 409.5 L485.9 399.2 L491.4 388.2 L496.9 377.3 L502.5 366.4 L508.0 355.1 L513.5 343.5 L519.0 331.8 L524.5 321.5 L530.1 313.0 L535.6 307.1 L541.1 303.7 L546.6 300.9 L552.1 299.5 L557.7 296.5 L563.2 293.9 L568.7 289.5 L574.2 285.6 L579.7 281.5 L585.3 276.5 L590.8 271.3 L596.3 265.7 L601.8 262.0 L607.3 258.6 L612.9 257.3 L618.4 257.5" stroke="#000080" stroke-width="2" fill="none" stroke-linejoin="round"/><path d="M132.6 257.5 L138.1 227.8 L143.7 226.3 L149.2 225.0 L154.7 223.3 L160.2 221.4 L165.7 219.4 L171.3 217.3 L176.8 215.6 L182.3 214.5 L187.8 213.9 L193.3 214.2 L198.9 215.6 L204.4 218.2 L209.9 222.1 L215.4 226.7 L220.9 232.0 L226.5 238.4 L232.0 246.0 L237.5 255.5 L243.0 267.9 L248.5 281.6 L254.1 293.1 L259.6 303.4 L265.1 314.2 L270.6 324.1 L276.1 330.9 L281.7 333.4 L287.2 330.5 L292.7 323.7 L298.2 313.7 L303.7 301.5 L309.3 287.9 L314.8 272.6 L320.3 257.2 L325.8 244.4 L331.3 232.9 L336.9 220.4 L342.4 205.8 L347.9 189.8 L353.4 172.7 L358.9 156.7 L364.5 145.0 L370.0 137.8 L375.5 133.8 L381.0 133.4 L386.5 135.7 L392.1 139.1 L397.6 143.6 L403.1 150.6 L408.6 163.9 L414.1 183.6 L419.7 206.8 L425.2 231.8 L430.7 257.1 L436.2 282.2 L441.7 309.5 L447.3 337.4 L452.8 361.1 L458.3 379.6 L463.8 391.6 L469.3 395.6 L474.9 392.0 L480.4 384.9 L485.9 376.2 L491.4 367.0 L496.9 357.8 L502.5 348.7 L508.0 339.1 L513.5 329.4 L519.0 320.4 L524.5 312.2 L530.1 305.8 L535.6 301.6 L541.1 299.8 L546.6 297.1 L552.1 295.3 L557.7 292.7 L563.2 290.1 L568.7 285.3 L574.2 283.1 L579.7 279.1 L585.3 273.6 L590.8 269.2 L596.3 264.1 L601.8 260.8 L607.3 257.9 L612.9 256.9 L618.4 257.5" stroke="#9acd32" stroke-width="2" fill="none" stroke-linejoin="round"/><path d="M132.6 257.5 L138.1 222.2 L143.7 220.2 L149.2 218.8 L154.7 216.6 L160.2 214.4 L165.7 212.1 L171.3 209.5 L176.8 207.2 L182.3 205.7 L187.8 204.9 L193.3 204.9 L198.9 206.2 L204.4 209.1 L209.9 213.6 L215.4 219.0 L220.9 225.2 L226.5 232.6 L232.0 241.6 L237.5 252.6 L243.0 267.2 L248.5 284.1 L254.1 298.9 L259.6 311.7 L265.1 325.0 L270.6 337.9 L276.1 347.3 L281.7 351.7 L287.2 349.3 L292.7 341.9 L298.2 330.3 L303.7 315.5 L309.3 298.9 L314.8 280.1 L320.3 260.5 L325.8 243.7 L331.3 229.2 L336.9 213.8 L342.4 195.8 L347.9 175.6 L353.4 154.1 L358.9 132.9 L364.5 116.8 L370.0 106.7 L375.5 100.9 L381.0 99.6 L386.5 102.1 L392.1 106.3 L397.6 111.8 L403.1 119.9 L408.6 135.4 L414.1 159.4 L419.7 188.1 L425.2 219.4 L430.7 251.5 L436.2 283.1 L441.7 317.0 L447.3 352.5 L452.8 383.6 L458.3 408.1 L463.8 424.8 L469.3 431.6 L474.9 428.3 L480.4 419.6 L485.9 408.8 L491.4 397.0 L496.9 385.3 L502.5 373.7 L508.0 361.7 L513.5 349.4 L519.0 336.6 L524.5 325.1 L530.1 316.1 L535.6 309.4 L541.1 304.6 L546.6 303.1 L552.1 300.1 L557.7 297.6 L563.2 294.3 L568.7 291.5 L574.2 286.8 L579.7 281.4 L585.3 277.1 L590.8 272.0 L596.3 266.9 L601.8 263.3 L607.3 257.8 L612.9 257.8 L618.4 257.5" stroke="#0000ff" stroke-width="2" fill="none" stroke-linejoin="round"/><path d="M132.6 257.5 L138.1 225.9 L143.7 224.2 L149.2 222.9 L154.7 221.0 L160.2 219.0 L165.7 216.9 L171.3 214.7 L176.8 212.8 L182.3 211.5 L187.8 210.8 L193.3 211.0 L198.9 212.3 L204.4 215.0 L209.9 219.1 L215.4 223.9 L220.9 229.5 L226.5 236.2 L232.0 244.3 L237.5 254.1 L243.0 267.2 L248.5 282.0 L254.1 294.7 L259.6 305.8 L265.1 317.5 L270.6 328.5 L276.1 336.3 L281.7 339.6 L287.2 337.1 L292.7 330.2 L298.2 319.8 L303.7 306.7 L309.3 292.2 L314.8 275.7 L320.3 258.9 L325.8 244.6 L331.3 232.2 L336.9 219.0 L342.4 203.8 L347.9 187.1 L353.4 169.9 L358.9 153.0 L364.5 139.6 L370.0 130.5 L375.5 124.6 L381.0 121.3 L386.5 121.2 L392.1 123.7 L397.6 127.7 L403.1 133.3 L408.6 143.2 L414.1 163.0 L419.7 189.7 L425.2 219.4 L430.7 249.8 L436.2 279.1 L441.7 309.8 L447.3 341.6 L452.8 368.8 L458.3 390.0 L463.8 404.1 L469.3 409.4 L474.9 406.2 L480.4 398.5 L485.9 389.0 L491.4 378.9 L496.9 368.7 L502.5 358.6 L508.0 348.1 L513.5 337.4 L519.0 326.9 L524.5 317.5 L530.1 310.5 L535.6 304.4 L541.1 302.6 L546.6 299.3 L552.1 296.4 L557.7 293.5 L563.2 291.4 L568.7 288.4 L574.2 284.1 L579.7 280.0 L585.3 274.8 L590.8 270.9 L596.3 265.9 L601.8 261.9 L607.3 258.1 L612.9 258.2 L618.4 257.5" stroke="#32cd32" stroke-width="2" fill="none" stroke-linejoin="round"/><path d="M132.6 257.5 L138.1 231.1 L143.7 229.4 L149.2 228.5 L154.7 226.9 L160.2 225.3 L165.7 223.6 L171.3 221.7 L176.8 220.1 L182.3 219.0 L187.8 218.4 L193.3 218.5 L198.9 219.5 L204.4 221.6 L209.9 225.0 L215.4 229.0 L220.9 233.5 L226.5 239.0 L232.0 245.6 L237.5 253.5 L243.0 264.0 L248.5 276.4 L254.1 287.2 L259.6 296.4 L265.1 306.0 L270.6 315.3 L276.1 322.1 L281.7 325.4 L287.2 323.9 L292.7 318.5 L298.2 310.3 L303.7 299.6 L309.3 287.8 L314.8 274.4 L320.3 260.3 L325.8 248.2 L331.3 237.8 L336.9 227.0 L342.4 214.5 L347.9 200.6 L353.4 186.1 L358.9 171.7 L364.5 159.9 L370.0 151.9 L375.5 146.8 L381.0 144.0 L386.5 144.1 L392.1 146.2 L397.6 149.4 L403.1 154.0 L408.6 162.3 L414.1 178.3 L419.7 200.0 L425.2 224.2 L430.7 249.1 L436.2 273.3 L441.7 298.7 L447.3 325.4 L452.8 348.8 L458.3 367.4 L463.8 380.3 L469.3 385.9 L474.9 383.9 L480.4 377.9 L485.9 370.1 L491.4 361.6 L496.9 353.0 L502.5 344.5 L508.0 335.7 L513.5 326.6 L519.0 318.5 L524.5 310.9 L530.1 305.4 L535.6 301.2 L541.1 298.2 L546.6 296.6 L552.1 294.4 L557.7 292.4 L563.2 288.7 L568.7 286.5 L574.2 281.3 L579.7 278.1 L585.3 274.8 L590.8 269.0 L596.3 265.6 L601.8 261.2 L607.3 259.5 L612.9 256.4 L618.4 257.5" stroke="#da70d6" stroke-width="2" fill="none" stroke-linejoin="round"/><path d="M132.6 257.5 L138.1 224.2 L143.7 222.3 L149.2 221.0 L154.7 219.1 L160.2 217.0 L165.7 214.9 L171.3 212.5 L176.8 210.4 L182.3 209.1 L187.8 208.3 L193.3 208.4 L198.9 209.7 L204.4 212.4 L209.9 216.6 L215.4 221.6 L220.9 227.4 L226.5 234.4 L232.0 242.7 L237.5 252.9 L243.0 266.5 L248.5 282.2 L254.1 296.0 L259.6 307.9 L265.1 320.3 L270.6 332.3 L276.1 341.1 L281.7 345.2 L287.2 343.1 L292.7 336.2 L298.2 325.4 L303.7 311.7 L309.3 296.2 L314.8 278.7 L320.3 260.4 L325.8 244.6 L331.3 231.0 L336.9 216.5 L342.4 199.5 L347.9 180.5 L353.4 160.2 L358.9 140.2 L364.5 124.8 L370.0 115.0 L375.5 109.3 L381.0 107.8 L386.5 109.9 L392.1 113.7 L397.6 118.7 L403.1 126.1 L408.6 140.6 L414.1 163.3 L419.7 190.7 L425.2 220.7 L430.7 251.5 L436.2 281.9 L441.7 314.4 L447.3 348.7 L452.8 378.6 L458.3 402.3 L463.8 418.5 L469.3 425.1 L474.9 422.1 L480.4 413.8 L485.9 403.4 L491.4 392.1 L496.9 380.7 L502.5 369.6 L508.0 358.0 L513.5 346.1 L519.0 334.0 L524.5 323.2 L530.1 314.0 L535.6 308.1 L541.1 304.5 L546.6 300.9 L552.1 299.5 L557.7 295.2 L563.2 292.9 L568.7 289.6 L574.2 285.8 L579.7 280.2 L585.3 275.1 L590.8 271.9 L596.3 265.5 L601.8 261.5 L607.3 258.5 L612.9 256.9 L618.4 257.5" stroke="#ffb6c1" stroke-width="2" fill="none" stroke-linejoin="round"/><path d="M132.6 257.5 L138.1 228.3 L143.7 226.4 L149.2 225.2 L154.7 223.5 L160.2 221.6 L165.7 219.6 L171.3 217.4 L176.8 215.5 L182.3 214.2 L187.8 213.4 L193.3 213.3 L198.9 214.4 L204.4 216.7 L209.9 220.3 L215.4 224.8 L220.9 230.0 L226.5 236.1 L232.0 243.6 L237.5 252.6 L243.0 264.6 L248.5 278.8 L254.1 291.3 L259.6 302.0 L265.1 313.1 L270.6 324.0 L276.1 332.0 L281.7 335.9 L287.2 334.3 L292.7 328.3 L298.2 318.8 L303.7 306.6 L309.3 292.9 L314.8 277.5 L320.3 261.2 L325.8 247.1 L331.3 235.1 L336.9 222.6 L342.4 208.1 L347.9 192.0 L353.4 174.9 L358.9 157.9 L364.5 144.3 L370.0 135.6 L375.5 130.3 L381.0 128.2 L386.5 129.5 L392.1 132.6 L397.6 136.9 L403.1 142.7 L408.6 153.6 L414.1 172.4 L419.7 196.2 L425.2 222.3 L430.7 249.2 L436.2 275.5 L441.7 303.1 L447.3 332.3 L452.8 358.0 L458.3 378.4 L463.8 392.4 L469.3 398.6 L474.9 396.5 L480.4 389.6 L485.9 381.0 L491.4 371.5 L496.9 362.0 L502.5 352.6 L508.0 342.9 L513.5 333.0 L519.0 323.6 L524.5 314.8 L530.1 307.3 L535.6 304.0 L541.1 300.4 L546.6 297.7 L552.1 295.8 L557.7 293.0 L563.2 290.9 L568.7 287.6 L574.2 284.4 L579.7 279.7 L585.3 275.2 L590.8 271.1 L596.3 266.5 L601.8 255.5 L607.3 252.6 L612.9 250.2 L618.4 257.5" stroke="#9370db" stroke-width="2" fill="none" stroke-linejoin="round"/><path d="M132.6 257.5 L138.1 225.4 L143.7 223.2 L149.2 222.0 L154.7 220.0 L160.2 217.9 L165.7 215.8 L171.3 213.4 L176.8 211.2 L182.3 209.8 L187.8 208.9 L193.3 208.8 L198.9 209.9 L204.4 212.4 L209.9 216.4 L215.4 221.3 L220.9 226.9 L226.5 233.7 L232.0 241.8 L237.5 251.7 L243.0 264.7 L248.5 280.3 L254.1 294.3 L259.6 306.1 L265.1 318.2 L270.6 330.3 L276.1 339.2 L281.7 343.8 L287.2 342.3 L292.7 335.9 L298.2 325.6 L303.7 312.2 L309.3 297.2 L314.8 280.3 L320.3 262.3 L325.8 246.7 L331.3 233.4 L336.9 219.9 L342.4 204.4 L347.9 187.3 L353.4 169.5 L358.9 151.8 L364.5 136.8 L370.0 126.4 L375.5 119.6 L381.0 115.5 L386.5 114.6 L392.1 116.8 L397.6 120.8 L403.1 126.4 L408.6 135.5 L414.1 154.3 L419.7 181.3 L425.2 211.9 L430.7 243.6 L436.2 274.2 L441.7 305.4 L447.3 338.5 L452.8 367.7 L458.3 390.8 L463.8 406.9 L469.3 414.2 L474.9 412.1 L480.4 404.6 L485.9 395.1 L491.4 384.6 L496.9 374.0 L502.5 363.5 L508.0 352.8 L513.5 341.8 L519.0 330.8 L524.5 320.5 L530.1 312.7 L535.6 306.9 L541.1 303.2 L546.6 299.9 L552.1 298.4 L557.7 296.7 L563.2 291.1 L568.7 289.8 L574.2 284.8 L579.7 281.9 L585.3 276.2 L590.8 271.6 L596.3 267.8 L601.8 262.6 L607.3 259.5 L612.9 257.9 L618.4 257.5" stroke="#800080" stroke-width="2" fill="none" stroke-linejoin="round"/><path d="M132.6 257.5 L138.1 227.9 L143.7 225.8 L149.2 224.7 L154.7 222.8 L160.2 220.9 L165.7 218.9 L171.3 216.7 L176.8 214.7 L182.3 213.3 L187.8 212.4 L193.3 212.3 L198.9 213.3 L204.4 215.6 L209.9 219.3 L215.4 223.8 L220.9 229.1 L226.5 235.3 L232.0 242.9 L237.5 252.0 L243.0 264.1 L248.5 278.6 L254.1 291.6 L259.6 302.6 L265.1 313.9 L270.6 325.1 L276.1 333.5 L281.7 337.8 L287.2 336.4 L292.7 330.4 L298.2 320.9 L303.7 308.4 L309.3 294.5 L314.8 278.7 L320.3 261.9 L325.8 247.3 L331.3 234.8 L336.9 221.7 L342.4 206.2 L347.9 188.4 L353.4 168.9 L358.9 149.7 L364.5 136.0 L370.0 128.2 L375.5 125.2 L381.0 126.9 L386.5 130.6 L392.1 135.3 L397.6 141.5 L403.1 152.0 L408.6 167.8 L414.1 186.8 L419.7 208.0 L425.2 230.9 L430.7 254.7 L436.2 278.8 L441.7 305.3 L447.3 333.9 L452.8 359.5 L458.3 380.2 L463.8 394.7 L469.3 401.3 L474.9 399.4 L480.4 392.6 L485.9 383.7 L491.4 374.1 L496.9 364.3 L502.5 354.8 L508.0 344.9 L513.5 334.8 L519.0 325.2 L524.5 317.7 L530.1 309.1 L535.6 303.6 L541.1 300.7 L546.6 297.2 L552.1 297.0 L557.7 293.3 L563.2 290.8 L568.7 287.5 L574.2 285.3 L579.7 280.9 L585.3 275.5 L590.8 270.8 L596.3 267.6 L601.8 262.2 L607.3 259.1 L612.9 256.7 L618.4 257.5" stroke="#ff69b4" stroke-width="2" fill="none" stroke-linejoin="round"/><path d="M132.6 257.5 L138.1 221.1 L143.7 219.1 L149.2 217.6 L154.7 215.5 L160.2 213.3 L165.7 210.9 L171.3 208.3 L176.8 206.1 L182.3 204.6 L187.8 203.8 L193.3 203.9 L198.9 205.4 L204.4 208.4 L209.9 213.0 L215.4 218.5 L220.9 224.9 L226.5 232.5 L232.0 241.6 L237.5 252.8 L243.0 267.5 L248.5 284.6 L254.1 299.4 L259.6 312.2 L265.1 325.6 L270.6 338.5 L276.1 347.7 L281.7 351.9 L287.2 349.5 L292.7 341.9 L298.2 330.1 L303.7 315.2 L309.3 298.6 L314.8 279.8 L320.3 260.2 L325.8 243.4 L331.3 228.8 L336.9 213.2 L342.4 194.8 L347.9 174.0 L353.4 151.6 L358.9 129.7 L364.5 113.9 L370.0 104.2 L375.5 99.5 L381.0 99.9 L386.5 103.4 L392.1 108.2 L397.6 114.3 L403.1 124.5 L408.6 142.6 L414.1 166.7 L419.7 194.3 L425.2 224.2 L430.7 255.0 L436.2 285.8 L441.7 319.5 L447.3 355.1 L452.8 386.3 L458.3 411.1 L463.8 428.0 L469.3 435.0 L474.9 431.7 L480.4 422.9 L485.9 412.0 L491.4 400.1 L496.9 388.2 L502.5 376.5 L508.0 364.3 L513.5 351.7 L519.0 338.5 L524.5 328.2 L530.1 317.3 L535.6 310.7 L541.1 306.4 L546.6 304.2 L552.1 301.7 L557.7 298.5 L563.2 295.6 L568.7 291.0 L574.2 288.1 L579.7 282.5 L585.3 276.9 L590.8 272.3 L596.3 266.8 L601.8 262.2 L607.3 259.9 L612.9 256.8 L618.4 257.5" stroke="#8b0000" stroke-width="2" fill="none" stroke-linejoin="round"/><path d="M132.6 257.5 L138.1 231.1 L143.7 229.4 L149.2 228.4 L154.7 226.8 L160.2 225.1 L165.7 223.3 L171.3 221.3 L176.8 219.5 L182.3 218.3 L187.8 217.6 L193.3 217.5 L198.9 218.5 L204.4 220.5 L209.9 223.8 L215.4 227.9 L220.9 232.6 L226.5 238.2 L232.0 245.0 L237.5 253.2 L243.0 264.2 L248.5 277.1 L254.1 288.5 L259.6 298.4 L265.1 308.5 L270.6 318.5 L276.1 325.9 L281.7 329.5 L287.2 328.0 L292.7 322.5 L298.2 313.8 L303.7 302.5 L309.3 289.9 L314.8 275.7 L320.3 260.7 L325.8 247.7 L331.3 236.6 L336.9 225.0 L342.4 211.5 L347.9 196.4 L353.4 180.4 L358.9 164.6 L364.5 152.1 L370.0 144.0 L375.5 139.2 L381.0 137.5 L386.5 138.9 L392.1 141.9 L397.6 145.9 L403.1 151.4 L408.6 161.9 L414.1 179.6 L419.7 201.6 L425.2 225.7 L430.7 250.5 L436.2 274.7 L441.7 300.3 L447.3 327.2 L452.8 350.9 L458.3 369.5 L463.8 382.4 L469.3 387.9 L474.9 385.7 L480.4 379.3 L485.9 371.1 L491.4 365.5 L496.9 359.4 L502.5 352.8 L508.0 345.5 L513.5 337.3 L519.0 328.7 L524.5 318.9 L530.1 310.3 L535.6 305.7 L541.1 300.9 L546.6 299.4 L552.1 296.8 L557.7 294.8 L563.2 291.3 L568.7 289.0 L574.2 286.1 L579.7 280.4 L585.3 276.5 L590.8 270.1 L596.3 266.0 L601.8 262.3 L607.3 258.5 L612.9 258.7 L618.4 257.5" stroke="#00e5ee" stroke-width="2" fill="none" stroke-linejoin="round"/><path d="M132.6 257.5 L138.1 220.2 L143.7 217.9 L149.2 216.4 L154.7 214.1 L160.2 211.7 L165.7 209.2 L171.3 206.4 L176.8 204.0 L182.3 202.3 L187.8 201.4 L193.3 201.3 L198.9 202.7 L204.4 205.7 L209.9 210.4 L215.4 216.2 L220.9 222.8 L226.5 230.7 L232.0 240.3 L237.5 252.0 L243.0 267.5 L248.5 285.6 L254.1 301.5 L259.6 315.1 L265.1 329.4 L270.6 343.1 L276.1 353.2 L281.7 357.9 L287.2 355.5 L292.7 347.6 L298.2 335.3 L303.7 319.5 L309.3 301.9 L314.8 282.0 L320.3 261.2 L325.8 243.4 L331.3 228.1 L336.9 212.1 L342.4 193.8 L347.9 173.6 L353.4 152.6 L358.9 131.8 L364.5 114.9 L370.0 103.5 L375.5 96.2 L381.0 92.3 L386.5 92.2 L392.1 95.4 L397.6 100.4 L403.1 107.2 L408.6 119.1 L414.1 142.3 L419.7 173.9 L425.2 209.2 L430.7 245.4 L436.2 280.3 L441.7 316.5 L447.3 354.4 L452.8 387.4 L458.3 413.2 L463.8 430.7 L469.3 438.0 L474.9 434.7 L480.4 425.7 L485.9 414.5 L491.4 402.3 L496.9 390.1 L502.5 378.1 L508.0 365.7 L513.5 353.0 L519.0 339.6 L524.5 326.4 L530.1 317.2 L535.6 311.3 L541.1 306.1 L546.6 303.2 L552.1 301.2 L557.7 299.0 L563.2 295.3 L568.7 292.7 L574.2 288.2 L579.7 282.1 L585.3 277.6 L590.8 273.0 L596.3 267.3 L601.8 262.8 L607.3 259.6 L612.9 257.0 L618.4 257.5" stroke="#000000" stroke-width="2" fill="none" stroke-linejoin="round"/><path d="M132.6 257.5 L138.1 221.3 L143.7 218.7 L149.2 217.4 L154.7 215.3 L160.2 213.0 L165.7 210.7 L171.3 208.0 L176.8 205.7 L182.3 204.1 L187.8 203.2 L193.3 203.1 L198.9 204.3 L204.4 207.1 L209.9 211.5 L215.4 217.0 L220.9 223.2 L226.5 230.7 L232.0 239.6 L237.5 250.4 L243.0 264.6 L248.5 281.8 L254.1 297.4 L259.6 310.5 L265.1 323.8 L270.6 337.2 L276.1 347.3 L281.7 352.7 L287.2 351.4 L292.7 344.6 L298.2 333.5 L303.7 318.8 L309.3 302.3 L314.8 283.7 L320.3 263.7 L325.8 246.0 L331.3 231.0 L336.9 215.4 L342.4 197.0 L347.9 175.7 L353.4 152.3 L358.9 128.9 L364.5 111.7 L370.0 101.4 L375.5 96.8 L381.0 97.9 L386.5 101.8 L392.1 107.0 L397.6 113.7 L403.1 125.1 L408.6 143.6 L414.1 166.8 L419.7 193.1 L425.2 221.7 L430.7 251.7 L436.2 282.0 L441.7 315.1 L447.3 351.2 L452.8 383.9 L458.3 410.4 L463.8 429.3 L469.3 438.4 L474.9 436.7 L480.4 428.5 L485.9 417.6 L491.4 405.6 L496.9 393.4 L502.5 381.4 L508.0 369.1 L513.5 356.2 L519.0 342.5 L524.5 329.5 L530.1 318.5 L535.6 311.2 L541.1 308.2 L546.6 305.6 L552.1 301.0 L557.7 298.7 L563.2 295.5 L568.7 292.6 L574.2 289.0 L579.7 283.3 L585.3 277.8 L590.8 272.4 L596.3 268.8 L601.8 262.8 L607.3 259.7 L612.9 257.3 L618.4 257.5" stroke="#ff0000" stroke-width="2" fill="none" stroke-linejoin="round"/><path d="M132.6 257.5 L138.1 230.0 L143.7 228.0 L149.2 227.0 L154.7 225.3 L160.2 223.6 L165.7 221.8 L171.3 219.8 L176.8 218.0 L182.3 216.7 L187.8 216.0 L193.3 215.8 L198.9 216.7 L204.4 218.8 L209.9 222.1 L215.4 226.3 L220.9 231.1 L226.5 236.8 L232.0 243.6 L237.5 251.8 L243.0 262.7 L248.5 275.9 L254.1 287.9 L259.6 298.0 L265.1 308.3 L270.6 318.6 L276.1 326.5 L281.7 330.8 L287.2 329.9 L292.7 324.7 L298.2 316.2 L303.7 305.0 L309.3 292.3 L314.8 278.0 L320.3 262.6 L325.8 248.9 L331.3 237.3 L336.9 225.4 L342.4 211.1 L347.9 194.6 L353.4 176.5 L358.9 158.3 L364.5 145.1 L370.0 137.3 L375.5 134.1 L381.0 135.3 L386.5 138.6 L392.1 142.8 L397.6 148.3 L403.1 157.7 L408.6 172.1 L414.1 189.7 L419.7 209.4 L425.2 230.8 L430.7 253.3 L436.2 276.1 L441.7 301.1 L447.3 328.4 L452.8 353.3 L458.3 373.5 L463.8 387.9 L469.3 395.0 L474.9 393.8 L480.4 387.6 L485.9 379.3 L491.4 370.1 L496.9 360.8 L502.5 351.7 L508.0 342.3 L513.5 332.5 L519.0 323.5 L524.5 314.6 L530.1 307.6 L535.6 302.5 L541.1 299.4 L546.6 297.3 L552.1 295.1 L557.7 292.5 L563.2 291.0 L568.7 287.5 L574.2 285.0 L579.7 280.3 L585.3 276.7 L590.8 271.1 L596.3 266.2 L601.8 262.3 L607.3 258.8 L612.9 257.0 L618.4 257.5" stroke="#8b4513" stroke-width="2" fill="none" stroke-linejoin="round"/><path d="M132.6 257.5 L138.1 219.3 L143.7 217.1 L149.2 215.5 L154.7 213.1 L160.2 210.6 L165.7 208.0 L171.3 205.1 L176.8 202.6 L182.3 201.0 L187.8 200.0 L193.3 200.0 L198.9 201.5 L204.4 204.6 L209.9 209.5 L215.4 215.4 L220.9 222.2 L226.5 230.5 L232.0 240.3 L237.5 252.4 L243.0 268.5 L248.5 287.1 L254.1 303.2 L259.6 317.2 L265.1 331.8 L270.6 345.8 L276.1 355.8 L281.7 360.4 L287.2 357.6 L292.7 349.3 L298.2 336.4 L303.7 320.2 L309.3 302.0 L314.8 281.6 L320.3 260.3 L325.8 242.2 L331.3 226.5 L336.9 209.9 L342.4 190.4 L347.9 168.6 L353.4 145.4 L358.9 122.8 L364.5 106.0 L370.0 95.6 L375.5 90.0 L381.0 89.5 L386.5 92.7 L392.1 97.6 L397.6 103.9 L403.1 113.2 L408.6 130.6 L414.1 156.3 L419.7 186.5 L425.2 219.2 L430.7 252.6 L436.2 285.6 L441.7 321.0 L447.3 358.1 L452.8 390.3 L458.3 415.6 L463.8 432.8 L469.3 439.6 L474.9 435.8 L480.4 426.6 L485.9 415.2 L491.4 402.9 L496.9 390.6 L502.5 378.5 L508.0 366.0 L513.5 353.2 L519.0 339.6 L524.5 327.1 L530.1 317.5 L535.6 311.8 L541.1 307.2 L546.6 303.7 L552.1 303.0 L557.7 299.4 L563.2 295.3 L568.7 291.8 L574.2 288.6 L579.7 282.4 L585.3 276.1 L590.8 272.1 L596.3 267.2 L601.8 262.5 L607.3 259.5 L612.9 256.6 L618.4 257.5" stroke="#ffdab9" stroke-width="2" fill="none" stroke-linejoin="round"/><path d="M132.6 257.5 L138.1 222.0 L143.7 219.8 L149.2 218.4 L154.7 216.3 L160.2 214.1 L165.7 211.7 L171.3 209.1 L176.8 206.9 L182.3 205.4 L187.8 204.6 L193.3 204.6 L198.9 206.0 L204.4 208.9 L209.9 213.4 L215.4 218.8 L220.9 225.0 L226.5 232.5 L232.0 241.4 L237.5 252.2 L243.0 266.6 L248.5 283.3 L254.1 298.0 L259.6 310.5 L265.1 323.5 L270.6 336.1 L276.1 345.2 L281.7 349.5 L287.2 347.3 L292.7 340.0 L298.2 328.7 L303.7 314.2 L309.3 298.1 L314.8 280.0 L320.3 260.9 L325.8 244.6 L331.3 230.5 L336.9 215.5 L342.4 197.8 L347.9 177.8 L353.4 155.9 L358.9 134.7 L364.5 119.5 L370.0 110.6 L375.5 106.7 L381.0 108.0 L386.5 111.8 L392.1 116.8 L397.6 123.3 L403.1 134.2 L408.6 152.0 L414.1 174.4 L419.7 199.7 L425.2 227.0 L430.7 255.3 L436.2 283.8 L441.7 315.1 L447.3 348.5 L452.8 378.1 L458.3 401.8 L463.8 418.2 L469.3 425.4 L474.9 422.7 L480.4 414.6 L485.9 404.4 L491.4 393.3 L496.9 382.1 L502.5 371.0 L508.0 359.5 L513.5 347.7 L519.0 335.4 L524.5 324.1 L530.1 315.0 L535.6 309.3 L541.1 305.0 L546.6 303.2 L552.1 300.4 L557.7 297.8 L563.2 294.3 L568.7 291.0 L574.2 287.2 L579.7 282.1 L585.3 277.1 L590.8 271.1 L596.3 267.6 L601.8 262.1 L607.3 259.4 L612.9 257.4 L618.4 257.5" stroke="#ff8c00" stroke-width="2" fill="none" stroke-linejoin="round"/><path d="M132.6 257.5 L138.1 226.2 L143.7 224.3 L149.2 223.1 L154.7 221.2 L160.2 219.3 L165.7 217.2 L171.3 214.9 L176.8 212.9 L182.3 211.6 L187.8 210.9 L193.3 210.9 L198.9 212.2 L204.4 214.8 L209.9 218.7 L215.4 223.5 L220.9 229.0 L226.5 235.6 L232.0 243.6 L237.5 253.2 L243.0 266.0 L248.5 280.9 L254.1 293.9 L259.6 305.0 L265.1 316.7 L270.6 327.9 L276.1 336.1 L281.7 339.8 L287.2 337.7 L292.7 331.1 L298.2 320.9 L303.7 308.0 L309.3 293.5 L314.8 277.2 L320.3 260.1 L325.8 245.5 L331.3 232.9 L336.9 219.5 L342.4 203.9 L347.9 186.5 L353.4 168.0 L358.9 149.8 L364.5 135.8 L370.0 127.0 L375.5 121.9 L381.0 120.6 L386.5 122.6 L392.1 126.2 L397.6 130.9 L403.1 137.7 L408.6 150.8 L414.1 171.6 L419.7 196.6 L425.2 224.0 L430.7 252.0 L436.2 279.6 L441.7 309.1 L447.3 340.2 L452.8 367.3 L458.3 388.7 L463.8 403.3 L469.3 409.3 L474.9 406.5 L480.4 399.1 L485.9 389.7 L491.4 379.5 L496.9 369.3 L502.5 359.2 L508.0 348.8 L513.5 338.1 L519.0 327.6 L524.5 318.6 L530.1 310.0 L535.6 305.8 L541.1 301.8 L546.6 299.0 L552.1 297.8 L557.7 302.3 L563.2 294.2 L568.7 285.6 L574.2 277.1 L579.7 269.7 L585.3 264.0 L590.8 262.8 L596.3 253.4 L601.8 243.2 L607.3 249.3 L612.9 249.3 L618.4 257.5" stroke="#008000" stroke-width="2" fill="none" stroke-linejoin="round"/><path d="M132.6 257.5 L138.1 222.9 L143.7 220.4 L149.2 219.0 L154.7 216.8 L160.2 214.5 L165.7 212.1 L171.3 209.3 L176.8 206.9 L182.3 205.2 L187.8 204.1 L193.3 203.8 L198.9 204.9 L204.4 207.5 L209.9 211.8 L215.4 217.2 L220.9 223.3 L226.5 230.8 L232.0 239.7 L237.5 250.6 L243.0 265.0 L248.5 282.4 L254.1 298.2 L259.6 311.5 L265.1 325.1 L270.6 338.7 L276.1 349.0 L281.7 354.4 L287.2 353.0 L292.7 345.9 L298.2 334.5 L303.7 319.6 L309.3 302.7 L314.8 283.8 L320.3 263.5 L325.8 245.8 L331.3 230.9 L336.9 215.7 L342.4 198.3 L347.9 179.0 L353.4 158.7 L358.9 138.5 L364.5 121.6 L370.0 110.1 L375.5 102.8 L381.0 98.8 L386.5 98.6 L392.1 101.7 L397.6 106.6 L403.1 113.1 L408.6 124.0 L414.1 145.4 L419.7 175.0 L425.2 208.2 L430.7 242.5 L436.2 275.5 L441.7 309.3 L447.3 345.2 L452.8 376.9 L458.3 402.0 L463.8 419.5 L469.3 427.4 L474.9 425.2 L480.4 417.0 L485.9 406.4 L491.4 394.9 L496.9 383.3 L502.5 371.9 L508.0 360.3 L513.5 348.3 L519.0 336.0 L524.5 324.9 L530.1 315.2 L535.6 308.0 L541.1 310.1 L546.6 312.1 L552.1 303.1 L557.7 296.4 L563.2 293.6 L568.7 291.0 L574.2 286.7 L579.7 281.6 L585.3 277.2 L590.8 271.5 L596.3 266.7 L601.8 261.8 L607.3 259.4 L612.9 256.8 L618.4 257.5" stroke="#dc143c" stroke-width="2" fill="none" stroke-linejoin="round"/><path d="M132.6 257.5 L138.1 223.6 L143.7 221.6 L149.2 220.2 L154.7 218.2 L160.2 216.1 L165.7 213.8 L171.3 211.4 L176.8 209.3 L182.3 207.9 L187.8 207.1 L193.3 207.1 L198.9 208.5 L204.4 211.3 L209.9 215.6 L215.4 220.8 L220.9 226.7 L226.5 233.9 L232.0 242.4 L237.5 252.9 L243.0 266.7 L248.5 282.8 L254.1 296.8 L259.6 308.8 L265.1 321.4 L270.6 333.5 L276.1 342.2 L281.7 346.2 L287.2 343.9 L292.7 336.8 L298.2 325.8 L303.7 311.9 L309.3 296.3 L314.8 278.7 L320.3 260.3 L325.8 244.6 L331.3 231.0 L336.9 216.6 L342.4 199.8 L347.9 181.0 L353.4 161.0 L358.9 141.3 L364.5 126.3 L370.0 116.9 L375.5 111.5 L381.0 110.2 L386.5 112.5 L392.1 116.4 L397.6 121.5 L403.1 129.0 L408.6 143.3 L414.1 165.7 L419.7 192.5 L425.2 221.8 L430.7 251.9 L436.2 281.5 L441.7 313.2 L447.3 346.7 L452.8 375.8 L458.3 398.9 L463.8 414.7 L469.3 421.2 L474.9 418.3 L480.4 410.2 L485.9 400.1 L491.4 389.2 L496.9 378.2 L502.5 367.3 L508.0 356.1 L513.5 344.5 L519.0 332.8 L524.5 323.5 L530.1 313.7 L535.6 308.5 L541.1 304.2 L546.6 300.7 L552.1 298.9 L557.7 296.3 L563.2 292.6 L568.7 290.6 L574.2 286.8 L579.7 280.9 L585.3 276.0 L590.8 271.8 L596.3 274.6 L601.8 267.7 L607.3 264.4 L612.9 259.5 L618.4 257.5" stroke="#ffa500" stroke-width="2" fill="none" stroke-linejoin="round"/><path d="M132.6 257.5 L138.1 231.8 L143.7 230.3 L149.2 229.3 L154.7 227.7 L160.2 226.1 L165.7 224.3 L171.3 222.4 L176.8 220.8 L182.3 219.7 L187.8 219.1 L193.3 219.1 L198.9 220.1 L204.4 222.2 L209.9 225.5 L215.4 229.4 L220.9 233.9 L226.5 239.4 L232.0 246.0 L237.5 254.0 L243.0 264.6 L248.5 276.9 L254.1 287.6 L259.6 296.9 L265.1 306.6 L270.6 315.9 L276.1 322.6 L281.7 325.7 L287.2 324.0 L292.7 318.5 L298.2 310.1 L303.7 299.3 L309.3 287.3 L314.8 273.8 L320.3 259.7 L325.8 247.7 L331.3 237.3 L336.9 226.5 L342.4 214.1 L347.9 200.4 L353.4 186.3 L358.9 172.4 L364.5 161.0 L370.0 153.2 L375.5 148.2 L381.0 145.3 L386.5 145.0 L392.1 146.9 L397.6 150.2 L403.1 154.7 L408.6 162.4 L414.1 178.1 L419.7 199.8 L425.2 224.2 L430.7 249.2 L436.2 273.3 L441.7 298.2 L447.3 324.3 L452.8 346.8 L458.3 364.4 L463.8 376.4 L469.3 381.2 L474.9 378.9 L480.4 372.8 L485.9 365.1 L491.4 360.8 L496.9 355.8 L502.5 350.3 L508.0 343.8 L513.5 336.3 L519.0 328.3 L524.5 318.6 L530.1 310.2 L535.6 304.6 L541.1 301.6 L546.6 299.5 L552.1 296.1 L557.7 294.5 L563.2 292.3 L568.7 288.2 L574.2 285.5 L579.7 281.2 L585.3 275.2 L590.8 270.2 L596.3 266.6 L601.8 262.7 L607.3 258.7 L612.9 256.6 L618.4 257.5" stroke="#7b7bc4" stroke-width="2" fill="none" stroke-linejoin="round"/><path d="M99.5 257.5H132.6M618.4 257.5H651.5" stroke="#7b75bb" stroke-width="2.8" fill="none"/><rect x="93.5" y="81.5" width="564" height="364" fill="none" stroke="#000" stroke-width="1" shape-rendering="crispEdges"/><path d="M99.5 446v7 M127.5 446v4 M154.5 446v4 M182.5 446v4 M209.5 446v4 M237.5 446v7 M265.5 446v4 M292.5 446v4 M320.5 446v4 M347.5 446v4 M375.5 446v7 M403.5 446v4 M430.5 446v4 M458.5 446v4 M485.5 446v4 M513.5 446v7 M541.5 446v4 M568.5 446v4 M596.5 446v4 M623.5 446v4 M651.5 446v7 M93 440.5h-4 M93 420.5h-7 M93 399.5h-4 M93 379.5h-4 M93 359.5h-4 M93 339.5h-7 M93 318.5h-4 M93 298.5h-4 M93 277.5h-4 M93 257.5h-7 M93 236.5h-4 M93 216.5h-4 M93 196.5h-4 M93 175.5h-7 M93 155.5h-4 M93 135.5h-4 M93 114.5h-4 M93 94.5h-7" stroke="#000" stroke-width="1" fill="none" shape-rendering="crispEdges"/><g font-family="Liberation Sans" font-size="12" fill="#222"><text x="81.5" y="99.1" text-anchor="end">0,004</text><text x="81.5" y="180.6" text-anchor="end">0,002</text><text x="81.5" y="262.1" text-anchor="end">0</text><text x="81.5" y="343.6" text-anchor="end">-0,002</text><text x="81.5" y="425.1" text-anchor="end">-0,004</text><text x="99.5" y="469.5" text-anchor="middle">850</text><text x="237.5" y="469.5" text-anchor="middle">900</text><text x="375.5" y="469.5" text-anchor="middle">950</text><text x="513.5" y="469.5" text-anchor="middle">1000</text><text x="651.5" y="469.5" text-anchor="middle">1050</text><text x="375.5" y="487.8" text-anchor="middle" font-size="13">Wavelength / nm</text><text transform="translate(43.8 263) rotate(-90)" text-anchor="middle" font-size="12.5">Spectral value / arb. u.</text></g></svg>
<div class="b" style="left:11px;top:534px;width:13px;height:13px;background:#ffffff;border:1px solid #333333;"></div>
<div class="t" style="left:29.3px;top:534.0px;color:#000;font-size:12px;transform:scaleX(0.875);transform-origin:0 0;">Overlay regression coefficients</div>
<div class="t" style="left:703.4px;top:40.0px;color:#000;font-size:12px;transform:scaleX(0.855);transform-origin:0 0;">Model</div>
<div class="b" style="left:742px;top:37px;width:113px;height:20px;background:#f0f0f0;border:1px solid #8c8c8c;"></div>
<div class="t" style="left:746px;top:40.0px;color:#000;font-size:12px;transform:scaleX(0.855);transform-origin:0 0;">PLSR</div>
<div class="t" style="left:863.6px;top:40.0px;color:#000;font-size:12px;transform:scaleX(0.855);transform-origin:0 0;">Component</div>
<div class="b" style="left:928px;top:37px;width:114px;height:20px;background:#ffffff;border:1px solid #a0a0a0;"></div>
<div class="t" style="left:929.8px;top:39.0px;color:#40b040;font-size:12px;transform:scaleX(0.855);transform-origin:0 0;">3</div>
<svg width="14" height="19" style="left:1026px;top:37.5px">
<rect x="0.5" y="0.5" width="13" height="9" fill="#e9e9e9" stroke="#b4b4b4"/>
<rect x="0.5" y="9.5" width="13" height="9" fill="#e9e9e9" stroke="#b4b4b4"/>
<path d="M3.5 6.5 L7 3 L10.5 6.5 Z" fill="#111"/>
<path d="M3.5 11.5 L7 15 L10.5 11.5 Z" fill="#111"/>
</svg>
<div class="b" style="left:697px;top:72px;width:348px;height:38px;background:transparent;border:1px solid #dcdcdc;"></div>
<div class="b" style="left:704px;top:64px;width:84px;height:10px;background:#f0f0f0;"></div>
<div class="t" style="left:706px;top:65.5px;color:#000;font-size:12px;transform:scaleX(0.855);transform-origin:0 0;">Reference range</div>
<div class="t" style="left:706.5px;top:88.2px;color:#000;font-size:12px;transform:scaleX(0.855);transform-origin:0 0;">Lower limit</div>
<div class="b" style="left:765px;top:85px;width:103px;height:20px;background:#ffffff;border:1px solid #7a7a7a;"></div>
<div class="t" style="left:768.5px;top:88.2px;color:#000;font-size:12px;transform:scaleX(0.855);transform-origin:0 0;">8,79</div>
<div class="t" style="left:877.5px;top:88.2px;color:#000;font-size:12px;transform:scaleX(0.855);transform-origin:0 0;">Upper limit</div>
<div class="b" style="left:936px;top:85px;width:103px;height:20px;background:#ffffff;border:1px solid #7a7a7a;"></div>
<div class="t" style="left:939.5px;top:88.2px;color:#000;font-size:12px;transform:scaleX(0.855);transform-origin:0 0;">12,48</div>
<div class="t" style="left:703.4px;top:123.0px;color:#000;font-size:12px;transform:scaleX(0.855);transform-origin:0 0;">Pretreatments</div>
<div class="b" style="left:778px;top:121px;width:264px;height:19px;background:#f0f0f0;border:1px solid #8c8c8c;"></div>
<div class="t" style="left:782px;top:123.0px;color:#000;font-size:12px;transform:scaleX(0.875);transform-origin:0 0;">[1]. FiltA_0,1; [2]. ROI_850_1050_2; [3]. MC; [4].</div>
<div class="b" style="left:697px;top:156px;width:348px;height:141px;background:transparent;border:1px solid #dcdcdc;"></div>
<div class="b" style="left:704px;top:148px;width:50px;height:10px;background:#f0f0f0;"></div>
<div class="t" style="left:706px;top:149.5px;color:#000;font-size:12px;transform:scaleX(0.855);transform-origin:0 0;">Statistics</div>
<div class="t" style="right:303.5px;top:171.0px;color:#000;font-size:12px;transform:scaleX(0.855);transform-origin:100% 0;">Samples</div>
<div class="b" style="left:756px;top:168px;width:88px;height:20px;background:#f0f0f0;border:1px solid #8c8c8c;"></div>
<div class="t" style="left:759.5px;top:171.0px;color:#000;font-size:12px;transform:scaleX(0.855);transform-origin:0 0;">161</div>
<div class="t" style="right:109.5px;top:171.0px;color:#000;font-size:12px;transform:scaleX(0.855);transform-origin:100% 0;">Removed samples</div>
<div class="b" style="left:950px;top:168px;width:89px;height:20px;background:#f0f0f0;border:1px solid #8c8c8c;"></div>
<div class="t" style="left:953.5px;top:171.0px;color:#000;font-size:12px;transform:scaleX(0.855);transform-origin:0 0;">0</div>
<div class="t" style="right:303.5px;top:197.0px;color:#000;font-size:12px;transform:scaleX(0.855);transform-origin:100% 0;">RMSEC</div>
<div class="b" style="left:756px;top:194px;width:88px;height:20px;background:#f0f0f0;border:1px solid #8c8c8c;"></div>
<div class="t" style="left:759.5px;top:197.0px;color:#000;font-size:12px;transform:scaleX(0.855);transform-origin:0 0;">0,22381</div>
<div class="t" style="right:109.5px;top:197.0px;color:#000;font-size:12px;transform:scaleX(0.855);transform-origin:100% 0;">RMSECV</div>
<div class="b" style="left:950px;top:194px;width:89px;height:20px;background:#f0f0f0;border:1px solid #8c8c8c;"></div>
<div class="t" style="left:953.5px;top:197.0px;color:#000;font-size:12px;transform:scaleX(0.855);transform-origin:0 0;">0,23046</div>
<div class="t" style="right:303.5px;top:223.0px;color:#000;font-size:12px;transform:scaleX(0.855);transform-origin:100% 0;">R&sup2;</div>
<div class="b" style="left:756px;top:220px;width:88px;height:20px;background:#f0f0f0;border:1px solid #8c8c8c;"></div>
<div class="t" style="left:759.5px;top:223.0px;color:#000;font-size:12px;transform:scaleX(0.855);transform-origin:0 0;">0,94796</div>
<div class="t" style="right:109.5px;top:223.0px;color:#000;font-size:12px;transform:scaleX(0.855);transform-origin:100% 0;">Adjusted R&sup2;</div>
<div class="b" style="left:950px;top:220px;width:89px;height:20px;background:#f0f0f0;border:1px solid #8c8c8c;"></div>
<div class="t" style="left:953.5px;top:223.0px;color:#000;font-size:12px;transform:scaleX(0.855);transform-origin:0 0;">0,94731</div>
<div class="t" style="right:303.5px;top:249.0px;color:#000;font-size:12px;transform:scaleX(0.855);transform-origin:100% 0;">Slope</div>
<div class="b" style="left:756px;top:246px;width:88px;height:20px;background:#f0f0f0;border:1px solid #8c8c8c;"></div>
<div class="t" style="left:759.5px;top:249.0px;color:#000;font-size:12px;transform:scaleX(0.855);transform-origin:0 0;">0,94796</div>
<div class="t" style="right:109.5px;top:249.0px;color:#000;font-size:12px;transform:scaleX(0.855);transform-origin:100% 0;">Slope prediction</div>
<div class="b" style="left:950px;top:246px;width:89px;height:20px;background:#f0f0f0;border:1px solid #8c8c8c;"></div>
<div class="t" style="left:953.5px;top:249.0px;color:#000;font-size:12px;transform:scaleX(0.855);transform-origin:0 0;">0,94688</div>
<div class="t" style="right:303.5px;top:275.0px;color:#000;font-size:12px;transform:scaleX(0.855);transform-origin:100% 0;">Offset</div>
<div class="b" style="left:756px;top:272px;width:88px;height:20px;background:#f0f0f0;border:1px solid #8c8c8c;"></div>
<div class="t" style="left:759.5px;top:275.0px;color:#000;font-size:12px;transform:scaleX(0.855);transform-origin:0 0;">0,54746</div>
<div class="t" style="right:109.5px;top:275.0px;color:#000;font-size:12px;transform:scaleX(0.855);transform-origin:100% 0;">Offset prediction</div>
<div class="b" style="left:950px;top:272px;width:89px;height:20px;background:#f0f0f0;border:1px solid #8c8c8c;"></div>
<div class="t" style="left:953.5px;top:275.0px;color:#000;font-size:12px;transform:scaleX(0.855);transform-origin:0 0;">0,559</div>
<div class="b" style="left:697px;top:311px;width:348px;height:245px;background:transparent;border:1px solid #dcdcdc;"></div>
<div class="b" style="left:704px;top:303px;width:42px;height:10px;background:#f0f0f0;"></div>
<div class="t" style="left:706px;top:304.5px;color:#000;font-size:12px;transform:scaleX(0.855);transform-origin:0 0;">Actions</div>
<div class="b" style="left:704px;top:324px;width:163px;height:21px;background:#e1e1e1;border:1px solid #adadad;"></div>
<div class="t" style="left:634.5px;width:300px;text-align:center;top:328.0px;color:#000;font-size:12px;transform:scaleX(0.855);transform-origin:50% 0;">Mark outliers</div>
<div class="b" style="left:875px;top:324px;width:163px;height:21px;background:#e1e1e1;border:1px solid #adadad;"></div>
<div class="t" style="left:805.5px;width:300px;text-align:center;top:328.0px;color:#000;font-size:12px;transform:scaleX(0.855);transform-origin:50% 0;">Unmark all</div>
<div class="b" style="left:704px;top:353px;width:163px;height:21px;background:#e1e1e1;border:1px solid #adadad;"></div>
<div class="t" style="left:634.5px;width:300px;text-align:center;top:357.0px;color:#000;font-size:12px;transform:scaleX(0.855);transform-origin:50% 0;">Unmark outlier</div>
<div class="b" style="left:704px;top:382px;width:163px;height:21px;background:#e1e1e1;border:1px solid #adadad;"></div>
<div class="t" style="left:634.5px;width:300px;text-align:center;top:386.0px;color:#000;font-size:12px;transform:scaleX(0.855);transform-origin:50% 0;">Recalculate</div>
<div class="b" style="left:875px;top:382px;width:163px;height:21px;background:#e1e1e1;border:1px solid #adadad;"></div>
<div class="t" style="left:805.5px;width:300px;text-align:center;top:386.0px;color:#000;font-size:12px;transform:scaleX(0.855);transform-origin:50% 0;">Automated improvement</div>
<div class="b" style="left:704px;top:411px;width:163px;height:21px;background:#cccccc;border:1px solid #c4c4c4;"></div>
<div class="t" style="left:634.5px;width:300px;text-align:center;top:415.0px;color:#a3a3a3;font-size:12px;transform:scaleX(0.855);transform-origin:50% 0;">Revert to...</div>
<div class="b" style="left:703px;top:477px;width:336px;height:16px;background:#e6e6e6;border:1px solid #bcbcbc;"></div>
<div class="b" style="left:703px;top:503px;width:13px;height:13px;background:#ffffff;border:1px solid #333333;"></div>
<div class="t" style="left:722.4px;top:503.0px;color:#000;font-size:12px;transform:scaleX(0.872);transform-origin:0 0;">Show report after calibration</div>
<div class="b" style="left:875px;top:500px;width:163px;height:21px;background:#e1e1e1;border:1px solid #adadad;"></div>
<div class="t" style="left:805.5px;width:300px;text-align:center;top:504.0px;color:#000;font-size:12px;transform:scaleX(0.855);transform-origin:50% 0;">Report</div>
<div class="b" style="left:704px;top:529px;width:163px;height:21px;background:#e1e1e1;border:1px solid #adadad;"></div>
<div class="t" style="left:634.5px;width:300px;text-align:center;top:533.0px;color:#000;font-size:12px;transform:scaleX(0.855);transform-origin:50% 0;">Save</div>
<div class="b" style="left:875px;top:529px;width:163px;height:21px;background:#e1e1e1;border:1px solid #adadad;"></div>
<div class="t" style="left:805.5px;width:300px;text-align:center;top:533.0px;color:#000;font-size:12px;transform:scaleX(0.855);transform-origin:50% 0;">Cancel</div>
</body></html>
